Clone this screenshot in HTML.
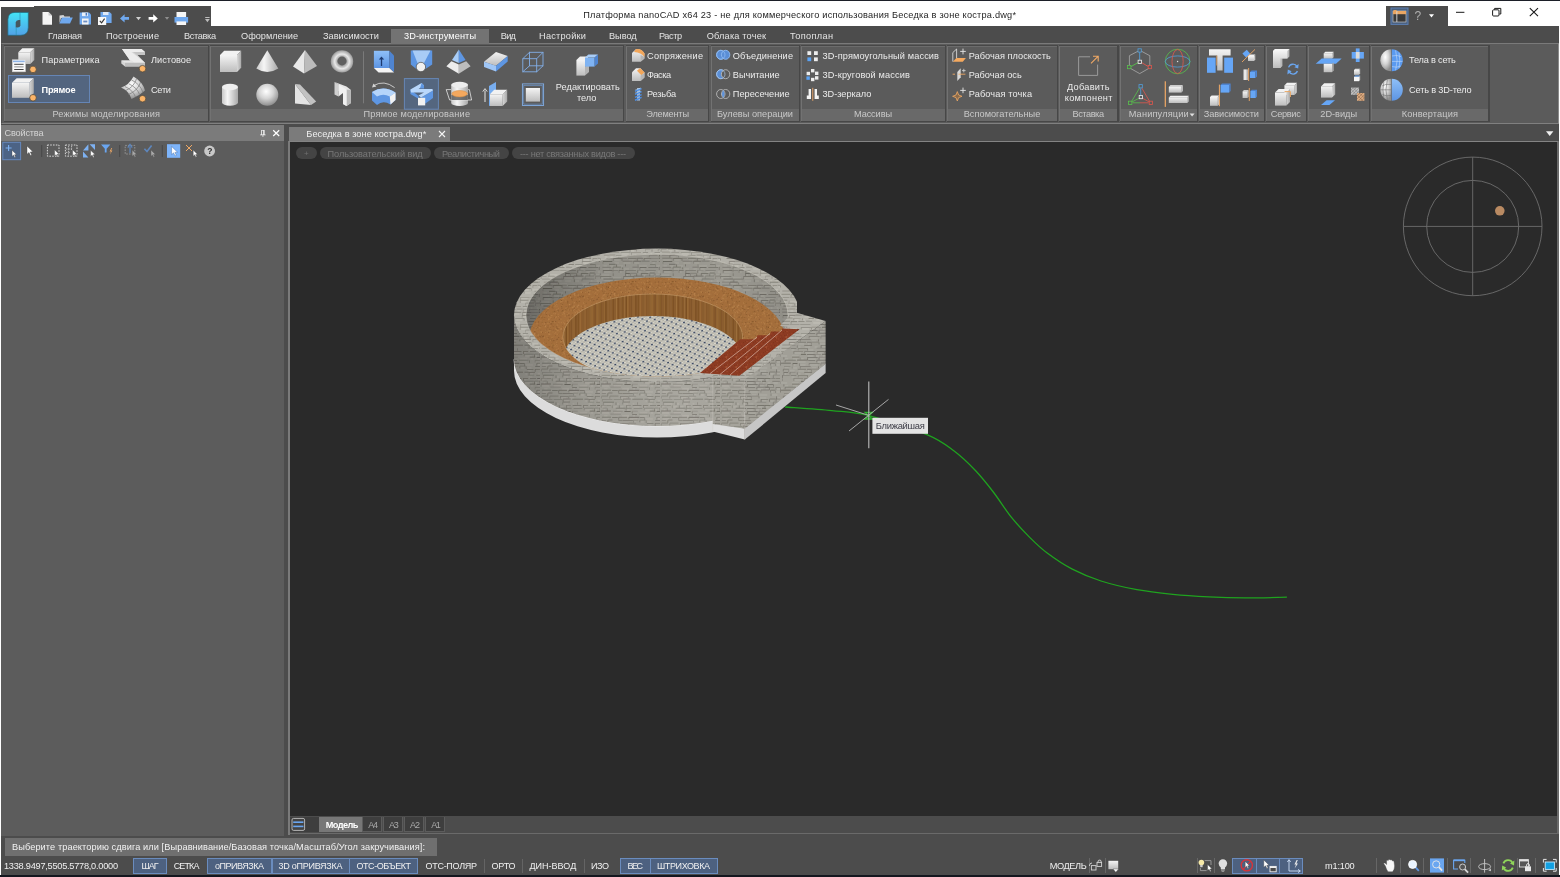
<!DOCTYPE html>
<html lang="ru"><head><meta charset="utf-8"><title>nanoCAD</title>
<style>
html,body{margin:0;padding:0;}
body{width:1560px;height:877px;overflow:hidden;background:#fff;position:relative;font-family:"Liberation Sans", sans-serif;}
#app{position:absolute;left:0;top:0;width:1560px;height:877px;overflow:hidden;will-change:transform;}
#app>div{position:absolute;box-sizing:border-box;}
#app>span{position:absolute;white-space:pre;line-height:14px;height:14px;}
#app>svg{position:absolute;left:0;top:0;}
</style></head><body><div id="app">
<div style="left:0px;top:0px;width:1560px;height:877px;background:#ffffff;"></div>
<div style="left:0px;top:0px;width:1560px;height:1px;background:#1c1f28;"></div>
<div style="left:1px;top:7px;width:34px;height:20px;background:#4c4c4c;"></div>
<div style="left:34px;top:6px;width:177px;height:21px;background:#4c4c4c;"></div>
<div style="left:1386px;top:6px;width:62px;height:21px;background:#4c4c4c;"></div>
<div style="left:1px;top:26px;width:1558px;height:18px;background:#4c4c4c;"></div>
<div style="left:391.2px;top:28.5px;width:97.6px;height:15px;background:#737373;"></div>
<div style="left:1px;top:43px;width:1558px;height:81px;background:#5b5b5b;border-top:1px solid #7a7a7a;border-right:1px solid #8a8a8a;border-bottom:1px solid #808080;border-left:1px solid #4c4c4c"></div>
<div style="left:391.2px;top:43px;width:97.6px;height:1.2px;background:#737373;"></div>
<div style="left:3.6px;top:44.6px;width:205.6px;height:77.1px;background:#474747;"></div>
<div style="left:3.6px;top:45.5px;width:204.4px;height:75.4px;background:#5b5b5b;border-top:1px solid #6c6c6c;border-left:1px solid #727272;"></div>
<div style="left:4.6px;top:109px;width:203.4px;height:11.9px;background:#696969;"></div>
<div style="left:209.6px;top:44.6px;width:414.6px;height:77.1px;background:#474747;"></div>
<div style="left:209.6px;top:45.5px;width:413.4px;height:75.4px;background:#5b5b5b;border-top:1px solid #6c6c6c;border-left:1px solid #727272;"></div>
<div style="left:210.6px;top:109px;width:412.4px;height:11.9px;background:#696969;"></div>
<div style="left:625.6px;top:44.6px;width:83.6px;height:77.1px;background:#474747;"></div>
<div style="left:625.6px;top:45.5px;width:82.4px;height:75.4px;background:#5b5b5b;border-top:1px solid #6c6c6c;border-left:1px solid #727272;"></div>
<div style="left:626.6px;top:109px;width:81.4px;height:11.9px;background:#696969;"></div>
<div style="left:710.6px;top:44.6px;width:89.6px;height:77.1px;background:#474747;"></div>
<div style="left:710.6px;top:45.5px;width:88.4px;height:75.4px;background:#5b5b5b;border-top:1px solid #6c6c6c;border-left:1px solid #727272;"></div>
<div style="left:711.6px;top:109px;width:87.4px;height:11.9px;background:#696969;"></div>
<div style="left:800.6px;top:44.6px;width:145.6px;height:77.1px;background:#474747;"></div>
<div style="left:800.6px;top:45.5px;width:144.4px;height:75.4px;background:#5b5b5b;border-top:1px solid #6c6c6c;border-left:1px solid #727272;"></div>
<div style="left:801.6px;top:109px;width:143.4px;height:11.9px;background:#696969;"></div>
<div style="left:946.6px;top:44.6px;width:111.6px;height:77.1px;background:#474747;"></div>
<div style="left:946.6px;top:45.5px;width:110.4px;height:75.4px;background:#5b5b5b;border-top:1px solid #6c6c6c;border-left:1px solid #727272;"></div>
<div style="left:947.6px;top:109px;width:109.4px;height:11.9px;background:#696969;"></div>
<div style="left:1058.6px;top:44.6px;width:60.1px;height:77.1px;background:#474747;"></div>
<div style="left:1058.6px;top:45.5px;width:58.9px;height:75.4px;background:#5b5b5b;border-top:1px solid #6c6c6c;border-left:1px solid #727272;"></div>
<div style="left:1059.6px;top:109px;width:57.9px;height:11.9px;background:#696969;"></div>
<div style="left:1119.6px;top:44.6px;width:78.6px;height:77.1px;background:#474747;"></div>
<div style="left:1119.6px;top:45.5px;width:77.4px;height:75.4px;background:#5b5b5b;border-top:1px solid #6c6c6c;border-left:1px solid #727272;"></div>
<div style="left:1120.6px;top:109px;width:76.4px;height:11.9px;background:#696969;"></div>
<div style="left:1198.6px;top:44.6px;width:66.6px;height:77.1px;background:#474747;"></div>
<div style="left:1198.6px;top:45.5px;width:65.4px;height:75.4px;background:#5b5b5b;border-top:1px solid #6c6c6c;border-left:1px solid #727272;"></div>
<div style="left:1199.6px;top:109px;width:64.4px;height:11.9px;background:#696969;"></div>
<div style="left:1265.6px;top:44.6px;width:41.6px;height:77.1px;background:#474747;"></div>
<div style="left:1265.6px;top:45.5px;width:40.4px;height:75.4px;background:#5b5b5b;border-top:1px solid #6c6c6c;border-left:1px solid #727272;"></div>
<div style="left:1266.6px;top:109px;width:39.4px;height:11.9px;background:#696969;"></div>
<div style="left:1307.6px;top:44.6px;width:62.6px;height:77.1px;background:#474747;"></div>
<div style="left:1307.6px;top:45.5px;width:61.4px;height:75.4px;background:#5b5b5b;border-top:1px solid #6c6c6c;border-left:1px solid #727272;"></div>
<div style="left:1308.6px;top:109px;width:60.4px;height:11.9px;background:#696969;"></div>
<div style="left:1370.6px;top:44.6px;width:119.1px;height:77.1px;background:#474747;"></div>
<div style="left:1370.6px;top:45.5px;width:117.9px;height:75.4px;background:#5b5b5b;border-top:1px solid #6c6c6c;border-left:1px solid #727272;"></div>
<div style="left:1371.6px;top:109px;width:116.9px;height:11.9px;background:#696969;"></div>
<div style="left:1px;top:124px;width:1558px;height:753px;background:#4c4c4c;"></div>
<div style="left:1px;top:125px;width:283px;height:16px;background:#7b7b7b;"></div>
<div style="left:1px;top:141px;width:283px;height:694.5px;background:#5c5c5c;"></div>
<div style="left:289px;top:127px;width:161px;height:14px;background:#7b7b7b;"></div>
<div style="left:289px;top:141px;width:1269.5px;height:693px;background:#6a6a6a;"></div>
<div style="left:288px;top:141px;width:2px;height:693.5px;background:#7a7a7a;"></div>
<div style="left:289px;top:141px;width:1269px;height:1px;background:#848484;"></div>
<div style="left:290px;top:142px;width:1267px;height:674px;background:#2a2a2a;"></div>
<div style="left:290px;top:816px;width:1267px;height:17px;background:#4c4c4c;"></div>
<div style="left:290px;top:817px;width:29px;height:15px;background:#3e3e3e;"></div>
<div style="left:319px;top:817px;width:43px;height:15px;background:#777777;"></div>
<div style="left:362px;top:817px;width:20px;height:15px;background:#3e3e3e;border:1px solid #5c5c5c;border-top:none"></div>
<div style="left:383px;top:817px;width:20px;height:15px;background:#3e3e3e;border:1px solid #5c5c5c;border-top:none"></div>
<div style="left:404px;top:817px;width:20px;height:15px;background:#3e3e3e;border:1px solid #5c5c5c;border-top:none"></div>
<div style="left:425px;top:817px;width:20px;height:15px;background:#3e3e3e;border:1px solid #5c5c5c;border-top:none"></div>
<div style="left:4.5px;top:838px;width:432.5px;height:18px;background:#6f6f6f;"></div>
<div style="left:0px;top:874.5px;width:1560px;height:2.5px;background:#14171f;"></div>
<div style="left:132.7px;top:857.5px;width:34.30000000000001px;height:16.5px;background:#4d6180;border:1px solid #6a8cbe;"></div>
<div style="left:206.6px;top:857.5px;width:65.4px;height:16.5px;background:#4d6180;border:1px solid #6a8cbe;"></div>
<div style="left:271.5px;top:857.5px;width:78.0px;height:16.5px;background:#4d6180;border:1px solid #6a8cbe;"></div>
<div style="left:349px;top:857.5px;width:69px;height:16.5px;background:#4d6180;border:1px solid #6a8cbe;"></div>
<div style="left:620px;top:857.5px;width:30.5px;height:16.5px;background:#4d6180;border:1px solid #6a8cbe;"></div>
<div style="left:650px;top:857.5px;width:67.5px;height:16.5px;background:#4d6180;border:1px solid #6a8cbe;"></div>
<div style="left:484.3px;top:859px;width:1px;height:14px;background:#646464;"></div>
<div style="left:522.3px;top:859px;width:1px;height:14px;background:#646464;"></div>
<div style="left:584px;top:859px;width:1px;height:14px;background:#646464;"></div>
<div style="left:1088.5px;top:858px;width:1px;height:15px;background:#666666;"></div>
<div style="left:1105.3px;top:858px;width:1px;height:15px;background:#666666;"></div>
<div style="left:1196.7px;top:858px;width:1px;height:15px;background:#666666;"></div>
<div style="left:1214px;top:858px;width:1px;height:15px;background:#666666;"></div>
<div style="left:1376px;top:858px;width:1px;height:15px;background:#666666;"></div>
<div style="left:1399.5px;top:858px;width:1px;height:15px;background:#666666;"></div>
<div style="left:1423px;top:858px;width:1px;height:15px;background:#666666;"></div>
<div style="left:1447px;top:858px;width:1px;height:15px;background:#666666;"></div>
<div style="left:1470px;top:858px;width:1px;height:15px;background:#666666;"></div>
<div style="left:1494px;top:858px;width:1px;height:15px;background:#666666;"></div>
<div style="left:1517px;top:858px;width:1px;height:15px;background:#666666;"></div>
<div style="left:1535px;top:858px;width:1px;height:15px;background:#666666;"></div>
<div style="left:1232px;top:857.5px;width:71px;height:16.5px;background:#4d6180;border:1px solid #6a8cbe;"></div>
<div style="left:1255.5px;top:858px;width:1px;height:15.5px;background:#6a8cbe;"></div>
<div style="left:1279px;top:858px;width:1px;height:15.5px;background:#6a8cbe;"></div>
<div style="left:7.5px;top:75px;width:82.5px;height:28.3px;background:#53657f;border:1px solid #6585b5;"></div>
<div style="left:296px;top:147px;width:20.5px;height:12px;background:#444444;border-radius:6px;"></div>
<div style="left:319.5px;top:147px;width:111.19999999999999px;height:12px;background:#444444;border-radius:6px;"></div>
<div style="left:434px;top:147px;width:74.69999999999999px;height:12px;background:#444444;border-radius:6px;"></div>
<div style="left:511.7px;top:147px;width:123.09999999999997px;height:12px;background:#444444;border-radius:6px;"></div>
<svg width="1560" height="877" viewBox="0 0 1560 877">
<defs>
<pattern id="stW" width="60" height="27" patternUnits="userSpaceOnUse"><rect width="60" height="27" fill="#a5a39b"/><path d="M1.3 0.0 h5.1" stroke="#615e56" stroke-width="0.8" opacity="0.60"/><path d="M1.3 0.3 v2.5" stroke="#615e56" stroke-width="0.7" opacity="0.41"/><rect x="2.3" y="1.2" width="2.1" height="1.5" fill="#b5b3ab" opacity="0.55"/><path d="M6.5 0.5 h4.6" stroke="#615e56" stroke-width="0.6" opacity="0.54"/><path d="M12.3 0.3 v2.9" stroke="#615e56" stroke-width="0.7" opacity="0.52"/><rect x="13.3" y="1.2" width="3.8" height="1.5" fill="#b5b3ab" opacity="0.55"/><path d="M19.3 0.3 v2.6" stroke="#615e56" stroke-width="0.7" opacity="0.66"/><rect x="20.3" y="1.2" width="3.2" height="1.5" fill="#b5b3ab" opacity="0.55"/><path d="M26.5 0.1 h4.4" stroke="#615e56" stroke-width="0.9" opacity="0.62"/><path d="M26.5 0.3 v2.6" stroke="#615e56" stroke-width="0.7" opacity="0.58"/><rect x="27.5" y="1.2" width="1.5" height="1.5" fill="#b5b3ab" opacity="0.55"/><path d="M32.6 0.3 h8.9" stroke="#615e56" stroke-width="0.8" opacity="0.80"/><rect x="33.6" y="1.2" width="5.9" height="1.5" fill="#b5b3ab" opacity="0.55"/><path d="M43.4 0.5 h4.8" stroke="#615e56" stroke-width="0.7" opacity="0.65"/><path d="M43.4 0.3 v2.7" stroke="#615e56" stroke-width="0.7" opacity="0.71"/><rect x="44.4" y="1.2" width="1.8" height="1.5" fill="#b5b3ab" opacity="0.55"/><path d="M50.0 0.4 h6.2" stroke="#615e56" stroke-width="0.8" opacity="0.63"/><path d="M57.2 0.4 h2.8" stroke="#615e56" stroke-width="0.9" opacity="0.85"/><rect x="58.2" y="1.2" width="5.6" height="1.5" fill="#b5b3ab" opacity="0.55"/><path d="M2.7 3.1 h4.2" stroke="#615e56" stroke-width="0.6" opacity="0.47"/><rect x="3.7" y="4.2" width="1.5" height="1.5" fill="#b5b3ab" opacity="0.55"/><path d="M7.3 3.3 v2.4" stroke="#615e56" stroke-width="0.7" opacity="0.62"/><path d="M15.7 3.2 h10.0" stroke="#615e56" stroke-width="0.7" opacity="0.80"/><rect x="16.7" y="4.2" width="7.0" height="1.5" fill="#b5b3ab" opacity="0.55"/><path d="M26.1 3.3 h5.6" stroke="#615e56" stroke-width="0.8" opacity="0.56"/><path d="M26.1 3.3 v2.4" stroke="#615e56" stroke-width="0.7" opacity="0.55"/><rect x="27.1" y="4.2" width="2.6" height="1.5" fill="#b5b3ab" opacity="0.55"/><path d="M33.6 3.4 h8.8" stroke="#615e56" stroke-width="0.9" opacity="0.47"/><path d="M44.2 3.2 h9.6" stroke="#615e56" stroke-width="0.6" opacity="0.70"/><path d="M44.2 3.3 v2.1" stroke="#615e56" stroke-width="0.7" opacity="0.48"/><rect x="45.2" y="4.2" width="6.6" height="1.5" fill="#b5b3ab" opacity="0.55"/><path d="M54.5 3.1 h4.4" stroke="#615e56" stroke-width="0.6" opacity="0.60"/><path d="M54.5 3.3 v2.9" stroke="#615e56" stroke-width="0.7" opacity="0.65"/><rect x="55.5" y="4.2" width="1.5" height="1.5" fill="#b5b3ab" opacity="0.55"/><path d="M59.4 3.1 h0.6" stroke="#615e56" stroke-width="0.9" opacity="0.85"/><path d="M59.4 3.3 v2.5" stroke="#615e56" stroke-width="0.7" opacity="0.43"/><rect x="60.4" y="4.2" width="3.4" height="1.5" fill="#b5b3ab" opacity="0.55"/><path d="M1.1 6.0 h9.8" stroke="#615e56" stroke-width="1.0" opacity="0.66"/><path d="M1.1 6.3 v2.5" stroke="#615e56" stroke-width="0.7" opacity="0.41"/><rect x="2.1" y="7.2" width="6.8" height="1.5" fill="#b5b3ab" opacity="0.55"/><path d="M12.8 6.2 h10.0" stroke="#615e56" stroke-width="0.7" opacity="0.52"/><rect x="13.8" y="7.2" width="7.0" height="1.5" fill="#b5b3ab" opacity="0.55"/><path d="M24.4 6.5 h6.3" stroke="#615e56" stroke-width="1.0" opacity="0.79"/><path d="M32.2 6.2 h5.6" stroke="#615e56" stroke-width="0.6" opacity="0.46"/><path d="M32.2 6.3 v2.3" stroke="#615e56" stroke-width="0.7" opacity="0.68"/><rect x="39.7" y="7.2" width="7.6" height="1.5" fill="#b5b3ab" opacity="0.55"/><path d="M49.7 6.1 h5.6" stroke="#615e56" stroke-width="0.8" opacity="0.81"/><rect x="50.7" y="7.2" width="2.6" height="1.5" fill="#b5b3ab" opacity="0.55"/><path d="M56.6 6.4 h3.4" stroke="#615e56" stroke-width="1.0" opacity="0.76"/><rect x="57.6" y="7.2" width="6.6" height="1.5" fill="#b5b3ab" opacity="0.55"/><rect x="4.2" y="10.2" width="3.3" height="1.5" fill="#b5b3ab" opacity="0.55"/><path d="M10.3 9.1 h10.6" stroke="#615e56" stroke-width="0.7" opacity="0.51"/><rect x="22.2" y="10.2" width="6.8" height="1.5" fill="#b5b3ab" opacity="0.55"/><path d="M32.1 9.6 h4.9" stroke="#615e56" stroke-width="0.9" opacity="0.66"/><rect x="33.1" y="10.2" width="1.9" height="1.5" fill="#b5b3ab" opacity="0.55"/><path d="M38.8 9.2 h9.8" stroke="#615e56" stroke-width="0.7" opacity="0.55"/><rect x="39.8" y="10.2" width="6.8" height="1.5" fill="#b5b3ab" opacity="0.55"/><path d="M49.4 9.3 v2.5" stroke="#615e56" stroke-width="0.7" opacity="0.63"/><path d="M55.1 9.3 h4.9" stroke="#615e56" stroke-width="0.8" opacity="0.46"/><path d="M55.1 9.3 v2.2" stroke="#615e56" stroke-width="0.7" opacity="0.40"/><path d="M1.9 12.2 h9.1" stroke="#615e56" stroke-width="0.8" opacity="0.67"/><rect x="2.9" y="13.2" width="6.1" height="1.5" fill="#b5b3ab" opacity="0.55"/><path d="M12.1 12.5 h5.7" stroke="#615e56" stroke-width="0.8" opacity="0.67"/><path d="M18.7 12.3 h8.3" stroke="#615e56" stroke-width="0.9" opacity="0.63"/><path d="M18.7 12.3 v2.5" stroke="#615e56" stroke-width="0.7" opacity="0.78"/><path d="M28.8 12.3 h10.6" stroke="#615e56" stroke-width="1.0" opacity="0.79"/><path d="M28.8 12.3 v2.1" stroke="#615e56" stroke-width="0.7" opacity="0.58"/><rect x="29.8" y="13.2" width="7.6" height="1.5" fill="#b5b3ab" opacity="0.55"/><path d="M39.8 12.5 h4.5" stroke="#615e56" stroke-width="1.0" opacity="0.51"/><path d="M44.6 12.3 v3.0" stroke="#615e56" stroke-width="0.7" opacity="0.56"/><rect x="45.6" y="13.2" width="7.2" height="1.5" fill="#b5b3ab" opacity="0.55"/><path d="M56.8 12.3 h3.2" stroke="#615e56" stroke-width="0.8" opacity="0.59"/><path d="M56.8 12.3 v2.3" stroke="#615e56" stroke-width="0.7" opacity="0.69"/><rect x="57.8" y="13.2" width="6.8" height="1.5" fill="#b5b3ab" opacity="0.55"/><path d="M1.8 15.4 h4.1" stroke="#615e56" stroke-width="0.8" opacity="0.48"/><path d="M7.8 15.0 h4.7" stroke="#615e56" stroke-width="0.9" opacity="0.56"/><path d="M7.8 15.3 v2.4" stroke="#615e56" stroke-width="0.7" opacity="0.76"/><path d="M18.3 15.3 h4.4" stroke="#615e56" stroke-width="0.6" opacity="0.83"/><path d="M22.9 15.5 h10.0" stroke="#615e56" stroke-width="0.8" opacity="0.59"/><path d="M33.4 15.1 h4.9" stroke="#615e56" stroke-width="0.6" opacity="0.51"/><path d="M33.4 15.3 v2.2" stroke="#615e56" stroke-width="0.7" opacity="0.52"/><rect x="34.4" y="16.2" width="1.9" height="1.5" fill="#b5b3ab" opacity="0.55"/><path d="M39.8 15.1 h6.0" stroke="#615e56" stroke-width="0.7" opacity="0.46"/><path d="M39.8 15.3 v2.0" stroke="#615e56" stroke-width="0.7" opacity="0.69"/><rect x="40.8" y="16.2" width="3.0" height="1.5" fill="#b5b3ab" opacity="0.55"/><path d="M46.2 15.3 v2.8" stroke="#615e56" stroke-width="0.7" opacity="0.57"/><rect x="47.2" y="16.2" width="4.3" height="1.5" fill="#b5b3ab" opacity="0.55"/><path d="M55.2 15.4 h4.8" stroke="#615e56" stroke-width="1.0" opacity="0.59"/><path d="M1.6 18.1 h6.4" stroke="#615e56" stroke-width="0.6" opacity="0.75"/><path d="M1.6 18.3 v2.2" stroke="#615e56" stroke-width="0.7" opacity="0.43"/><path d="M9.8 18.1 h8.7" stroke="#615e56" stroke-width="0.7" opacity="0.63"/><path d="M9.8 18.3 v2.4" stroke="#615e56" stroke-width="0.7" opacity="0.51"/><path d="M20.4 18.6 h7.8" stroke="#615e56" stroke-width="0.7" opacity="0.59"/><path d="M20.4 18.3 v2.4" stroke="#615e56" stroke-width="0.7" opacity="0.59"/><rect x="21.4" y="19.2" width="4.8" height="1.5" fill="#b5b3ab" opacity="0.55"/><path d="M28.7 18.2 h7.5" stroke="#615e56" stroke-width="0.6" opacity="0.61"/><path d="M28.7 18.3 v2.0" stroke="#615e56" stroke-width="0.7" opacity="0.52"/><rect x="29.7" y="19.2" width="4.5" height="1.5" fill="#b5b3ab" opacity="0.55"/><path d="M46.8 18.6 h6.7" stroke="#615e56" stroke-width="0.7" opacity="0.74"/><rect x="47.8" y="19.2" width="3.7" height="1.5" fill="#b5b3ab" opacity="0.55"/><path d="M55.2 18.4 h4.8" stroke="#615e56" stroke-width="0.9" opacity="0.51"/><path d="M55.2 18.3 v2.5" stroke="#615e56" stroke-width="0.7" opacity="0.73"/><path d="M2.3 21.4 h10.2" stroke="#615e56" stroke-width="0.7" opacity="0.46"/><path d="M2.3 21.3 v2.4" stroke="#615e56" stroke-width="0.7" opacity="0.44"/><path d="M13.7 21.4 h8.4" stroke="#615e56" stroke-width="0.8" opacity="0.45"/><path d="M23.1 21.0 h7.7" stroke="#615e56" stroke-width="0.9" opacity="0.55"/><path d="M23.1 21.3 v2.3" stroke="#615e56" stroke-width="0.7" opacity="0.69"/><rect x="24.1" y="22.2" width="4.7" height="1.5" fill="#b5b3ab" opacity="0.55"/><path d="M32.3 21.2 h10.8" stroke="#615e56" stroke-width="0.8" opacity="0.72"/><path d="M44.4 21.2 h4.5" stroke="#615e56" stroke-width="0.9" opacity="0.57"/><rect x="45.4" y="22.2" width="1.5" height="1.5" fill="#b5b3ab" opacity="0.55"/><path d="M49.1 21.4 h5.9" stroke="#615e56" stroke-width="0.9" opacity="0.57"/><path d="M49.1 21.3 v2.5" stroke="#615e56" stroke-width="0.7" opacity="0.59"/><rect x="50.1" y="22.2" width="2.9" height="1.5" fill="#b5b3ab" opacity="0.55"/><rect x="57.8" y="22.2" width="2.4" height="1.5" fill="#b5b3ab" opacity="0.55"/><path d="M3.3 24.2 h10.8" stroke="#615e56" stroke-width="0.7" opacity="0.83"/><path d="M3.3 24.3 v2.6" stroke="#615e56" stroke-width="0.7" opacity="0.46"/><rect x="4.3" y="25.2" width="7.8" height="1.5" fill="#b5b3ab" opacity="0.55"/><path d="M16.0 24.3 v2.9" stroke="#615e56" stroke-width="0.7" opacity="0.68"/><rect x="17.0" y="25.2" width="1.9" height="1.5" fill="#b5b3ab" opacity="0.55"/><path d="M22.7 24.0 h7.4" stroke="#615e56" stroke-width="0.8" opacity="0.63"/><path d="M22.7 24.3 v2.1" stroke="#615e56" stroke-width="0.7" opacity="0.54"/><rect x="23.7" y="25.2" width="4.4" height="1.5" fill="#b5b3ab" opacity="0.55"/><rect x="32.8" y="25.2" width="1.5" height="1.5" fill="#b5b3ab" opacity="0.55"/><path d="M37.6 24.3 v2.4" stroke="#615e56" stroke-width="0.7" opacity="0.56"/><path d="M47.8 24.2 h6.5" stroke="#615e56" stroke-width="0.6" opacity="0.49"/><rect x="48.8" y="25.2" width="3.5" height="1.5" fill="#b5b3ab" opacity="0.55"/><path d="M56.2 24.3 h3.8" stroke="#615e56" stroke-width="0.7" opacity="0.60"/></pattern>
<pattern id="stR" width="60" height="27" patternUnits="userSpaceOnUse"><rect width="60" height="27" fill="#a19f97"/><path d="M2.5 0.3 v2.7" stroke="#5f5c54" stroke-width="0.7" opacity="0.42"/><path d="M13.8 0.2 h9.3" stroke="#5f5c54" stroke-width="0.6" opacity="0.82"/><path d="M13.8 0.3 v2.5" stroke="#5f5c54" stroke-width="0.7" opacity="0.54"/><rect x="14.8" y="1.2" width="6.3" height="1.5" fill="#b1afa7" opacity="0.55"/><path d="M24.6 0.4 h10.8" stroke="#5f5c54" stroke-width="0.7" opacity="0.67"/><path d="M24.6 0.3 v2.2" stroke="#5f5c54" stroke-width="0.7" opacity="0.46"/><rect x="25.6" y="1.2" width="7.8" height="1.5" fill="#b1afa7" opacity="0.55"/><path d="M37.2 0.5 h7.5" stroke="#5f5c54" stroke-width="1.0" opacity="0.63"/><path d="M37.2 0.3 v2.2" stroke="#5f5c54" stroke-width="0.7" opacity="0.44"/><rect x="38.2" y="1.2" width="4.5" height="1.5" fill="#b1afa7" opacity="0.55"/><path d="M44.9 0.3 h5.7" stroke="#5f5c54" stroke-width="1.0" opacity="0.75"/><path d="M44.9 0.3 v2.4" stroke="#5f5c54" stroke-width="0.7" opacity="0.61"/><rect x="45.9" y="1.2" width="2.7" height="1.5" fill="#b1afa7" opacity="0.55"/><path d="M51.2 0.6 h4.4" stroke="#5f5c54" stroke-width="0.7" opacity="0.65"/><path d="M56.1 0.2 h3.9" stroke="#5f5c54" stroke-width="0.8" opacity="0.83"/><path d="M0.1 3.3 v2.6" stroke="#5f5c54" stroke-width="0.7" opacity="0.40"/><rect x="1.1" y="4.2" width="6.0" height="1.5" fill="#b1afa7" opacity="0.55"/><rect x="11.9" y="4.2" width="6.8" height="1.5" fill="#b1afa7" opacity="0.55"/><path d="M20.9 3.4 h5.1" stroke="#5f5c54" stroke-width="1.0" opacity="0.74"/><path d="M26.9 3.5 h7.9" stroke="#5f5c54" stroke-width="0.7" opacity="0.82"/><rect x="27.9" y="4.2" width="4.9" height="1.5" fill="#b1afa7" opacity="0.55"/><path d="M35.1 3.4 h5.8" stroke="#5f5c54" stroke-width="0.6" opacity="0.48"/><path d="M35.1 3.3 v2.6" stroke="#5f5c54" stroke-width="0.7" opacity="0.56"/><rect x="36.1" y="4.2" width="2.8" height="1.5" fill="#b1afa7" opacity="0.55"/><path d="M42.0 3.3 h4.1" stroke="#5f5c54" stroke-width="1.0" opacity="0.71"/><rect x="43.0" y="4.2" width="1.5" height="1.5" fill="#b1afa7" opacity="0.55"/><rect x="47.6" y="4.2" width="2.7" height="1.5" fill="#b1afa7" opacity="0.55"/><path d="M52.3 3.3 h7.5" stroke="#5f5c54" stroke-width="0.7" opacity="0.72"/><rect x="53.3" y="4.2" width="4.5" height="1.5" fill="#b1afa7" opacity="0.55"/><path d="M59.9 3.4 h0.1" stroke="#5f5c54" stroke-width="0.7" opacity="0.77"/><rect x="60.9" y="4.2" width="3.4" height="1.5" fill="#b1afa7" opacity="0.55"/><path d="M3.9 6.3 v2.2" stroke="#5f5c54" stroke-width="0.7" opacity="0.70"/><rect x="4.9" y="7.2" width="3.2" height="1.5" fill="#b1afa7" opacity="0.55"/><path d="M12.0 6.1 h7.5" stroke="#5f5c54" stroke-width="0.8" opacity="0.72"/><rect x="13.0" y="7.2" width="4.5" height="1.5" fill="#b1afa7" opacity="0.55"/><path d="M20.2 6.3 v2.1" stroke="#5f5c54" stroke-width="0.7" opacity="0.42"/><rect x="21.2" y="7.2" width="2.5" height="1.5" fill="#b1afa7" opacity="0.55"/><path d="M27.5 6.6 h10.2" stroke="#5f5c54" stroke-width="1.0" opacity="0.58"/><path d="M27.5 6.3 v2.9" stroke="#5f5c54" stroke-width="0.7" opacity="0.70"/><rect x="28.5" y="7.2" width="7.2" height="1.5" fill="#b1afa7" opacity="0.55"/><path d="M39.0 6.2 h6.7" stroke="#5f5c54" stroke-width="0.7" opacity="0.45"/><path d="M39.0 6.3 v2.4" stroke="#5f5c54" stroke-width="0.7" opacity="0.78"/><rect x="40.0" y="7.2" width="3.7" height="1.5" fill="#b1afa7" opacity="0.55"/><path d="M47.6 6.5 h5.5" stroke="#5f5c54" stroke-width="0.9" opacity="0.62"/><path d="M47.6 6.3 v2.5" stroke="#5f5c54" stroke-width="0.7" opacity="0.55"/><path d="M53.4 6.3 v2.4" stroke="#5f5c54" stroke-width="0.7" opacity="0.72"/><path d="M0.1 9.3 v2.7" stroke="#5f5c54" stroke-width="0.7" opacity="0.76"/><rect x="1.1" y="10.2" width="1.5" height="1.5" fill="#b1afa7" opacity="0.55"/><path d="M5.1 9.2 h10.7" stroke="#5f5c54" stroke-width="0.9" opacity="0.58"/><path d="M5.1 9.3 v2.0" stroke="#5f5c54" stroke-width="0.7" opacity="0.70"/><path d="M17.1 9.1 h10.6" stroke="#5f5c54" stroke-width="0.8" opacity="0.83"/><rect x="18.1" y="10.2" width="7.6" height="1.5" fill="#b1afa7" opacity="0.55"/><path d="M28.2 9.6 h7.0" stroke="#5f5c54" stroke-width="0.7" opacity="0.77"/><path d="M36.8 9.2 h8.3" stroke="#5f5c54" stroke-width="0.7" opacity="0.76"/><path d="M36.8 9.3 v2.2" stroke="#5f5c54" stroke-width="0.7" opacity="0.70"/><rect x="37.8" y="10.2" width="5.3" height="1.5" fill="#b1afa7" opacity="0.55"/><path d="M45.1 9.2 h4.2" stroke="#5f5c54" stroke-width="1.0" opacity="0.80"/><rect x="46.1" y="10.2" width="1.5" height="1.5" fill="#b1afa7" opacity="0.55"/><path d="M49.5 9.4 h4.7" stroke="#5f5c54" stroke-width="0.8" opacity="0.54"/><path d="M49.5 9.3 v2.6" stroke="#5f5c54" stroke-width="0.7" opacity="0.67"/><path d="M55.9 9.5 h4.1" stroke="#5f5c54" stroke-width="0.7" opacity="0.68"/><path d="M55.9 9.3 v2.7" stroke="#5f5c54" stroke-width="0.7" opacity="0.48"/><rect x="56.9" y="10.2" width="5.7" height="1.5" fill="#b1afa7" opacity="0.55"/><path d="M0.6 12.2 h10.2" stroke="#5f5c54" stroke-width="0.8" opacity="0.85"/><path d="M0.6 12.3 v2.2" stroke="#5f5c54" stroke-width="0.7" opacity="0.72"/><path d="M12.8 12.5 h4.7" stroke="#5f5c54" stroke-width="0.9" opacity="0.82"/><path d="M12.8 12.3 v2.3" stroke="#5f5c54" stroke-width="0.7" opacity="0.45"/><rect x="13.8" y="13.2" width="1.7" height="1.5" fill="#b1afa7" opacity="0.55"/><path d="M19.4 12.3 v2.9" stroke="#5f5c54" stroke-width="0.7" opacity="0.58"/><rect x="20.4" y="13.2" width="5.1" height="1.5" fill="#b1afa7" opacity="0.55"/><path d="M29.1 12.4 h10.6" stroke="#5f5c54" stroke-width="0.8" opacity="0.54"/><path d="M29.1 12.3 v2.1" stroke="#5f5c54" stroke-width="0.7" opacity="0.48"/><rect x="30.1" y="13.2" width="7.6" height="1.5" fill="#b1afa7" opacity="0.55"/><path d="M40.9 12.0 h8.6" stroke="#5f5c54" stroke-width="0.7" opacity="0.72"/><path d="M40.9 12.3 v2.3" stroke="#5f5c54" stroke-width="0.7" opacity="0.48"/><path d="M50.6 12.2 h4.4" stroke="#5f5c54" stroke-width="0.8" opacity="0.71"/><path d="M50.6 12.3 v2.2" stroke="#5f5c54" stroke-width="0.7" opacity="0.68"/><rect x="51.6" y="13.2" width="1.5" height="1.5" fill="#b1afa7" opacity="0.55"/><path d="M55.6 12.3 v2.6" stroke="#5f5c54" stroke-width="0.7" opacity="0.54"/><rect x="56.6" y="13.2" width="3.2" height="1.5" fill="#b1afa7" opacity="0.55"/><path d="M4.0 15.4 h6.5" stroke="#5f5c54" stroke-width="0.7" opacity="0.45"/><rect x="5.0" y="16.2" width="3.5" height="1.5" fill="#b1afa7" opacity="0.55"/><path d="M12.2 15.3 v2.2" stroke="#5f5c54" stroke-width="0.7" opacity="0.41"/><rect x="13.2" y="16.2" width="3.8" height="1.5" fill="#b1afa7" opacity="0.55"/><path d="M20.3 15.4 h10.4" stroke="#5f5c54" stroke-width="0.7" opacity="0.65"/><path d="M20.3 15.3 v2.3" stroke="#5f5c54" stroke-width="0.7" opacity="0.61"/><rect x="31.9" y="16.2" width="4.4" height="1.5" fill="#b1afa7" opacity="0.55"/><path d="M38.6 15.3 v2.1" stroke="#5f5c54" stroke-width="0.7" opacity="0.77"/><rect x="39.6" y="16.2" width="7.6" height="1.5" fill="#b1afa7" opacity="0.55"/><path d="M51.0 15.3 v2.8" stroke="#5f5c54" stroke-width="0.7" opacity="0.49"/><rect x="52.0" y="16.2" width="5.3" height="1.5" fill="#b1afa7" opacity="0.55"/><path d="M3.3 18.2 h5.3" stroke="#5f5c54" stroke-width="0.8" opacity="0.60"/><path d="M3.3 18.3 v2.2" stroke="#5f5c54" stroke-width="0.7" opacity="0.69"/><path d="M8.7 18.3 v2.8" stroke="#5f5c54" stroke-width="0.7" opacity="0.45"/><rect x="9.7" y="19.2" width="4.9" height="1.5" fill="#b1afa7" opacity="0.55"/><path d="M17.7 18.3 h8.4" stroke="#5f5c54" stroke-width="0.8" opacity="0.62"/><rect x="18.7" y="19.2" width="5.4" height="1.5" fill="#b1afa7" opacity="0.55"/><path d="M27.0 18.3 h4.2" stroke="#5f5c54" stroke-width="0.7" opacity="0.76"/><rect x="28.0" y="19.2" width="1.5" height="1.5" fill="#b1afa7" opacity="0.55"/><path d="M31.5 18.1 h7.3" stroke="#5f5c54" stroke-width="0.8" opacity="0.49"/><path d="M31.5 18.3 v2.5" stroke="#5f5c54" stroke-width="0.7" opacity="0.42"/><path d="M39.0 18.3 v2.1" stroke="#5f5c54" stroke-width="0.7" opacity="0.60"/><rect x="40.0" y="19.2" width="6.1" height="1.5" fill="#b1afa7" opacity="0.55"/><path d="M56.6 18.3 v3.0" stroke="#5f5c54" stroke-width="0.7" opacity="0.77"/><rect x="57.6" y="19.2" width="2.4" height="1.5" fill="#b1afa7" opacity="0.55"/><path d="M3.7 21.5 h4.5" stroke="#5f5c54" stroke-width="0.7" opacity="0.81"/><path d="M3.7 21.3 v2.8" stroke="#5f5c54" stroke-width="0.7" opacity="0.46"/><rect x="4.7" y="22.2" width="1.5" height="1.5" fill="#b1afa7" opacity="0.55"/><path d="M10.0 21.3 h5.5" stroke="#5f5c54" stroke-width="0.7" opacity="0.46"/><path d="M10.0 21.3 v2.2" stroke="#5f5c54" stroke-width="0.7" opacity="0.77"/><path d="M17.3 21.3 v2.5" stroke="#5f5c54" stroke-width="0.7" opacity="0.65"/><rect x="18.3" y="22.2" width="2.2" height="1.5" fill="#b1afa7" opacity="0.55"/><path d="M24.2 21.5 h7.9" stroke="#5f5c54" stroke-width="0.6" opacity="0.85"/><rect x="25.2" y="22.2" width="4.9" height="1.5" fill="#b1afa7" opacity="0.55"/><rect x="34.7" y="22.2" width="2.9" height="1.5" fill="#b1afa7" opacity="0.55"/><path d="M41.1 21.4 h7.1" stroke="#5f5c54" stroke-width="0.6" opacity="0.78"/><path d="M41.1 21.3 v2.6" stroke="#5f5c54" stroke-width="0.7" opacity="0.79"/><rect x="42.1" y="22.2" width="4.1" height="1.5" fill="#b1afa7" opacity="0.55"/><path d="M49.5 21.0 h6.2" stroke="#5f5c54" stroke-width="0.7" opacity="0.70"/><path d="M49.5 21.3 v2.5" stroke="#5f5c54" stroke-width="0.7" opacity="0.76"/><rect x="50.5" y="22.2" width="3.2" height="1.5" fill="#b1afa7" opacity="0.55"/><path d="M56.1 21.0 h3.9" stroke="#5f5c54" stroke-width="0.7" opacity="0.49"/><path d="M56.1 21.3 v2.2" stroke="#5f5c54" stroke-width="0.7" opacity="0.63"/><rect x="57.1" y="22.2" width="5.6" height="1.5" fill="#b1afa7" opacity="0.55"/><path d="M2.5 24.6 h7.3" stroke="#5f5c54" stroke-width="0.7" opacity="0.51"/><path d="M2.5 24.3 v2.6" stroke="#5f5c54" stroke-width="0.7" opacity="0.75"/><path d="M10.6 24.4 h5.8" stroke="#5f5c54" stroke-width="0.8" opacity="0.59"/><rect x="11.6" y="25.2" width="2.8" height="1.5" fill="#b1afa7" opacity="0.55"/><path d="M18.3 24.5 h9.1" stroke="#5f5c54" stroke-width="0.6" opacity="0.66"/><path d="M18.3 24.3 v2.2" stroke="#5f5c54" stroke-width="0.7" opacity="0.42"/><path d="M27.5 24.3 v2.2" stroke="#5f5c54" stroke-width="0.7" opacity="0.64"/><rect x="28.5" y="25.2" width="4.9" height="1.5" fill="#b1afa7" opacity="0.55"/><path d="M36.6 24.2 h9.7" stroke="#5f5c54" stroke-width="0.7" opacity="0.47"/><rect x="48.8" y="25.2" width="1.5" height="1.5" fill="#b1afa7" opacity="0.55"/><path d="M53.3 24.1 h6.7" stroke="#5f5c54" stroke-width="0.7" opacity="0.47"/><path d="M53.3 24.3 v2.7" stroke="#5f5c54" stroke-width="0.7" opacity="0.68"/></pattern>
<pattern id="stT" width="60" height="27" patternUnits="userSpaceOnUse"><rect width="60" height="27" fill="#b3b1a9"/><path d="M1.1 0.5 h7.9" stroke="#75726a" stroke-width="0.8" opacity="0.56"/><path d="M9.4 0.2 h10.2" stroke="#75726a" stroke-width="0.7" opacity="0.75"/><path d="M20.2 0.1 h10.2" stroke="#75726a" stroke-width="1.0" opacity="0.70"/><path d="M40.5 0.2 h9.1" stroke="#75726a" stroke-width="0.7" opacity="0.70"/><path d="M40.5 0.3 v2.9" stroke="#75726a" stroke-width="0.7" opacity="0.46"/><rect x="41.5" y="1.2" width="6.1" height="1.5" fill="#c6c4bc" opacity="0.55"/><path d="M49.8 0.1 h10.2" stroke="#75726a" stroke-width="0.6" opacity="0.47"/><path d="M2.9 3.2 h4.5" stroke="#75726a" stroke-width="0.9" opacity="0.78"/><rect x="3.9" y="4.2" width="1.5" height="1.5" fill="#c6c4bc" opacity="0.55"/><path d="M9.1 3.3 v2.2" stroke="#75726a" stroke-width="0.7" opacity="0.44"/><rect x="10.1" y="4.2" width="7.4" height="1.5" fill="#c6c4bc" opacity="0.55"/><path d="M21.2 3.5 h9.7" stroke="#75726a" stroke-width="0.9" opacity="0.56"/><path d="M21.2 3.3 v2.1" stroke="#75726a" stroke-width="0.7" opacity="0.70"/><rect x="22.2" y="4.2" width="6.7" height="1.5" fill="#c6c4bc" opacity="0.55"/><path d="M31.6 3.2 h7.0" stroke="#75726a" stroke-width="0.7" opacity="0.74"/><path d="M31.6 3.3 v2.3" stroke="#75726a" stroke-width="0.7" opacity="0.79"/><rect x="32.6" y="4.2" width="4.0" height="1.5" fill="#c6c4bc" opacity="0.55"/><path d="M40.2 3.2 h8.3" stroke="#75726a" stroke-width="0.8" opacity="0.76"/><path d="M40.2 3.3 v2.7" stroke="#75726a" stroke-width="0.7" opacity="0.62"/><rect x="41.2" y="4.2" width="5.3" height="1.5" fill="#c6c4bc" opacity="0.55"/><path d="M50.3 3.3 v2.0" stroke="#75726a" stroke-width="0.7" opacity="0.48"/><path d="M56.9 3.3 h3.1" stroke="#75726a" stroke-width="0.9" opacity="0.52"/><path d="M56.9 3.3 v2.3" stroke="#75726a" stroke-width="0.7" opacity="0.73"/><rect x="57.9" y="4.2" width="1.5" height="1.5" fill="#c6c4bc" opacity="0.55"/><path d="M1.1 6.3 h5.5" stroke="#75726a" stroke-width="0.6" opacity="0.70"/><path d="M1.1 6.3 v2.8" stroke="#75726a" stroke-width="0.7" opacity="0.68"/><path d="M7.9 6.2 h6.5" stroke="#75726a" stroke-width="1.0" opacity="0.48"/><rect x="8.9" y="7.2" width="3.5" height="1.5" fill="#c6c4bc" opacity="0.55"/><path d="M14.8 6.3 v2.4" stroke="#75726a" stroke-width="0.7" opacity="0.75"/><rect x="15.8" y="7.2" width="2.8" height="1.5" fill="#c6c4bc" opacity="0.55"/><path d="M30.0 6.5 h6.3" stroke="#75726a" stroke-width="0.9" opacity="0.75"/><path d="M30.0 6.3 v2.4" stroke="#75726a" stroke-width="0.7" opacity="0.71"/><rect x="31.0" y="7.2" width="3.3" height="1.5" fill="#c6c4bc" opacity="0.55"/><path d="M36.5 6.3 v2.2" stroke="#75726a" stroke-width="0.7" opacity="0.52"/><path d="M45.4 6.1 h5.1" stroke="#75726a" stroke-width="0.7" opacity="0.66"/><path d="M45.4 6.3 v2.3" stroke="#75726a" stroke-width="0.7" opacity="0.48"/><path d="M52.0 6.3 v2.4" stroke="#75726a" stroke-width="0.7" opacity="0.79"/><path d="M58.2 6.4 h1.8" stroke="#75726a" stroke-width="0.6" opacity="0.53"/><path d="M58.2 6.3 v2.0" stroke="#75726a" stroke-width="0.7" opacity="0.56"/><path d="M2.0 9.1 h8.4" stroke="#75726a" stroke-width="0.8" opacity="0.61"/><path d="M11.3 9.3 h8.0" stroke="#75726a" stroke-width="0.7" opacity="0.74"/><path d="M20.7 9.4 h10.0" stroke="#75726a" stroke-width="0.8" opacity="0.58"/><rect x="21.7" y="10.2" width="7.0" height="1.5" fill="#c6c4bc" opacity="0.55"/><path d="M31.5 9.4 h9.5" stroke="#75726a" stroke-width="0.7" opacity="0.62"/><path d="M31.5 9.3 v2.6" stroke="#75726a" stroke-width="0.7" opacity="0.56"/><path d="M42.8 9.5 h5.3" stroke="#75726a" stroke-width="0.8" opacity="0.65"/><rect x="43.8" y="10.2" width="2.3" height="1.5" fill="#c6c4bc" opacity="0.55"/><rect x="50.2" y="10.2" width="2.1" height="1.5" fill="#c6c4bc" opacity="0.55"/><path d="M54.5 9.4 h5.5" stroke="#75726a" stroke-width="0.8" opacity="0.71"/><rect x="55.5" y="10.2" width="5.0" height="1.5" fill="#c6c4bc" opacity="0.55"/><path d="M3.8 12.2 h5.5" stroke="#75726a" stroke-width="0.9" opacity="0.50"/><rect x="4.8" y="13.2" width="2.5" height="1.5" fill="#c6c4bc" opacity="0.55"/><path d="M9.4 12.0 h5.9" stroke="#75726a" stroke-width="0.8" opacity="0.62"/><rect x="10.4" y="13.2" width="2.9" height="1.5" fill="#c6c4bc" opacity="0.55"/><path d="M15.8 12.6 h5.6" stroke="#75726a" stroke-width="0.8" opacity="0.54"/><rect x="16.8" y="13.2" width="2.6" height="1.5" fill="#c6c4bc" opacity="0.55"/><path d="M27.7 12.6 h7.9" stroke="#75726a" stroke-width="0.7" opacity="0.71"/><path d="M36.5 12.1 h6.1" stroke="#75726a" stroke-width="0.9" opacity="0.59"/><rect x="37.5" y="13.2" width="3.1" height="1.5" fill="#c6c4bc" opacity="0.55"/><path d="M43.3 12.1 h5.8" stroke="#75726a" stroke-width="0.6" opacity="0.74"/><path d="M43.3 12.3 v2.2" stroke="#75726a" stroke-width="0.7" opacity="0.52"/><rect x="44.3" y="13.2" width="2.8" height="1.5" fill="#c6c4bc" opacity="0.55"/><path d="M50.0 12.2 h8.5" stroke="#75726a" stroke-width="1.0" opacity="0.79"/><path d="M50.0 12.3 v2.8" stroke="#75726a" stroke-width="0.7" opacity="0.76"/><path d="M58.7 12.0 h1.3" stroke="#75726a" stroke-width="0.6" opacity="0.83"/><rect x="59.7" y="13.2" width="6.8" height="1.5" fill="#c6c4bc" opacity="0.55"/><path d="M0.6 15.3 v2.2" stroke="#75726a" stroke-width="0.7" opacity="0.76"/><path d="M6.5 15.5 h10.2" stroke="#75726a" stroke-width="0.9" opacity="0.81"/><path d="M17.2 15.4 h8.8" stroke="#75726a" stroke-width="0.8" opacity="0.80"/><rect x="18.2" y="16.2" width="5.8" height="1.5" fill="#c6c4bc" opacity="0.55"/><path d="M26.5 15.0 h5.0" stroke="#75726a" stroke-width="0.8" opacity="0.51"/><path d="M26.5 15.3 v2.5" stroke="#75726a" stroke-width="0.7" opacity="0.62"/><path d="M31.5 15.3 h9.9" stroke="#75726a" stroke-width="0.9" opacity="0.79"/><path d="M31.5 15.3 v2.4" stroke="#75726a" stroke-width="0.7" opacity="0.78"/><rect x="32.5" y="16.2" width="6.9" height="1.5" fill="#c6c4bc" opacity="0.55"/><path d="M42.6 15.4 h8.5" stroke="#75726a" stroke-width="0.9" opacity="0.82"/><path d="M42.6 15.3 v3.0" stroke="#75726a" stroke-width="0.7" opacity="0.60"/><rect x="43.6" y="16.2" width="5.5" height="1.5" fill="#c6c4bc" opacity="0.55"/><path d="M52.9 15.4 h4.2" stroke="#75726a" stroke-width="0.7" opacity="0.79"/><path d="M52.9 15.3 v2.5" stroke="#75726a" stroke-width="0.7" opacity="0.61"/><path d="M57.5 15.3 h2.5" stroke="#75726a" stroke-width="0.9" opacity="0.57"/><rect x="58.5" y="16.2" width="4.0" height="1.5" fill="#c6c4bc" opacity="0.55"/><path d="M9.3 18.4 h6.2" stroke="#75726a" stroke-width="0.9" opacity="0.76"/><path d="M9.3 18.3 v2.7" stroke="#75726a" stroke-width="0.7" opacity="0.75"/><rect x="10.3" y="19.2" width="3.2" height="1.5" fill="#c6c4bc" opacity="0.55"/><path d="M15.6 18.1 h6.1" stroke="#75726a" stroke-width="1.0" opacity="0.69"/><path d="M23.5 18.4 h8.3" stroke="#75726a" stroke-width="0.9" opacity="0.69"/><rect x="24.5" y="19.2" width="5.3" height="1.5" fill="#c6c4bc" opacity="0.55"/><path d="M33.2 18.3 v2.2" stroke="#75726a" stroke-width="0.7" opacity="0.41"/><path d="M42.2 18.5 h8.6" stroke="#75726a" stroke-width="0.9" opacity="0.67"/><path d="M42.2 18.3 v2.3" stroke="#75726a" stroke-width="0.7" opacity="0.57"/><rect x="43.2" y="19.2" width="5.6" height="1.5" fill="#c6c4bc" opacity="0.55"/><path d="M51.6 18.3 v2.6" stroke="#75726a" stroke-width="0.7" opacity="0.42"/><rect x="52.6" y="19.2" width="5.5" height="1.5" fill="#c6c4bc" opacity="0.55"/><path d="M2.3 21.0 h10.4" stroke="#75726a" stroke-width="0.8" opacity="0.69"/><path d="M13.7 21.4 h6.9" stroke="#75726a" stroke-width="0.7" opacity="0.51"/><path d="M13.7 21.3 v2.0" stroke="#75726a" stroke-width="0.7" opacity="0.67"/><rect x="14.7" y="22.2" width="3.9" height="1.5" fill="#c6c4bc" opacity="0.55"/><path d="M22.5 21.3 v2.0" stroke="#75726a" stroke-width="0.7" opacity="0.69"/><rect x="23.5" y="22.2" width="1.6" height="1.5" fill="#c6c4bc" opacity="0.55"/><path d="M28.6 21.5 h5.3" stroke="#75726a" stroke-width="0.9" opacity="0.79"/><rect x="29.6" y="22.2" width="2.3" height="1.5" fill="#c6c4bc" opacity="0.55"/><path d="M35.2 21.6 h9.0" stroke="#75726a" stroke-width="0.7" opacity="0.84"/><rect x="36.2" y="22.2" width="6.0" height="1.5" fill="#c6c4bc" opacity="0.55"/><path d="M44.1 21.3 v2.3" stroke="#75726a" stroke-width="0.7" opacity="0.69"/><rect x="45.1" y="22.2" width="5.6" height="1.5" fill="#c6c4bc" opacity="0.55"/><path d="M54.4 21.2 h5.6" stroke="#75726a" stroke-width="0.8" opacity="0.63"/><rect x="55.4" y="22.2" width="4.4" height="1.5" fill="#c6c4bc" opacity="0.55"/><path d="M1.5 24.3 h8.5" stroke="#75726a" stroke-width="0.8" opacity="0.76"/><path d="M11.1 24.6 h6.0" stroke="#75726a" stroke-width="0.9" opacity="0.78"/><path d="M11.1 24.3 v2.6" stroke="#75726a" stroke-width="0.7" opacity="0.79"/><path d="M18.3 24.5 h6.2" stroke="#75726a" stroke-width="0.8" opacity="0.72"/><path d="M26.1 24.2 h6.0" stroke="#75726a" stroke-width="0.8" opacity="0.68"/><rect x="33.2" y="25.2" width="6.8" height="1.5" fill="#c6c4bc" opacity="0.55"/><path d="M53.2 24.5 h4.6" stroke="#75726a" stroke-width="0.7" opacity="0.75"/><rect x="54.2" y="25.2" width="1.6" height="1.5" fill="#c6c4bc" opacity="0.55"/><path d="M59.0 24.1 h1.0" stroke="#75726a" stroke-width="0.7" opacity="0.75"/><rect x="60.0" y="25.2" width="5.7" height="1.5" fill="#c6c4bc" opacity="0.55"/></pattern>
<pattern id="stI" width="60" height="27" patternUnits="userSpaceOnUse"><rect width="60" height="27" fill="#9f9d95"/><path d="M3.2 0.3 h9.4" stroke="#605d55" stroke-width="1.0" opacity="0.80"/><path d="M3.2 0.3 v2.5" stroke="#605d55" stroke-width="0.7" opacity="0.64"/><rect x="4.2" y="1.2" width="6.4" height="1.5" fill="#aeaca4" opacity="0.55"/><path d="M13.0 0.2 h5.3" stroke="#605d55" stroke-width="0.8" opacity="0.61"/><path d="M13.0 0.3 v2.1" stroke="#605d55" stroke-width="0.7" opacity="0.42"/><path d="M19.0 0.5 h4.7" stroke="#605d55" stroke-width="0.7" opacity="0.69"/><path d="M19.0 0.3 v2.5" stroke="#605d55" stroke-width="0.7" opacity="0.41"/><rect x="20.0" y="1.2" width="1.7" height="1.5" fill="#aeaca4" opacity="0.55"/><path d="M25.8 0.3 h10.1" stroke="#605d55" stroke-width="0.7" opacity="0.76"/><path d="M25.8 0.3 v2.9" stroke="#605d55" stroke-width="0.7" opacity="0.71"/><path d="M37.7 0.1 h5.8" stroke="#605d55" stroke-width="0.7" opacity="0.48"/><path d="M37.7 0.3 v2.6" stroke="#605d55" stroke-width="0.7" opacity="0.75"/><rect x="38.7" y="1.2" width="2.8" height="1.5" fill="#aeaca4" opacity="0.55"/><path d="M45.4 0.4 h10.4" stroke="#605d55" stroke-width="0.8" opacity="0.50"/><rect x="46.4" y="1.2" width="7.4" height="1.5" fill="#aeaca4" opacity="0.55"/><rect x="57.9" y="1.2" width="5.5" height="1.5" fill="#aeaca4" opacity="0.55"/><path d="M0.6 3.3 v2.0" stroke="#605d55" stroke-width="0.7" opacity="0.50"/><rect x="1.6" y="4.2" width="7.8" height="1.5" fill="#aeaca4" opacity="0.55"/><path d="M13.2 3.3 v2.8" stroke="#605d55" stroke-width="0.7" opacity="0.68"/><path d="M25.5 3.5 h4.4" stroke="#605d55" stroke-width="1.0" opacity="0.72"/><path d="M25.5 3.3 v2.6" stroke="#605d55" stroke-width="0.7" opacity="0.70"/><rect x="26.5" y="4.2" width="1.5" height="1.5" fill="#aeaca4" opacity="0.55"/><path d="M30.5 3.3 h5.8" stroke="#605d55" stroke-width="0.7" opacity="0.55"/><path d="M30.5 3.3 v2.7" stroke="#605d55" stroke-width="0.7" opacity="0.41"/><path d="M36.7 3.3 v2.9" stroke="#605d55" stroke-width="0.7" opacity="0.75"/><path d="M41.3 3.6 h7.1" stroke="#605d55" stroke-width="0.9" opacity="0.70"/><path d="M41.3 3.3 v2.3" stroke="#605d55" stroke-width="0.7" opacity="0.73"/><rect x="42.3" y="4.2" width="4.1" height="1.5" fill="#aeaca4" opacity="0.55"/><path d="M49.7 3.0 h5.0" stroke="#605d55" stroke-width="0.9" opacity="0.67"/><path d="M49.7 3.3 v2.9" stroke="#605d55" stroke-width="0.7" opacity="0.51"/><rect x="50.7" y="4.2" width="2.0" height="1.5" fill="#aeaca4" opacity="0.55"/><path d="M55.0 3.3 v2.2" stroke="#605d55" stroke-width="0.7" opacity="0.60"/><rect x="56.0" y="4.2" width="2.9" height="1.5" fill="#aeaca4" opacity="0.55"/><path d="M0.5 6.5 h10.9" stroke="#605d55" stroke-width="0.9" opacity="0.53"/><path d="M0.5 6.3 v2.3" stroke="#605d55" stroke-width="0.7" opacity="0.50"/><rect x="1.5" y="7.2" width="7.9" height="1.5" fill="#aeaca4" opacity="0.55"/><rect x="13.0" y="7.2" width="7.9" height="1.5" fill="#aeaca4" opacity="0.55"/><path d="M23.6 6.4 h10.3" stroke="#605d55" stroke-width="0.7" opacity="0.84"/><path d="M23.6 6.3 v2.8" stroke="#605d55" stroke-width="0.7" opacity="0.54"/><rect x="24.6" y="7.2" width="7.3" height="1.5" fill="#aeaca4" opacity="0.55"/><path d="M33.8 6.1 h9.8" stroke="#605d55" stroke-width="0.8" opacity="0.81"/><path d="M33.8 6.3 v2.6" stroke="#605d55" stroke-width="0.7" opacity="0.46"/><rect x="34.8" y="7.2" width="6.8" height="1.5" fill="#aeaca4" opacity="0.55"/><path d="M45.2 6.0 h9.0" stroke="#605d55" stroke-width="0.6" opacity="0.69"/><path d="M45.2 6.3 v2.3" stroke="#605d55" stroke-width="0.7" opacity="0.48"/><path d="M55.6 6.1 h4.4" stroke="#605d55" stroke-width="0.6" opacity="0.74"/><path d="M55.6 6.3 v2.7" stroke="#605d55" stroke-width="0.7" opacity="0.42"/><path d="M3.4 9.0 h10.1" stroke="#605d55" stroke-width="1.0" opacity="0.64"/><rect x="4.4" y="10.2" width="7.1" height="1.5" fill="#aeaca4" opacity="0.55"/><path d="M13.8 9.1 h9.8" stroke="#605d55" stroke-width="0.7" opacity="0.69"/><path d="M13.8 9.3 v2.5" stroke="#605d55" stroke-width="0.7" opacity="0.58"/><rect x="14.8" y="10.2" width="6.8" height="1.5" fill="#aeaca4" opacity="0.55"/><rect x="24.9" y="10.2" width="6.0" height="1.5" fill="#aeaca4" opacity="0.55"/><path d="M34.3 9.3 v2.9" stroke="#605d55" stroke-width="0.7" opacity="0.78"/><rect x="35.3" y="10.2" width="3.7" height="1.5" fill="#aeaca4" opacity="0.55"/><path d="M42.0 9.0 h7.7" stroke="#605d55" stroke-width="1.0" opacity="0.54"/><path d="M42.0 9.3 v2.1" stroke="#605d55" stroke-width="0.7" opacity="0.50"/><path d="M49.7 9.1 h4.7" stroke="#605d55" stroke-width="0.6" opacity="0.69"/><rect x="50.7" y="10.2" width="1.7" height="1.5" fill="#aeaca4" opacity="0.55"/><rect x="56.8" y="10.2" width="1.7" height="1.5" fill="#aeaca4" opacity="0.55"/><path d="M2.0 12.1 h7.5" stroke="#605d55" stroke-width="0.8" opacity="0.50"/><path d="M9.8 12.1 h8.0" stroke="#605d55" stroke-width="0.9" opacity="0.83"/><path d="M9.8 12.3 v2.4" stroke="#605d55" stroke-width="0.7" opacity="0.74"/><rect x="10.8" y="13.2" width="5.0" height="1.5" fill="#aeaca4" opacity="0.55"/><path d="M18.6 12.3 v2.2" stroke="#605d55" stroke-width="0.7" opacity="0.53"/><rect x="19.6" y="13.2" width="7.6" height="1.5" fill="#aeaca4" opacity="0.55"/><rect x="41.9" y="13.2" width="4.6" height="1.5" fill="#aeaca4" opacity="0.55"/><path d="M49.3 12.3 h8.4" stroke="#605d55" stroke-width="0.6" opacity="0.62"/><path d="M49.3 12.3 v2.0" stroke="#605d55" stroke-width="0.7" opacity="0.46"/><path d="M59.3 12.5 h0.7" stroke="#605d55" stroke-width="1.0" opacity="0.80"/><path d="M59.3 12.3 v2.6" stroke="#605d55" stroke-width="0.7" opacity="0.51"/><path d="M2.2 15.2 h10.5" stroke="#605d55" stroke-width="0.8" opacity="0.62"/><rect x="3.2" y="16.2" width="7.5" height="1.5" fill="#aeaca4" opacity="0.55"/><path d="M13.3 15.4 h8.5" stroke="#605d55" stroke-width="1.0" opacity="0.66"/><path d="M13.3 15.3 v2.5" stroke="#605d55" stroke-width="0.7" opacity="0.61"/><rect x="14.3" y="16.2" width="5.5" height="1.5" fill="#aeaca4" opacity="0.55"/><path d="M22.0 15.2 h4.9" stroke="#605d55" stroke-width="0.7" opacity="0.55"/><path d="M22.0 15.3 v2.5" stroke="#605d55" stroke-width="0.7" opacity="0.74"/><path d="M28.1 15.4 h8.6" stroke="#605d55" stroke-width="0.8" opacity="0.67"/><rect x="29.1" y="16.2" width="5.6" height="1.5" fill="#aeaca4" opacity="0.55"/><path d="M37.3 15.3 h5.7" stroke="#605d55" stroke-width="0.8" opacity="0.68"/><path d="M37.3 15.3 v2.4" stroke="#605d55" stroke-width="0.7" opacity="0.74"/><rect x="38.3" y="16.2" width="2.7" height="1.5" fill="#aeaca4" opacity="0.55"/><path d="M44.1 15.6 h7.4" stroke="#605d55" stroke-width="0.7" opacity="0.76"/><path d="M44.1 15.3 v2.1" stroke="#605d55" stroke-width="0.7" opacity="0.75"/><rect x="45.1" y="16.2" width="4.4" height="1.5" fill="#aeaca4" opacity="0.55"/><path d="M51.6 15.4 h6.7" stroke="#605d55" stroke-width="0.6" opacity="0.54"/><path d="M58.7 15.4 h1.3" stroke="#605d55" stroke-width="0.8" opacity="0.79"/><rect x="59.7" y="16.2" width="3.4" height="1.5" fill="#aeaca4" opacity="0.55"/><path d="M3.0 18.5 h9.3" stroke="#605d55" stroke-width="0.9" opacity="0.82"/><path d="M3.0 18.3 v2.9" stroke="#605d55" stroke-width="0.7" opacity="0.40"/><rect x="14.5" y="19.2" width="4.5" height="1.5" fill="#aeaca4" opacity="0.55"/><path d="M22.5 18.2 h10.1" stroke="#605d55" stroke-width="0.8" opacity="0.63"/><rect x="23.5" y="19.2" width="7.1" height="1.5" fill="#aeaca4" opacity="0.55"/><path d="M33.4 18.2 h7.9" stroke="#605d55" stroke-width="0.9" opacity="0.79"/><path d="M33.4 18.3 v2.4" stroke="#605d55" stroke-width="0.7" opacity="0.47"/><rect x="34.4" y="19.2" width="4.9" height="1.5" fill="#aeaca4" opacity="0.55"/><path d="M41.6 18.1 h8.0" stroke="#605d55" stroke-width="1.0" opacity="0.58"/><path d="M51.5 18.5 h5.4" stroke="#605d55" stroke-width="0.6" opacity="0.47"/><rect x="52.5" y="19.2" width="2.4" height="1.5" fill="#aeaca4" opacity="0.55"/><path d="M58.8 18.6 h1.2" stroke="#605d55" stroke-width="0.8" opacity="0.66"/><rect x="59.8" y="19.2" width="6.4" height="1.5" fill="#aeaca4" opacity="0.55"/><rect x="3.4" y="22.2" width="3.5" height="1.5" fill="#aeaca4" opacity="0.55"/><path d="M9.0 21.3 h6.6" stroke="#605d55" stroke-width="0.8" opacity="0.80"/><rect x="10.0" y="22.2" width="3.6" height="1.5" fill="#aeaca4" opacity="0.55"/><path d="M16.5 21.3 v2.5" stroke="#605d55" stroke-width="0.7" opacity="0.73"/><rect x="17.5" y="22.2" width="5.4" height="1.5" fill="#aeaca4" opacity="0.55"/><path d="M25.5 21.3 v2.1" stroke="#605d55" stroke-width="0.7" opacity="0.76"/><path d="M38.0 21.3 v2.2" stroke="#605d55" stroke-width="0.7" opacity="0.52"/><rect x="39.0" y="22.2" width="7.9" height="1.5" fill="#aeaca4" opacity="0.55"/><path d="M50.0 21.4 h5.3" stroke="#605d55" stroke-width="0.8" opacity="0.59"/><path d="M55.4 21.3 v2.7" stroke="#605d55" stroke-width="0.7" opacity="0.40"/><rect x="56.4" y="22.2" width="3.9" height="1.5" fill="#aeaca4" opacity="0.55"/><path d="M2.3 24.3 h8.7" stroke="#605d55" stroke-width="0.8" opacity="0.56"/><rect x="3.3" y="25.2" width="5.7" height="1.5" fill="#aeaca4" opacity="0.55"/><path d="M13.0 24.1 h8.0" stroke="#605d55" stroke-width="0.7" opacity="0.75"/><path d="M13.0 24.3 v2.1" stroke="#605d55" stroke-width="0.7" opacity="0.47"/><rect x="14.0" y="25.2" width="5.0" height="1.5" fill="#aeaca4" opacity="0.55"/><path d="M22.7 24.3 v2.0" stroke="#605d55" stroke-width="0.7" opacity="0.71"/><rect x="23.7" y="25.2" width="5.3" height="1.5" fill="#aeaca4" opacity="0.55"/><path d="M32.4 24.2 h6.5" stroke="#605d55" stroke-width="0.6" opacity="0.81"/><rect x="33.4" y="25.2" width="3.5" height="1.5" fill="#aeaca4" opacity="0.55"/><path d="M39.8 24.5 h6.7" stroke="#605d55" stroke-width="0.8" opacity="0.83"/><path d="M39.8 24.3 v2.6" stroke="#605d55" stroke-width="0.7" opacity="0.50"/><rect x="40.8" y="25.2" width="3.7" height="1.5" fill="#aeaca4" opacity="0.55"/><path d="M48.3 24.5 h10.0" stroke="#605d55" stroke-width="0.9" opacity="0.57"/><path d="M59.3 24.2 h0.7" stroke="#605d55" stroke-width="0.9" opacity="0.54"/><path d="M59.3 24.3 v2.9" stroke="#605d55" stroke-width="0.7" opacity="0.59"/></pattern>
<pattern id="sand" width="40" height="40" patternUnits="userSpaceOnUse"><rect width="40" height="40" fill="#a46e3b"/><rect x="6.8" y="14.0" width="0.8" height="1.3" fill="#b57e46" opacity="0.56"/><rect x="14.2" y="13.1" width="1.2" height="0.9" fill="#c08a52" opacity="0.78"/><rect x="16.5" y="35.6" width="1.0" height="0.9" fill="#8c5c2e" opacity="0.51"/><rect x="9.2" y="1.4" width="1.1" height="0.9" fill="#7c4f26" opacity="0.50"/><rect x="5.1" y="7.7" width="1.0" height="1.2" fill="#9a6836" opacity="0.58"/><rect x="32.6" y="31.4" width="0.8" height="0.9" fill="#8c5c2e" opacity="0.55"/><rect x="37.4" y="8.1" width="1.3" height="1.0" fill="#7c4f26" opacity="0.74"/><rect x="26.3" y="36.7" width="1.3" height="1.1" fill="#8c5c2e" opacity="0.64"/><rect x="14.4" y="9.6" width="1.1" height="0.8" fill="#c08a52" opacity="0.67"/><rect x="3.6" y="33.2" width="1.1" height="1.2" fill="#c08a52" opacity="0.66"/><rect x="22.1" y="12.1" width="0.9" height="0.8" fill="#7c4f26" opacity="0.71"/><rect x="9.0" y="7.3" width="1.2" height="0.7" fill="#b57e46" opacity="0.72"/><rect x="29.6" y="7.5" width="1.1" height="0.8" fill="#b57e46" opacity="0.45"/><rect x="28.0" y="11.0" width="0.9" height="1.2" fill="#7c4f26" opacity="0.77"/><rect x="6.9" y="14.3" width="1.2" height="1.1" fill="#8c5c2e" opacity="0.41"/><rect x="27.4" y="18.0" width="1.3" height="0.9" fill="#c08a52" opacity="0.47"/><rect x="4.5" y="35.6" width="1.1" height="1.1" fill="#c08a52" opacity="0.56"/><rect x="23.7" y="16.8" width="1.2" height="0.8" fill="#c08a52" opacity="0.62"/><rect x="24.5" y="36.7" width="1.0" height="0.8" fill="#8c5c2e" opacity="0.69"/><rect x="9.9" y="17.0" width="1.1" height="0.9" fill="#c08a52" opacity="0.44"/><rect x="29.8" y="25.6" width="1.2" height="1.2" fill="#9a6836" opacity="0.64"/><rect x="1.8" y="9.5" width="0.8" height="1.2" fill="#7c4f26" opacity="0.71"/><rect x="13.5" y="35.6" width="1.0" height="1.1" fill="#9a6836" opacity="0.73"/><rect x="11.0" y="3.5" width="1.3" height="1.0" fill="#b57e46" opacity="0.68"/><rect x="28.8" y="32.4" width="1.1" height="1.0" fill="#c08a52" opacity="0.67"/><rect x="8.0" y="26.3" width="1.2" height="1.2" fill="#8c5c2e" opacity="0.70"/><rect x="1.7" y="27.4" width="1.2" height="0.9" fill="#9a6836" opacity="0.47"/><rect x="30.5" y="9.2" width="0.9" height="1.3" fill="#7c4f26" opacity="0.54"/><rect x="16.1" y="7.9" width="0.9" height="0.8" fill="#8c5c2e" opacity="0.67"/><rect x="9.3" y="9.4" width="1.0" height="1.0" fill="#b57e46" opacity="0.68"/><rect x="5.2" y="27.6" width="1.1" height="0.8" fill="#c08a52" opacity="0.62"/><rect x="29.7" y="6.6" width="1.1" height="1.1" fill="#8c5c2e" opacity="0.74"/><rect x="15.8" y="8.0" width="1.1" height="0.7" fill="#8c5c2e" opacity="0.48"/><rect x="2.4" y="11.0" width="0.8" height="1.1" fill="#8c5c2e" opacity="0.79"/><rect x="6.3" y="17.4" width="1.0" height="0.9" fill="#9a6836" opacity="0.43"/><rect x="0.4" y="38.7" width="1.2" height="0.8" fill="#b57e46" opacity="0.79"/><rect x="22.0" y="4.2" width="1.0" height="1.0" fill="#7c4f26" opacity="0.71"/><rect x="12.6" y="14.0" width="0.8" height="0.9" fill="#9a6836" opacity="0.77"/><rect x="25.5" y="9.8" width="0.8" height="0.8" fill="#c08a52" opacity="0.41"/><rect x="15.4" y="5.7" width="0.9" height="1.3" fill="#9a6836" opacity="0.74"/><rect x="36.1" y="6.6" width="1.2" height="1.2" fill="#9a6836" opacity="0.53"/><rect x="7.2" y="32.2" width="0.9" height="0.9" fill="#9a6836" opacity="0.77"/><rect x="32.7" y="9.9" width="0.7" height="0.8" fill="#8c5c2e" opacity="0.76"/><rect x="36.9" y="19.3" width="1.0" height="0.8" fill="#b57e46" opacity="0.64"/><rect x="24.4" y="5.5" width="0.8" height="0.8" fill="#8c5c2e" opacity="0.44"/><rect x="1.6" y="17.1" width="0.8" height="1.1" fill="#c08a52" opacity="0.41"/><rect x="23.8" y="32.5" width="1.0" height="0.8" fill="#c08a52" opacity="0.66"/><rect x="20.1" y="16.4" width="0.9" height="1.0" fill="#7c4f26" opacity="0.76"/><rect x="6.4" y="11.5" width="1.0" height="1.0" fill="#b57e46" opacity="0.63"/><rect x="18.3" y="21.2" width="1.0" height="1.0" fill="#9a6836" opacity="0.76"/><rect x="33.8" y="38.0" width="1.3" height="1.1" fill="#c08a52" opacity="0.69"/><rect x="12.9" y="25.7" width="1.0" height="1.0" fill="#b57e46" opacity="0.59"/><rect x="25.2" y="11.7" width="0.9" height="1.2" fill="#c08a52" opacity="0.74"/><rect x="8.7" y="28.8" width="1.1" height="0.8" fill="#9a6836" opacity="0.55"/><rect x="22.6" y="16.2" width="1.0" height="1.0" fill="#8c5c2e" opacity="0.50"/><rect x="8.9" y="37.8" width="0.8" height="1.1" fill="#7c4f26" opacity="0.74"/><rect x="9.9" y="3.7" width="1.0" height="0.9" fill="#8c5c2e" opacity="0.49"/><rect x="17.9" y="21.1" width="1.1" height="1.1" fill="#9a6836" opacity="0.63"/><rect x="33.2" y="26.5" width="1.2" height="0.8" fill="#9a6836" opacity="0.62"/><rect x="27.9" y="29.5" width="0.8" height="1.3" fill="#9a6836" opacity="0.44"/><rect x="32.4" y="15.3" width="0.8" height="1.3" fill="#9a6836" opacity="0.59"/><rect x="3.6" y="14.6" width="1.1" height="0.9" fill="#c08a52" opacity="0.55"/><rect x="0.6" y="23.2" width="0.8" height="0.9" fill="#7c4f26" opacity="0.57"/><rect x="34.7" y="24.2" width="1.2" height="1.0" fill="#b57e46" opacity="0.47"/><rect x="29.1" y="13.3" width="1.2" height="1.1" fill="#b57e46" opacity="0.45"/><rect x="14.5" y="28.8" width="1.3" height="1.1" fill="#c08a52" opacity="0.73"/><rect x="13.8" y="13.9" width="0.9" height="1.1" fill="#c08a52" opacity="0.77"/><rect x="26.3" y="9.9" width="0.8" height="1.0" fill="#9a6836" opacity="0.58"/><rect x="30.9" y="19.0" width="0.7" height="0.9" fill="#7c4f26" opacity="0.62"/><rect x="11.3" y="26.8" width="0.9" height="0.8" fill="#b57e46" opacity="0.62"/><rect x="26.9" y="31.5" width="1.3" height="0.7" fill="#b57e46" opacity="0.80"/><rect x="19.0" y="18.9" width="0.7" height="1.2" fill="#c08a52" opacity="0.47"/><rect x="31.9" y="26.5" width="0.9" height="1.0" fill="#7c4f26" opacity="0.68"/><rect x="17.5" y="8.9" width="1.3" height="1.0" fill="#b57e46" opacity="0.53"/><rect x="8.4" y="34.9" width="1.1" height="0.7" fill="#7c4f26" opacity="0.73"/><rect x="28.4" y="12.9" width="1.0" height="1.3" fill="#b57e46" opacity="0.40"/><rect x="22.6" y="13.0" width="0.7" height="1.0" fill="#9a6836" opacity="0.42"/><rect x="5.7" y="26.2" width="0.9" height="0.9" fill="#9a6836" opacity="0.80"/><rect x="13.9" y="22.4" width="1.1" height="0.8" fill="#c08a52" opacity="0.77"/><rect x="35.2" y="3.7" width="0.8" height="1.0" fill="#9a6836" opacity="0.65"/><rect x="14.2" y="11.0" width="1.2" height="1.2" fill="#7c4f26" opacity="0.67"/><rect x="11.9" y="29.8" width="1.1" height="1.0" fill="#7c4f26" opacity="0.54"/><rect x="21.5" y="15.8" width="0.7" height="0.9" fill="#b57e46" opacity="0.75"/><rect x="30.5" y="19.6" width="1.2" height="1.2" fill="#b57e46" opacity="0.46"/><rect x="8.0" y="34.7" width="1.1" height="0.9" fill="#8c5c2e" opacity="0.63"/><rect x="11.8" y="6.6" width="0.7" height="0.9" fill="#b57e46" opacity="0.50"/><rect x="22.3" y="25.7" width="1.3" height="0.7" fill="#7c4f26" opacity="0.63"/><rect x="3.1" y="7.0" width="1.0" height="1.3" fill="#b57e46" opacity="0.79"/><rect x="26.9" y="28.1" width="1.3" height="1.2" fill="#b57e46" opacity="0.76"/><rect x="10.8" y="10.0" width="0.7" height="0.8" fill="#b57e46" opacity="0.49"/><rect x="0.8" y="1.9" width="1.0" height="1.2" fill="#b57e46" opacity="0.75"/><rect x="25.3" y="7.7" width="1.1" height="1.3" fill="#9a6836" opacity="0.42"/><rect x="2.9" y="31.8" width="1.0" height="1.1" fill="#c08a52" opacity="0.48"/><rect x="20.9" y="34.1" width="1.1" height="1.3" fill="#7c4f26" opacity="0.53"/><rect x="33.8" y="1.1" width="1.0" height="1.1" fill="#b57e46" opacity="0.47"/><rect x="33.7" y="31.1" width="0.8" height="1.1" fill="#8c5c2e" opacity="0.80"/><rect x="15.6" y="36.7" width="1.2" height="0.7" fill="#b57e46" opacity="0.63"/><rect x="38.5" y="2.2" width="1.1" height="1.1" fill="#b57e46" opacity="0.46"/><rect x="0.7" y="8.2" width="1.0" height="1.2" fill="#b57e46" opacity="0.73"/><rect x="16.5" y="21.0" width="1.1" height="1.0" fill="#9a6836" opacity="0.63"/><rect x="9.0" y="24.1" width="1.2" height="1.0" fill="#c08a52" opacity="0.71"/><rect x="12.1" y="30.1" width="1.3" height="1.0" fill="#b57e46" opacity="0.54"/><rect x="20.7" y="10.7" width="0.9" height="1.0" fill="#c08a52" opacity="0.66"/><rect x="30.2" y="14.1" width="1.3" height="0.8" fill="#c08a52" opacity="0.77"/><rect x="24.4" y="4.8" width="1.0" height="0.8" fill="#7c4f26" opacity="0.50"/><rect x="23.6" y="28.8" width="1.2" height="1.2" fill="#7c4f26" opacity="0.61"/><rect x="13.7" y="27.7" width="1.0" height="1.2" fill="#7c4f26" opacity="0.65"/><rect x="13.4" y="31.2" width="1.0" height="0.9" fill="#c08a52" opacity="0.44"/><rect x="28.6" y="2.6" width="1.1" height="0.9" fill="#b57e46" opacity="0.42"/><rect x="22.0" y="16.0" width="1.3" height="1.3" fill="#7c4f26" opacity="0.41"/><rect x="0.8" y="27.7" width="0.8" height="0.9" fill="#b57e46" opacity="0.70"/><rect x="25.1" y="11.6" width="1.3" height="0.8" fill="#9a6836" opacity="0.72"/><rect x="18.6" y="36.4" width="1.2" height="1.3" fill="#7c4f26" opacity="0.73"/><rect x="11.0" y="12.9" width="1.0" height="1.2" fill="#7c4f26" opacity="0.53"/><rect x="23.8" y="37.3" width="0.8" height="0.7" fill="#7c4f26" opacity="0.74"/><rect x="28.7" y="1.8" width="1.2" height="1.0" fill="#8c5c2e" opacity="0.75"/><rect x="38.8" y="11.6" width="0.7" height="0.8" fill="#c08a52" opacity="0.45"/><rect x="11.8" y="19.6" width="0.9" height="1.2" fill="#8c5c2e" opacity="0.67"/><rect x="3.5" y="13.2" width="1.3" height="1.1" fill="#b57e46" opacity="0.79"/><rect x="1.3" y="9.1" width="1.2" height="1.1" fill="#c08a52" opacity="0.45"/><rect x="23.2" y="22.4" width="1.1" height="1.1" fill="#c08a52" opacity="0.80"/><rect x="12.3" y="34.3" width="0.8" height="1.0" fill="#7c4f26" opacity="0.61"/><rect x="0.1" y="8.7" width="1.0" height="1.1" fill="#9a6836" opacity="0.60"/><rect x="4.4" y="13.8" width="1.0" height="1.3" fill="#b57e46" opacity="0.79"/><rect x="33.3" y="37.9" width="0.8" height="0.7" fill="#7c4f26" opacity="0.41"/><rect x="10.5" y="37.7" width="0.8" height="0.7" fill="#9a6836" opacity="0.78"/><rect x="10.4" y="12.7" width="0.7" height="1.0" fill="#b57e46" opacity="0.62"/><rect x="26.9" y="38.3" width="1.2" height="1.1" fill="#8c5c2e" opacity="0.57"/><rect x="21.1" y="14.9" width="0.8" height="1.2" fill="#8c5c2e" opacity="0.72"/><rect x="35.0" y="24.8" width="0.8" height="1.0" fill="#b57e46" opacity="0.68"/><rect x="28.5" y="38.6" width="1.2" height="1.1" fill="#c08a52" opacity="0.74"/><rect x="30.6" y="35.4" width="0.7" height="1.1" fill="#b57e46" opacity="0.67"/><rect x="17.3" y="26.1" width="1.0" height="1.0" fill="#8c5c2e" opacity="0.70"/><rect x="33.3" y="19.9" width="1.1" height="1.3" fill="#7c4f26" opacity="0.73"/><rect x="30.9" y="33.9" width="0.9" height="0.7" fill="#9a6836" opacity="0.51"/><rect x="25.7" y="32.2" width="0.7" height="1.2" fill="#7c4f26" opacity="0.77"/><rect x="29.9" y="10.2" width="1.2" height="1.2" fill="#b57e46" opacity="0.61"/><rect x="18.6" y="8.6" width="0.8" height="1.3" fill="#9a6836" opacity="0.55"/><rect x="8.0" y="6.6" width="0.9" height="1.1" fill="#7c4f26" opacity="0.73"/><rect x="18.0" y="25.0" width="1.2" height="1.2" fill="#c08a52" opacity="0.53"/><rect x="14.1" y="33.7" width="1.0" height="0.9" fill="#b57e46" opacity="0.55"/><rect x="14.2" y="25.9" width="1.0" height="0.9" fill="#c08a52" opacity="0.51"/><rect x="11.3" y="17.4" width="0.8" height="1.1" fill="#7c4f26" opacity="0.70"/><rect x="5.8" y="26.5" width="0.9" height="1.0" fill="#7c4f26" opacity="0.65"/><rect x="20.4" y="31.3" width="0.9" height="1.0" fill="#c08a52" opacity="0.63"/><rect x="2.3" y="7.0" width="1.1" height="0.9" fill="#b57e46" opacity="0.50"/><rect x="10.4" y="17.1" width="1.0" height="1.0" fill="#c08a52" opacity="0.48"/><rect x="16.5" y="30.9" width="1.1" height="0.9" fill="#c08a52" opacity="0.69"/><rect x="14.7" y="1.6" width="1.2" height="1.3" fill="#8c5c2e" opacity="0.66"/><rect x="31.6" y="13.7" width="0.9" height="1.0" fill="#9a6836" opacity="0.48"/><rect x="37.9" y="27.8" width="0.9" height="1.1" fill="#b57e46" opacity="0.74"/><rect x="3.1" y="17.4" width="0.9" height="0.9" fill="#c08a52" opacity="0.44"/><rect x="22.0" y="36.5" width="1.1" height="1.0" fill="#8c5c2e" opacity="0.47"/><rect x="2.5" y="15.5" width="0.8" height="1.2" fill="#c08a52" opacity="0.67"/><rect x="28.9" y="15.7" width="0.7" height="1.1" fill="#9a6836" opacity="0.53"/><rect x="15.1" y="17.9" width="0.8" height="1.2" fill="#9a6836" opacity="0.73"/><rect x="4.0" y="3.4" width="1.2" height="1.0" fill="#c08a52" opacity="0.73"/><rect x="7.8" y="13.1" width="1.2" height="1.0" fill="#8c5c2e" opacity="0.74"/><rect x="5.5" y="15.9" width="0.7" height="1.1" fill="#b57e46" opacity="0.53"/><rect x="20.2" y="0.2" width="1.3" height="0.9" fill="#b57e46" opacity="0.43"/><rect x="15.0" y="25.9" width="0.9" height="0.9" fill="#8c5c2e" opacity="0.67"/><rect x="12.0" y="9.7" width="0.9" height="1.0" fill="#9a6836" opacity="0.50"/><rect x="7.9" y="2.0" width="1.0" height="0.9" fill="#8c5c2e" opacity="0.66"/><rect x="27.7" y="5.5" width="1.3" height="0.9" fill="#8c5c2e" opacity="0.77"/><rect x="21.7" y="2.0" width="0.9" height="1.0" fill="#8c5c2e" opacity="0.78"/><rect x="32.1" y="1.4" width="0.8" height="1.0" fill="#7c4f26" opacity="0.68"/><rect x="31.3" y="23.1" width="1.0" height="1.3" fill="#8c5c2e" opacity="0.48"/><rect x="7.9" y="7.0" width="1.2" height="0.8" fill="#7c4f26" opacity="0.75"/><rect x="2.8" y="23.3" width="0.8" height="1.3" fill="#9a6836" opacity="0.69"/><rect x="6.4" y="8.6" width="1.1" height="1.1" fill="#7c4f26" opacity="0.61"/><rect x="6.2" y="30.3" width="1.1" height="1.0" fill="#8c5c2e" opacity="0.44"/><rect x="30.6" y="37.1" width="0.9" height="1.1" fill="#b57e46" opacity="0.68"/><rect x="17.3" y="16.6" width="1.2" height="1.3" fill="#7c4f26" opacity="0.42"/><rect x="32.6" y="11.5" width="0.8" height="1.0" fill="#b57e46" opacity="0.68"/><rect x="28.1" y="12.1" width="0.9" height="1.0" fill="#7c4f26" opacity="0.46"/><rect x="31.2" y="38.2" width="0.9" height="0.7" fill="#8c5c2e" opacity="0.46"/><rect x="11.4" y="25.5" width="1.1" height="0.8" fill="#7c4f26" opacity="0.69"/><rect x="16.8" y="26.5" width="0.8" height="1.2" fill="#c08a52" opacity="0.66"/><rect x="8.2" y="25.6" width="1.0" height="0.7" fill="#8c5c2e" opacity="0.54"/><rect x="29.3" y="19.4" width="1.3" height="0.8" fill="#8c5c2e" opacity="0.51"/><rect x="11.8" y="22.8" width="1.2" height="0.8" fill="#8c5c2e" opacity="0.51"/><rect x="34.8" y="33.0" width="0.8" height="1.3" fill="#c08a52" opacity="0.63"/><rect x="3.9" y="0.1" width="0.8" height="0.8" fill="#b57e46" opacity="0.42"/><rect x="13.0" y="17.5" width="0.8" height="1.1" fill="#7c4f26" opacity="0.44"/><rect x="32.4" y="31.6" width="1.1" height="1.0" fill="#9a6836" opacity="0.45"/><rect x="6.3" y="15.3" width="0.7" height="0.7" fill="#9a6836" opacity="0.44"/><rect x="25.2" y="5.1" width="1.0" height="0.9" fill="#b57e46" opacity="0.69"/><rect x="28.6" y="14.0" width="1.1" height="0.8" fill="#c08a52" opacity="0.74"/><rect x="34.1" y="18.7" width="0.8" height="0.8" fill="#7c4f26" opacity="0.45"/><rect x="19.3" y="20.9" width="0.8" height="1.0" fill="#7c4f26" opacity="0.63"/><rect x="1.6" y="10.0" width="1.3" height="0.9" fill="#9a6836" opacity="0.48"/><rect x="5.0" y="9.4" width="1.2" height="1.0" fill="#c08a52" opacity="0.41"/><rect x="36.8" y="19.0" width="1.2" height="1.0" fill="#7c4f26" opacity="0.43"/><rect x="6.7" y="32.8" width="1.3" height="1.0" fill="#9a6836" opacity="0.61"/><rect x="11.4" y="34.7" width="0.8" height="1.0" fill="#7c4f26" opacity="0.50"/><rect x="30.2" y="20.0" width="1.2" height="1.2" fill="#c08a52" opacity="0.64"/><rect x="38.3" y="1.6" width="1.1" height="1.1" fill="#b57e46" opacity="0.54"/><rect x="31.6" y="18.0" width="1.3" height="0.7" fill="#8c5c2e" opacity="0.71"/><rect x="1.3" y="30.8" width="0.8" height="1.0" fill="#7c4f26" opacity="0.46"/><rect x="13.4" y="5.5" width="0.8" height="0.8" fill="#b57e46" opacity="0.68"/><rect x="2.6" y="0.1" width="1.2" height="0.7" fill="#9a6836" opacity="0.71"/><rect x="35.4" y="29.3" width="1.1" height="0.8" fill="#c08a52" opacity="0.74"/><rect x="30.7" y="3.6" width="1.1" height="0.9" fill="#7c4f26" opacity="0.72"/><rect x="19.2" y="30.1" width="1.0" height="0.9" fill="#b57e46" opacity="0.76"/><rect x="29.1" y="32.5" width="1.2" height="1.1" fill="#8c5c2e" opacity="0.55"/><rect x="25.0" y="36.6" width="1.0" height="1.1" fill="#9a6836" opacity="0.61"/><rect x="36.9" y="4.5" width="1.3" height="1.2" fill="#b57e46" opacity="0.70"/><rect x="33.1" y="9.4" width="1.1" height="1.0" fill="#8c5c2e" opacity="0.63"/><rect x="36.4" y="34.7" width="0.7" height="1.1" fill="#8c5c2e" opacity="0.72"/><rect x="26.6" y="36.7" width="1.2" height="0.9" fill="#c08a52" opacity="0.49"/><rect x="26.2" y="30.9" width="1.1" height="1.2" fill="#8c5c2e" opacity="0.72"/><rect x="0.2" y="19.1" width="0.7" height="0.8" fill="#8c5c2e" opacity="0.57"/><rect x="23.6" y="17.8" width="0.9" height="0.8" fill="#b57e46" opacity="0.56"/><rect x="18.2" y="1.3" width="0.9" height="1.3" fill="#7c4f26" opacity="0.68"/><rect x="17.2" y="25.8" width="1.2" height="0.8" fill="#c08a52" opacity="0.55"/><rect x="35.0" y="15.2" width="0.9" height="0.8" fill="#7c4f26" opacity="0.49"/><rect x="34.7" y="23.8" width="1.2" height="0.9" fill="#8c5c2e" opacity="0.53"/><rect x="34.2" y="30.8" width="1.1" height="1.2" fill="#7c4f26" opacity="0.56"/><rect x="0.4" y="33.3" width="0.8" height="0.8" fill="#9a6836" opacity="0.72"/><rect x="9.8" y="13.7" width="0.8" height="1.0" fill="#9a6836" opacity="0.67"/><rect x="5.3" y="29.4" width="0.9" height="0.9" fill="#9a6836" opacity="0.65"/><rect x="17.3" y="37.4" width="0.9" height="1.1" fill="#8c5c2e" opacity="0.78"/><rect x="31.5" y="2.3" width="1.1" height="1.0" fill="#c08a52" opacity="0.42"/><rect x="32.6" y="26.7" width="1.0" height="1.0" fill="#9a6836" opacity="0.76"/><rect x="28.4" y="29.2" width="0.7" height="0.9" fill="#7c4f26" opacity="0.40"/><rect x="36.5" y="10.6" width="0.8" height="1.3" fill="#9a6836" opacity="0.42"/><rect x="15.3" y="29.1" width="1.1" height="0.9" fill="#7c4f26" opacity="0.52"/><rect x="21.2" y="16.4" width="1.3" height="1.1" fill="#8c5c2e" opacity="0.60"/><rect x="38.0" y="14.0" width="1.2" height="0.9" fill="#9a6836" opacity="0.60"/><rect x="1.9" y="20.8" width="1.2" height="0.8" fill="#c08a52" opacity="0.46"/><rect x="28.8" y="6.7" width="0.9" height="0.7" fill="#b57e46" opacity="0.79"/><rect x="30.3" y="14.0" width="1.1" height="0.9" fill="#8c5c2e" opacity="0.48"/><rect x="12.5" y="17.1" width="0.8" height="0.9" fill="#8c5c2e" opacity="0.53"/><rect x="30.9" y="18.4" width="0.8" height="1.3" fill="#9a6836" opacity="0.58"/><rect x="32.6" y="24.8" width="1.2" height="0.9" fill="#7c4f26" opacity="0.51"/><rect x="20.9" y="25.8" width="1.2" height="0.9" fill="#c08a52" opacity="0.51"/><rect x="14.1" y="35.8" width="1.0" height="0.9" fill="#c08a52" opacity="0.50"/><rect x="30.1" y="1.6" width="1.2" height="1.0" fill="#b57e46" opacity="0.64"/><rect x="14.0" y="38.2" width="1.2" height="1.2" fill="#c08a52" opacity="0.70"/><rect x="26.4" y="16.1" width="1.2" height="0.8" fill="#b57e46" opacity="0.47"/><rect x="6.9" y="28.2" width="1.1" height="0.8" fill="#8c5c2e" opacity="0.56"/><rect x="36.7" y="29.0" width="0.9" height="0.9" fill="#b57e46" opacity="0.54"/><rect x="7.2" y="34.0" width="1.0" height="1.0" fill="#b57e46" opacity="0.45"/><rect x="13.2" y="2.6" width="0.9" height="1.0" fill="#9a6836" opacity="0.67"/><rect x="22.5" y="15.7" width="1.0" height="0.9" fill="#7c4f26" opacity="0.46"/><rect x="26.2" y="29.4" width="1.0" height="1.2" fill="#c08a52" opacity="0.70"/><rect x="32.0" y="25.3" width="1.2" height="0.8" fill="#8c5c2e" opacity="0.64"/><rect x="10.7" y="2.6" width="1.1" height="1.2" fill="#b57e46" opacity="0.64"/><rect x="35.3" y="12.1" width="0.9" height="1.0" fill="#c08a52" opacity="0.54"/><rect x="27.3" y="2.8" width="1.2" height="0.9" fill="#c08a52" opacity="0.58"/><rect x="29.8" y="17.4" width="1.0" height="1.3" fill="#9a6836" opacity="0.62"/><rect x="31.5" y="1.5" width="1.2" height="0.8" fill="#7c4f26" opacity="0.52"/><rect x="36.5" y="37.6" width="1.0" height="0.8" fill="#9a6836" opacity="0.72"/><rect x="8.2" y="32.7" width="1.2" height="1.0" fill="#c08a52" opacity="0.49"/><rect x="6.7" y="31.6" width="0.9" height="0.9" fill="#b57e46" opacity="0.69"/><rect x="22.8" y="15.6" width="1.0" height="1.1" fill="#7c4f26" opacity="0.67"/><rect x="34.4" y="2.1" width="0.9" height="1.0" fill="#b57e46" opacity="0.43"/><rect x="18.6" y="5.2" width="1.0" height="1.1" fill="#9a6836" opacity="0.58"/><rect x="13.3" y="7.4" width="0.9" height="0.9" fill="#7c4f26" opacity="0.43"/><rect x="35.0" y="0.6" width="1.2" height="1.2" fill="#7c4f26" opacity="0.71"/><rect x="7.8" y="29.5" width="1.2" height="0.9" fill="#c08a52" opacity="0.77"/><rect x="28.2" y="28.1" width="0.7" height="0.8" fill="#c08a52" opacity="0.73"/><rect x="25.0" y="29.1" width="1.0" height="1.0" fill="#7c4f26" opacity="0.63"/><rect x="12.3" y="13.8" width="0.8" height="1.1" fill="#b57e46" opacity="0.57"/><rect x="1.1" y="27.8" width="1.2" height="0.9" fill="#7c4f26" opacity="0.55"/><rect x="34.5" y="19.0" width="0.7" height="0.9" fill="#b57e46" opacity="0.59"/><rect x="32.1" y="5.0" width="0.8" height="1.0" fill="#9a6836" opacity="0.56"/><rect x="13.8" y="25.6" width="1.3" height="0.8" fill="#b57e46" opacity="0.78"/><rect x="38.2" y="17.0" width="1.1" height="0.9" fill="#8c5c2e" opacity="0.45"/><rect x="0.5" y="8.3" width="1.1" height="0.9" fill="#c08a52" opacity="0.73"/><rect x="38.0" y="3.4" width="1.2" height="0.8" fill="#9a6836" opacity="0.61"/><rect x="2.8" y="12.6" width="1.1" height="1.2" fill="#8c5c2e" opacity="0.71"/><rect x="35.3" y="0.3" width="0.8" height="0.9" fill="#c08a52" opacity="0.44"/><rect x="34.2" y="36.8" width="1.0" height="1.0" fill="#8c5c2e" opacity="0.70"/><rect x="22.2" y="28.0" width="1.2" height="0.8" fill="#7c4f26" opacity="0.69"/><rect x="18.3" y="34.3" width="1.1" height="0.8" fill="#8c5c2e" opacity="0.64"/><rect x="2.4" y="9.3" width="1.3" height="0.8" fill="#8c5c2e" opacity="0.63"/><rect x="29.1" y="8.7" width="1.1" height="1.1" fill="#7c4f26" opacity="0.44"/><rect x="38.1" y="31.3" width="0.7" height="0.7" fill="#7c4f26" opacity="0.78"/><rect x="37.4" y="30.2" width="0.7" height="1.0" fill="#9a6836" opacity="0.77"/><rect x="10.3" y="6.0" width="0.7" height="1.2" fill="#c08a52" opacity="0.70"/><rect x="34.4" y="3.8" width="0.8" height="1.0" fill="#9a6836" opacity="0.60"/><rect x="4.1" y="30.7" width="1.2" height="1.2" fill="#c08a52" opacity="0.43"/><rect x="1.2" y="25.3" width="0.8" height="1.0" fill="#9a6836" opacity="0.64"/><rect x="31.2" y="3.0" width="0.7" height="1.0" fill="#b57e46" opacity="0.58"/><rect x="26.2" y="21.8" width="0.8" height="0.8" fill="#9a6836" opacity="0.72"/><rect x="17.9" y="4.8" width="1.1" height="0.8" fill="#8c5c2e" opacity="0.79"/><rect x="23.9" y="3.4" width="1.0" height="1.1" fill="#c08a52" opacity="0.69"/><rect x="33.1" y="33.1" width="0.8" height="0.9" fill="#b57e46" opacity="0.52"/><rect x="11.5" y="19.3" width="1.0" height="0.9" fill="#7c4f26" opacity="0.40"/><rect x="2.9" y="4.4" width="1.1" height="1.1" fill="#9a6836" opacity="0.55"/><rect x="38.4" y="36.0" width="1.0" height="0.8" fill="#c08a52" opacity="0.77"/><rect x="32.7" y="28.0" width="0.7" height="1.1" fill="#8c5c2e" opacity="0.72"/><rect x="2.1" y="24.1" width="0.9" height="0.9" fill="#7c4f26" opacity="0.50"/><rect x="11.7" y="13.6" width="0.9" height="0.8" fill="#8c5c2e" opacity="0.47"/><rect x="36.9" y="25.6" width="1.0" height="1.1" fill="#b57e46" opacity="0.51"/><rect x="9.7" y="16.1" width="0.7" height="0.8" fill="#b57e46" opacity="0.77"/><rect x="12.8" y="30.0" width="1.2" height="1.2" fill="#c08a52" opacity="0.61"/><rect x="4.1" y="32.2" width="0.9" height="1.1" fill="#b57e46" opacity="0.43"/><rect x="4.8" y="17.9" width="0.8" height="0.7" fill="#9a6836" opacity="0.50"/><rect x="35.8" y="36.3" width="1.0" height="1.2" fill="#c08a52" opacity="0.66"/><rect x="8.5" y="29.4" width="1.2" height="1.1" fill="#8c5c2e" opacity="0.69"/><rect x="38.6" y="6.9" width="1.0" height="1.1" fill="#b57e46" opacity="0.70"/><rect x="9.7" y="10.0" width="0.7" height="1.1" fill="#7c4f26" opacity="0.66"/><rect x="24.1" y="25.6" width="1.1" height="0.8" fill="#c08a52" opacity="0.64"/><rect x="27.1" y="11.9" width="0.7" height="0.7" fill="#c08a52" opacity="0.43"/><rect x="2.9" y="21.7" width="1.1" height="1.1" fill="#9a6836" opacity="0.68"/><rect x="10.7" y="30.0" width="0.8" height="0.8" fill="#b57e46" opacity="0.56"/><rect x="27.2" y="6.8" width="1.3" height="1.2" fill="#8c5c2e" opacity="0.54"/><rect x="32.5" y="1.2" width="1.2" height="0.8" fill="#7c4f26" opacity="0.72"/><rect x="26.2" y="10.8" width="0.7" height="0.8" fill="#c08a52" opacity="0.46"/><rect x="25.7" y="22.9" width="1.1" height="0.8" fill="#7c4f26" opacity="0.59"/><rect x="32.6" y="2.2" width="0.9" height="0.8" fill="#9a6836" opacity="0.49"/><rect x="2.5" y="0.6" width="1.2" height="0.8" fill="#b57e46" opacity="0.55"/><rect x="28.2" y="5.4" width="1.2" height="0.9" fill="#b57e46" opacity="0.47"/><rect x="25.9" y="34.0" width="1.2" height="0.8" fill="#8c5c2e" opacity="0.77"/><rect x="1.2" y="25.3" width="1.2" height="1.2" fill="#b57e46" opacity="0.50"/><rect x="34.8" y="10.3" width="0.7" height="0.8" fill="#8c5c2e" opacity="0.73"/><rect x="9.2" y="1.1" width="1.0" height="0.8" fill="#8c5c2e" opacity="0.62"/><rect x="19.2" y="15.8" width="1.0" height="1.3" fill="#7c4f26" opacity="0.57"/><rect x="2.4" y="7.4" width="0.9" height="1.0" fill="#7c4f26" opacity="0.77"/><rect x="21.6" y="2.8" width="0.8" height="1.1" fill="#9a6836" opacity="0.64"/><rect x="39.0" y="36.2" width="0.9" height="0.7" fill="#8c5c2e" opacity="0.61"/><rect x="9.3" y="6.7" width="1.2" height="0.8" fill="#c08a52" opacity="0.59"/><rect x="18.3" y="36.9" width="1.2" height="0.8" fill="#8c5c2e" opacity="0.65"/><rect x="3.8" y="10.9" width="1.2" height="0.7" fill="#8c5c2e" opacity="0.59"/><rect x="7.0" y="0.4" width="1.1" height="1.0" fill="#c08a52" opacity="0.66"/><rect x="26.8" y="1.3" width="1.1" height="1.2" fill="#9a6836" opacity="0.46"/><rect x="14.2" y="15.1" width="1.2" height="0.9" fill="#c08a52" opacity="0.74"/><rect x="14.3" y="35.2" width="0.8" height="0.8" fill="#9a6836" opacity="0.58"/><rect x="28.2" y="17.5" width="1.2" height="0.9" fill="#7c4f26" opacity="0.74"/><rect x="11.9" y="12.2" width="0.8" height="0.7" fill="#c08a52" opacity="0.67"/><rect x="0.5" y="37.0" width="0.8" height="1.0" fill="#9a6836" opacity="0.74"/><rect x="29.0" y="26.2" width="0.8" height="1.2" fill="#7c4f26" opacity="0.73"/><rect x="7.9" y="39.0" width="1.0" height="0.8" fill="#b57e46" opacity="0.41"/><rect x="6.9" y="16.1" width="1.1" height="1.0" fill="#7c4f26" opacity="0.50"/><rect x="32.6" y="6.0" width="1.2" height="1.1" fill="#8c5c2e" opacity="0.62"/><rect x="27.8" y="5.4" width="0.8" height="0.8" fill="#8c5c2e" opacity="0.46"/><rect x="5.3" y="20.4" width="1.0" height="1.2" fill="#c08a52" opacity="0.47"/><rect x="16.5" y="3.1" width="1.2" height="1.2" fill="#b57e46" opacity="0.76"/><rect x="25.8" y="33.5" width="1.3" height="0.9" fill="#8c5c2e" opacity="0.44"/><rect x="17.0" y="32.0" width="1.3" height="1.2" fill="#c08a52" opacity="0.52"/><rect x="37.7" y="33.9" width="1.0" height="1.0" fill="#b57e46" opacity="0.72"/><rect x="25.5" y="20.0" width="0.8" height="0.8" fill="#9a6836" opacity="0.63"/><rect x="31.2" y="35.1" width="1.3" height="0.8" fill="#c08a52" opacity="0.64"/><rect x="9.9" y="14.9" width="1.2" height="1.3" fill="#7c4f26" opacity="0.56"/><rect x="37.3" y="10.0" width="1.2" height="1.1" fill="#c08a52" opacity="0.65"/><rect x="18.4" y="26.2" width="1.2" height="0.7" fill="#8c5c2e" opacity="0.54"/><rect x="29.7" y="37.3" width="1.2" height="1.0" fill="#b57e46" opacity="0.71"/><rect x="9.1" y="16.8" width="1.3" height="0.8" fill="#8c5c2e" opacity="0.56"/><rect x="5.2" y="29.1" width="0.9" height="1.1" fill="#8c5c2e" opacity="0.67"/><rect x="29.9" y="5.0" width="0.8" height="0.8" fill="#b57e46" opacity="0.45"/><rect x="19.9" y="34.5" width="1.1" height="1.1" fill="#8c5c2e" opacity="0.63"/><rect x="36.8" y="22.5" width="0.9" height="1.1" fill="#8c5c2e" opacity="0.53"/><rect x="31.6" y="27.0" width="1.1" height="1.2" fill="#8c5c2e" opacity="0.55"/><rect x="37.5" y="29.9" width="1.2" height="1.1" fill="#7c4f26" opacity="0.68"/><rect x="37.7" y="7.7" width="1.2" height="0.9" fill="#b57e46" opacity="0.47"/><rect x="2.5" y="17.7" width="1.1" height="1.2" fill="#c08a52" opacity="0.48"/><rect x="0.6" y="20.9" width="1.1" height="0.9" fill="#c08a52" opacity="0.72"/><rect x="32.6" y="3.3" width="0.8" height="0.8" fill="#7c4f26" opacity="0.51"/><rect x="27.7" y="38.5" width="0.7" height="0.8" fill="#c08a52" opacity="0.79"/><rect x="5.8" y="13.1" width="1.0" height="0.9" fill="#8c5c2e" opacity="0.70"/><rect x="34.1" y="13.0" width="1.3" height="0.9" fill="#b57e46" opacity="0.44"/><rect x="24.3" y="27.2" width="0.9" height="1.2" fill="#b57e46" opacity="0.54"/><rect x="19.2" y="7.3" width="1.3" height="1.0" fill="#c08a52" opacity="0.70"/><rect x="32.7" y="16.5" width="0.9" height="0.7" fill="#b57e46" opacity="0.72"/><rect x="31.3" y="3.7" width="1.1" height="0.8" fill="#8c5c2e" opacity="0.72"/><rect x="30.9" y="9.0" width="0.8" height="1.1" fill="#9a6836" opacity="0.57"/><rect x="0.5" y="36.4" width="0.8" height="1.2" fill="#8c5c2e" opacity="0.50"/><rect x="10.1" y="16.5" width="1.0" height="1.1" fill="#c08a52" opacity="0.49"/><rect x="0.9" y="20.0" width="0.8" height="1.1" fill="#8c5c2e" opacity="0.65"/><rect x="35.2" y="8.0" width="0.9" height="1.1" fill="#b57e46" opacity="0.45"/><rect x="2.4" y="18.1" width="0.9" height="1.1" fill="#b57e46" opacity="0.56"/><rect x="20.4" y="11.9" width="1.2" height="0.9" fill="#b57e46" opacity="0.42"/><rect x="20.0" y="5.9" width="1.3" height="1.2" fill="#8c5c2e" opacity="0.41"/><rect x="12.5" y="30.6" width="1.1" height="1.2" fill="#8c5c2e" opacity="0.61"/><rect x="30.2" y="4.1" width="0.7" height="0.9" fill="#8c5c2e" opacity="0.43"/><rect x="31.3" y="20.0" width="1.0" height="1.2" fill="#8c5c2e" opacity="0.71"/><rect x="14.5" y="17.4" width="1.3" height="1.3" fill="#9a6836" opacity="0.42"/><rect x="30.0" y="3.4" width="1.3" height="0.8" fill="#9a6836" opacity="0.45"/><rect x="18.2" y="24.2" width="0.9" height="0.7" fill="#b57e46" opacity="0.57"/><rect x="3.3" y="15.4" width="0.8" height="1.3" fill="#c08a52" opacity="0.41"/><rect x="35.5" y="26.1" width="1.0" height="1.1" fill="#b57e46" opacity="0.47"/><rect x="20.7" y="32.5" width="0.8" height="0.8" fill="#8c5c2e" opacity="0.68"/><rect x="14.1" y="34.8" width="1.0" height="1.0" fill="#c08a52" opacity="0.50"/><rect x="28.9" y="34.8" width="1.2" height="1.0" fill="#7c4f26" opacity="0.64"/><rect x="11.3" y="18.1" width="1.1" height="1.1" fill="#7c4f26" opacity="0.70"/><rect x="35.7" y="19.2" width="1.2" height="1.0" fill="#7c4f26" opacity="0.41"/><rect x="20.0" y="31.8" width="1.1" height="1.3" fill="#9a6836" opacity="0.53"/><rect x="6.7" y="29.0" width="0.9" height="0.8" fill="#8c5c2e" opacity="0.42"/><rect x="0.0" y="9.0" width="0.9" height="1.2" fill="#b57e46" opacity="0.64"/><rect x="35.1" y="37.1" width="0.9" height="1.2" fill="#b57e46" opacity="0.78"/><rect x="11.8" y="24.1" width="0.9" height="0.9" fill="#7c4f26" opacity="0.41"/><rect x="26.4" y="29.5" width="1.2" height="1.0" fill="#7c4f26" opacity="0.73"/><rect x="25.1" y="2.0" width="1.2" height="0.8" fill="#7c4f26" opacity="0.73"/><rect x="9.9" y="25.6" width="0.9" height="1.2" fill="#7c4f26" opacity="0.50"/><rect x="27.8" y="26.2" width="0.7" height="1.2" fill="#7c4f26" opacity="0.74"/><rect x="34.3" y="5.4" width="1.3" height="1.1" fill="#9a6836" opacity="0.66"/><rect x="1.9" y="33.9" width="1.0" height="1.0" fill="#b57e46" opacity="0.59"/><rect x="18.0" y="29.2" width="1.2" height="1.1" fill="#b57e46" opacity="0.50"/><rect x="3.9" y="12.8" width="0.7" height="1.2" fill="#7c4f26" opacity="0.55"/><rect x="24.0" y="19.4" width="0.7" height="1.2" fill="#8c5c2e" opacity="0.52"/><rect x="18.6" y="14.7" width="1.1" height="1.2" fill="#9a6836" opacity="0.59"/><rect x="35.1" y="28.6" width="0.9" height="1.2" fill="#9a6836" opacity="0.77"/><rect x="23.4" y="38.9" width="1.2" height="0.7" fill="#8c5c2e" opacity="0.57"/><rect x="34.3" y="26.0" width="0.8" height="0.9" fill="#b57e46" opacity="0.77"/><rect x="25.7" y="33.7" width="1.1" height="1.0" fill="#8c5c2e" opacity="0.64"/><rect x="16.9" y="28.0" width="1.0" height="0.8" fill="#9a6836" opacity="0.52"/><rect x="20.1" y="29.1" width="0.8" height="1.2" fill="#9a6836" opacity="0.72"/><rect x="8.5" y="34.4" width="1.3" height="1.0" fill="#8c5c2e" opacity="0.65"/><rect x="3.0" y="16.3" width="0.9" height="1.3" fill="#9a6836" opacity="0.69"/><rect x="7.3" y="21.3" width="1.0" height="1.1" fill="#7c4f26" opacity="0.64"/><rect x="14.7" y="32.4" width="1.2" height="0.8" fill="#c08a52" opacity="0.76"/><rect x="21.5" y="29.6" width="1.2" height="0.9" fill="#c08a52" opacity="0.48"/><rect x="0.9" y="19.6" width="1.2" height="1.2" fill="#7c4f26" opacity="0.60"/><rect x="36.4" y="21.8" width="0.8" height="1.1" fill="#c08a52" opacity="0.57"/><rect x="23.5" y="10.1" width="0.9" height="1.0" fill="#9a6836" opacity="0.65"/><rect x="2.1" y="30.2" width="1.2" height="1.2" fill="#7c4f26" opacity="0.70"/><rect x="9.2" y="10.0" width="1.0" height="0.8" fill="#9a6836" opacity="0.47"/><rect x="34.0" y="38.1" width="1.1" height="0.8" fill="#8c5c2e" opacity="0.68"/><rect x="27.7" y="10.6" width="1.2" height="1.3" fill="#c08a52" opacity="0.60"/><rect x="0.1" y="33.9" width="1.2" height="1.2" fill="#9a6836" opacity="0.67"/><rect x="5.5" y="17.9" width="1.1" height="1.3" fill="#b57e46" opacity="0.56"/><rect x="28.1" y="38.9" width="0.8" height="1.2" fill="#b57e46" opacity="0.65"/><rect x="11.8" y="6.3" width="0.8" height="0.8" fill="#7c4f26" opacity="0.64"/><rect x="4.9" y="11.5" width="1.0" height="1.2" fill="#9a6836" opacity="0.59"/><rect x="36.8" y="18.4" width="0.8" height="1.1" fill="#7c4f26" opacity="0.60"/><rect x="9.1" y="13.7" width="0.9" height="0.7" fill="#c08a52" opacity="0.54"/><rect x="16.6" y="13.7" width="1.1" height="0.9" fill="#7c4f26" opacity="0.59"/><rect x="32.5" y="21.4" width="0.7" height="1.2" fill="#8c5c2e" opacity="0.54"/><rect x="24.6" y="35.9" width="0.9" height="1.0" fill="#b57e46" opacity="0.46"/><rect x="25.4" y="29.1" width="0.7" height="1.1" fill="#b57e46" opacity="0.67"/><rect x="15.6" y="12.7" width="1.0" height="0.8" fill="#7c4f26" opacity="0.62"/><rect x="15.7" y="7.1" width="0.8" height="1.2" fill="#c08a52" opacity="0.65"/><rect x="31.5" y="17.2" width="0.9" height="1.0" fill="#c08a52" opacity="0.54"/><rect x="20.7" y="36.2" width="1.1" height="1.0" fill="#b57e46" opacity="0.50"/><rect x="23.8" y="22.0" width="1.2" height="0.7" fill="#8c5c2e" opacity="0.43"/><rect x="31.6" y="24.5" width="0.7" height="1.2" fill="#b57e46" opacity="0.73"/><rect x="6.2" y="26.9" width="0.7" height="0.8" fill="#c08a52" opacity="0.69"/><rect x="5.5" y="12.1" width="0.8" height="1.0" fill="#c08a52" opacity="0.69"/><rect x="28.1" y="35.5" width="1.3" height="1.0" fill="#c08a52" opacity="0.71"/><rect x="5.8" y="32.7" width="0.7" height="1.0" fill="#8c5c2e" opacity="0.57"/><rect x="24.6" y="27.6" width="0.8" height="0.8" fill="#b57e46" opacity="0.42"/><rect x="2.2" y="4.8" width="0.7" height="1.1" fill="#7c4f26" opacity="0.44"/><rect x="6.3" y="7.1" width="1.1" height="1.1" fill="#7c4f26" opacity="0.54"/><rect x="38.2" y="16.9" width="0.9" height="0.9" fill="#7c4f26" opacity="0.59"/><rect x="1.0" y="26.3" width="1.2" height="0.8" fill="#7c4f26" opacity="0.72"/><rect x="24.4" y="25.6" width="1.0" height="1.1" fill="#c08a52" opacity="0.71"/><rect x="21.3" y="34.5" width="0.7" height="1.0" fill="#c08a52" opacity="0.64"/><rect x="13.1" y="15.4" width="1.3" height="1.2" fill="#9a6836" opacity="0.61"/><rect x="19.4" y="26.8" width="0.8" height="1.1" fill="#9a6836" opacity="0.72"/><rect x="30.7" y="20.1" width="0.7" height="1.2" fill="#8c5c2e" opacity="0.68"/><rect x="7.4" y="14.8" width="1.1" height="0.9" fill="#8c5c2e" opacity="0.78"/><rect x="36.2" y="24.0" width="0.9" height="0.9" fill="#b57e46" opacity="0.80"/><rect x="8.2" y="25.9" width="1.1" height="0.7" fill="#9a6836" opacity="0.68"/><rect x="12.4" y="29.5" width="0.9" height="1.1" fill="#7c4f26" opacity="0.63"/><rect x="21.3" y="37.1" width="1.2" height="1.3" fill="#8c5c2e" opacity="0.77"/><rect x="29.5" y="5.8" width="1.2" height="1.0" fill="#b57e46" opacity="0.63"/><rect x="16.7" y="36.4" width="0.8" height="1.2" fill="#c08a52" opacity="0.55"/><rect x="34.2" y="23.6" width="1.0" height="1.2" fill="#b57e46" opacity="0.43"/><rect x="17.5" y="14.4" width="0.7" height="1.2" fill="#b57e46" opacity="0.49"/><rect x="25.5" y="10.8" width="0.9" height="1.3" fill="#9a6836" opacity="0.80"/><rect x="16.6" y="22.3" width="1.2" height="1.2" fill="#8c5c2e" opacity="0.66"/><rect x="12.4" y="26.7" width="1.1" height="1.3" fill="#c08a52" opacity="0.70"/><rect x="5.7" y="26.5" width="0.7" height="1.3" fill="#9a6836" opacity="0.69"/><rect x="36.6" y="13.7" width="1.2" height="1.2" fill="#b57e46" opacity="0.73"/><rect x="1.3" y="18.6" width="0.8" height="1.2" fill="#c08a52" opacity="0.49"/><rect x="23.4" y="34.2" width="0.7" height="0.9" fill="#9a6836" opacity="0.47"/><rect x="5.3" y="31.8" width="0.8" height="0.8" fill="#9a6836" opacity="0.50"/><rect x="6.4" y="35.3" width="0.8" height="1.2" fill="#7c4f26" opacity="0.50"/><rect x="35.6" y="8.6" width="1.2" height="1.1" fill="#c08a52" opacity="0.65"/><rect x="20.8" y="33.3" width="1.0" height="0.8" fill="#8c5c2e" opacity="0.72"/><rect x="26.6" y="29.0" width="0.8" height="1.0" fill="#9a6836" opacity="0.78"/><rect x="36.0" y="6.3" width="1.1" height="1.0" fill="#8c5c2e" opacity="0.76"/><rect x="35.7" y="35.1" width="1.0" height="1.3" fill="#9a6836" opacity="0.55"/><rect x="21.6" y="29.7" width="1.1" height="0.8" fill="#c08a52" opacity="0.55"/><rect x="37.4" y="38.3" width="0.8" height="1.0" fill="#b57e46" opacity="0.55"/><rect x="21.4" y="12.2" width="0.7" height="0.8" fill="#c08a52" opacity="0.78"/><rect x="17.8" y="14.4" width="1.2" height="1.3" fill="#b57e46" opacity="0.59"/><rect x="36.3" y="7.7" width="1.3" height="1.1" fill="#7c4f26" opacity="0.54"/><rect x="23.6" y="11.7" width="1.3" height="0.8" fill="#9a6836" opacity="0.43"/><rect x="0.4" y="21.6" width="0.8" height="1.0" fill="#c08a52" opacity="0.70"/><rect x="9.3" y="4.3" width="0.9" height="0.8" fill="#7c4f26" opacity="0.67"/><rect x="27.8" y="0.1" width="0.7" height="1.0" fill="#b57e46" opacity="0.53"/><rect x="22.2" y="0.3" width="0.9" height="1.2" fill="#9a6836" opacity="0.61"/><rect x="7.0" y="22.4" width="1.3" height="1.2" fill="#7c4f26" opacity="0.44"/><rect x="36.4" y="10.4" width="1.2" height="1.0" fill="#b57e46" opacity="0.67"/><rect x="15.0" y="38.7" width="0.7" height="1.1" fill="#8c5c2e" opacity="0.44"/><rect x="29.1" y="10.5" width="0.8" height="0.9" fill="#c08a52" opacity="0.78"/><rect x="38.8" y="38.7" width="1.1" height="1.1" fill="#7c4f26" opacity="0.55"/><rect x="14.3" y="5.2" width="1.3" height="0.9" fill="#9a6836" opacity="0.46"/><rect x="6.2" y="5.8" width="1.1" height="1.2" fill="#7c4f26" opacity="0.52"/><rect x="22.1" y="3.7" width="1.0" height="1.0" fill="#c08a52" opacity="0.69"/><rect x="9.2" y="5.5" width="1.3" height="0.7" fill="#b57e46" opacity="0.50"/><rect x="3.6" y="18.6" width="0.9" height="0.9" fill="#c08a52" opacity="0.49"/><rect x="26.1" y="32.6" width="1.0" height="1.0" fill="#c08a52" opacity="0.64"/><rect x="7.1" y="2.7" width="0.7" height="0.9" fill="#c08a52" opacity="0.54"/><rect x="3.1" y="29.4" width="0.7" height="1.2" fill="#8c5c2e" opacity="0.50"/><rect x="6.0" y="11.9" width="0.9" height="1.2" fill="#9a6836" opacity="0.57"/><rect x="6.5" y="1.8" width="0.8" height="1.2" fill="#7c4f26" opacity="0.73"/><rect x="30.8" y="11.1" width="0.7" height="0.7" fill="#9a6836" opacity="0.70"/><rect x="28.0" y="19.9" width="0.8" height="1.1" fill="#8c5c2e" opacity="0.50"/><rect x="17.7" y="9.4" width="1.0" height="1.1" fill="#8c5c2e" opacity="0.44"/><rect x="15.9" y="20.9" width="0.9" height="0.9" fill="#7c4f26" opacity="0.51"/><rect x="26.2" y="8.7" width="0.9" height="1.1" fill="#8c5c2e" opacity="0.43"/><rect x="3.3" y="2.2" width="0.8" height="0.9" fill="#c08a52" opacity="0.55"/><rect x="26.5" y="9.9" width="0.8" height="1.3" fill="#9a6836" opacity="0.72"/><rect x="11.4" y="36.4" width="1.2" height="1.0" fill="#7c4f26" opacity="0.43"/><rect x="17.1" y="25.7" width="0.7" height="0.8" fill="#c08a52" opacity="0.72"/><rect x="30.8" y="2.9" width="1.2" height="0.8" fill="#7c4f26" opacity="0.63"/><rect x="28.2" y="13.6" width="1.1" height="0.9" fill="#b57e46" opacity="0.46"/><rect x="17.1" y="7.0" width="0.8" height="1.0" fill="#8c5c2e" opacity="0.75"/><rect x="24.8" y="6.1" width="1.2" height="1.1" fill="#c08a52" opacity="0.72"/><rect x="3.6" y="8.6" width="0.8" height="1.2" fill="#c08a52" opacity="0.75"/><rect x="38.9" y="12.4" width="1.2" height="1.2" fill="#9a6836" opacity="0.58"/><rect x="37.2" y="30.6" width="1.2" height="1.0" fill="#b57e46" opacity="0.61"/><rect x="18.8" y="13.2" width="0.9" height="1.0" fill="#9a6836" opacity="0.80"/><rect x="24.2" y="25.7" width="0.8" height="0.7" fill="#8c5c2e" opacity="0.67"/><rect x="7.2" y="20.7" width="0.9" height="1.2" fill="#8c5c2e" opacity="0.71"/><rect x="20.2" y="9.7" width="1.3" height="1.0" fill="#8c5c2e" opacity="0.62"/></pattern>
<pattern id="wood" width="60" height="30" patternUnits="userSpaceOnUse"><rect width="60" height="30" fill="#8a5d2e"/><rect x="17.3" y="0" width="1.6" height="30" fill="#77491f" opacity="0.55"/><rect x="28.5" y="0" width="1.5" height="30" fill="#a0703a" opacity="0.52"/><rect x="50.9" y="0" width="1.4" height="30" fill="#996b36" opacity="0.41"/><rect x="44.5" y="0" width="1.5" height="30" fill="#a0703a" opacity="0.55"/><rect x="58.0" y="0" width="1.1" height="30" fill="#70451c" opacity="0.49"/><rect x="40.9" y="0" width="0.9" height="30" fill="#77491f" opacity="0.40"/><rect x="24.2" y="0" width="1.1" height="30" fill="#a87a42" opacity="0.46"/><rect x="39.5" y="0" width="1.8" height="30" fill="#a0703a" opacity="0.40"/><rect x="27.9" y="0" width="1.4" height="30" fill="#a0703a" opacity="0.45"/><rect x="21.8" y="0" width="0.9" height="30" fill="#996b36" opacity="0.31"/><rect x="7.7" y="0" width="0.9" height="30" fill="#996b36" opacity="0.56"/><rect x="25.9" y="0" width="1.0" height="30" fill="#70451c" opacity="0.35"/><rect x="37.8" y="0" width="1.4" height="30" fill="#70451c" opacity="0.38"/><rect x="54.4" y="0" width="1.6" height="30" fill="#70451c" opacity="0.31"/><rect x="10.2" y="0" width="0.6" height="30" fill="#996b36" opacity="0.36"/><rect x="45.6" y="0" width="1.0" height="30" fill="#77491f" opacity="0.33"/><rect x="16.0" y="0" width="1.2" height="30" fill="#a87a42" opacity="0.60"/><rect x="58.2" y="0" width="1.0" height="30" fill="#a0703a" opacity="0.41"/><rect x="0.7" y="0" width="1.0" height="30" fill="#70451c" opacity="0.40"/><rect x="40.1" y="0" width="1.3" height="30" fill="#a0703a" opacity="0.36"/><rect x="34.2" y="0" width="1.2" height="30" fill="#a0703a" opacity="0.39"/><rect x="11.8" y="0" width="1.6" height="30" fill="#a0703a" opacity="0.37"/><rect x="34.6" y="0" width="1.2" height="30" fill="#70451c" opacity="0.34"/><rect x="33.7" y="0" width="1.2" height="30" fill="#a87a42" opacity="0.33"/><rect x="27.2" y="0" width="0.8" height="30" fill="#996b36" opacity="0.39"/><rect x="24.6" y="0" width="1.0" height="30" fill="#a0703a" opacity="0.33"/><rect x="58.2" y="0" width="0.8" height="30" fill="#996b36" opacity="0.37"/><rect x="34.6" y="0" width="1.0" height="30" fill="#77491f" opacity="0.46"/><rect x="32.5" y="0" width="0.9" height="30" fill="#996b36" opacity="0.53"/><rect x="28.3" y="0" width="1.8" height="30" fill="#77491f" opacity="0.50"/><rect x="27.3" y="0" width="1.3" height="30" fill="#a0703a" opacity="0.53"/><rect x="49.7" y="0" width="1.2" height="30" fill="#996b36" opacity="0.35"/><rect x="56.4" y="0" width="1.8" height="30" fill="#996b36" opacity="0.58"/><rect x="51.8" y="0" width="0.9" height="30" fill="#a0703a" opacity="0.51"/><rect x="4.0" y="0" width="1.7" height="30" fill="#a0703a" opacity="0.41"/><rect x="25.5" y="0" width="1.2" height="30" fill="#70451c" opacity="0.58"/><rect x="20.5" y="0" width="1.0" height="30" fill="#a0703a" opacity="0.33"/><rect x="31.1" y="0" width="0.6" height="30" fill="#70451c" opacity="0.56"/><rect x="12.4" y="0" width="1.6" height="30" fill="#70451c" opacity="0.55"/><rect x="35.5" y="0" width="1.2" height="30" fill="#70451c" opacity="0.39"/><rect x="5.0" y="0" width="1.7" height="30" fill="#70451c" opacity="0.55"/><rect x="21.6" y="0" width="1.8" height="30" fill="#70451c" opacity="0.34"/><rect x="39.8" y="0" width="0.6" height="30" fill="#a0703a" opacity="0.43"/><rect x="56.5" y="0" width="1.0" height="30" fill="#996b36" opacity="0.30"/></pattern>
<pattern id="floor" width="8" height="6" patternUnits="userSpaceOnUse" patternTransform="rotate(-12)"><rect width="8" height="6" fill="#dbd9cf"/><path d="M0 0 L8 6 M-4 0 L4 6 M4 0 L12 6 M8 0 L0 6 M4 0 L-4 6 M12 0 L4 6" stroke="#a5a296" stroke-width="0.7"/><rect x="1.1" y="0.9" width="1.9" height="1.4" fill="#33415c"/><rect x="5.1" y="3.9" width="1.9" height="1.4" fill="#33415c"/></pattern>
<pattern id="redb" width="10" height="10" patternUnits="userSpaceOnUse"><rect width="10" height="10" fill="#8c3a22"/><rect x="9.0" y="1.8" width="0.9" height="0.9" fill="#7a3019" opacity="0.7"/><rect x="3.2" y="2.3" width="0.9" height="0.9" fill="#6e2a16" opacity="0.7"/><rect x="7.1" y="4.1" width="0.9" height="0.9" fill="#b4603a" opacity="0.7"/><rect x="7.3" y="0.5" width="0.9" height="0.9" fill="#7a3019" opacity="0.7"/><rect x="2.0" y="8.6" width="0.9" height="0.9" fill="#7a3019" opacity="0.7"/><rect x="6.1" y="4.5" width="0.9" height="0.9" fill="#7a3019" opacity="0.7"/><rect x="7.2" y="4.9" width="0.9" height="0.9" fill="#a8502f" opacity="0.7"/><rect x="5.8" y="6.2" width="0.9" height="0.9" fill="#b4603a" opacity="0.7"/><rect x="7.3" y="4.5" width="0.9" height="0.9" fill="#6e2a16" opacity="0.7"/><rect x="5.9" y="7.8" width="0.9" height="0.9" fill="#b4603a" opacity="0.7"/><rect x="5.0" y="1.2" width="0.9" height="0.9" fill="#7a3019" opacity="0.7"/><rect x="6.6" y="1.0" width="0.9" height="0.9" fill="#b4603a" opacity="0.7"/><rect x="2.8" y="6.1" width="0.9" height="0.9" fill="#6e2a16" opacity="0.7"/><rect x="6.0" y="6.7" width="0.9" height="0.9" fill="#b4603a" opacity="0.7"/><rect x="5.1" y="6.8" width="0.9" height="0.9" fill="#b4603a" opacity="0.7"/><rect x="4.4" y="4.9" width="0.9" height="0.9" fill="#6e2a16" opacity="0.7"/><rect x="7.4" y="5.9" width="0.9" height="0.9" fill="#a8502f" opacity="0.7"/><rect x="0.7" y="5.6" width="0.9" height="0.9" fill="#6e2a16" opacity="0.7"/><rect x="2.4" y="7.6" width="0.9" height="0.9" fill="#6e2a16" opacity="0.7"/><rect x="8.2" y="8.5" width="0.9" height="0.9" fill="#a8502f" opacity="0.7"/><rect x="0.1" y="8.0" width="0.9" height="0.9" fill="#7a3019" opacity="0.7"/><rect x="0.8" y="7.4" width="0.9" height="0.9" fill="#7a3019" opacity="0.7"/><rect x="4.8" y="7.8" width="0.9" height="0.9" fill="#6e2a16" opacity="0.7"/><rect x="2.8" y="5.7" width="0.9" height="0.9" fill="#a8502f" opacity="0.7"/><rect x="1.2" y="3.4" width="0.9" height="0.9" fill="#a8502f" opacity="0.7"/><rect x="0.2" y="6.5" width="0.9" height="0.9" fill="#a8502f" opacity="0.7"/></pattern>
<clipPath id="cIn"><ellipse cx="657" cy="315.3" rx="131" ry="61.1"/></clipPath>
<clipPath id="cHole"><ellipse cx="652.8" cy="337" rx="89.8" ry="43"/></clipPath>
<clipPath id="cLeft"><path d="M500 230 L797 230 L797 340 L760 440 L500 450 Z"/></clipPath>
</defs>
<filter id="soft" x="-2%" y="-2%" width="104%" height="104%"><feGaussianBlur stdDeviation="0.45"/></filter>
<g filter="url(#soft)">
<g clip-path="url(#cLeft)">
<path d="M514 358.3 L514 370.8 A143 66.7 0 0 0 800 370.8 L800 358.3 A143 66.7 0 0 1 514 358.3 Z" fill="#dcdcdc" />
<path d="M514 359.3 A143 66.7 0 0 0 800 359.3" fill="none" stroke="#f2f2f2" stroke-width="0.8"/>
<path d="M514 315.3 L514 359.3 A143 66.7 0 0 0 800 359.3 L800 315.3 A143 66.7 0 0 1 514 315.3 Z" fill="url(#stW)" />
<defs><linearGradient id="wsh" x1="0" y1="0" x2="1" y2="0"><stop offset="0" stop-color="#000" stop-opacity="0.22"/><stop offset="0.25" stop-color="#000" stop-opacity="0.06"/><stop offset="0.6" stop-color="#fff" stop-opacity="0.05"/><stop offset="1" stop-color="#000" stop-opacity="0.05"/></linearGradient></defs>
<path d="M514 315.3 L514 359.3 A143 66.7 0 0 0 800 359.3 L800 315.3 A143 66.7 0 0 1 514 315.3 Z" fill="url(#wsh)" />
<ellipse cx="657" cy="315.3" rx="143" ry="66.7" fill="url(#stT)"/>
</g>
<ellipse cx="657" cy="315.3" rx="131" ry="61.1" fill="url(#stI)"/>
<defs><linearGradient id="ish" x1="0" y1="0" x2="1" y2="0"><stop offset="0" stop-color="#000" stop-opacity="0.32"/><stop offset="0.3" stop-color="#000" stop-opacity="0.08"/><stop offset="0.75" stop-color="#000" stop-opacity="0.02"/><stop offset="1" stop-color="#000" stop-opacity="0.1"/></linearGradient></defs>
<ellipse cx="657" cy="315.3" rx="131" ry="61.1" fill="url(#ish)"/>
<g clip-path="url(#cIn)">
<ellipse cx="657" cy="338.6" rx="128" ry="61.1" fill="url(#sand)"/>
<ellipse cx="652.8" cy="337" rx="89.8" ry="43" fill="url(#wood)"/>
<ellipse cx="652.8" cy="337" rx="89.8" ry="43" fill="none" stroke="#c9a070" stroke-width="0.8" opacity="0.7"/>
<g clip-path="url(#cHole)"><ellipse cx="652.8" cy="359" rx="89.8" ry="43" fill="url(#floor)"/></g>
</g>
<ellipse cx="657" cy="315.3" rx="131" ry="61.1" fill="none" stroke="#d8d5cd" stroke-width="0.7" opacity="0.6"/>
<path d="M712.8 431.4 L712.8 423 L744.8 428 L744.8 439.6 Z" fill="#dedede"/>
<path d="M744.8 439.6 L744.8 428 L825.6 363.5 L825.6 373 Z" fill="#c6c6c6"/>
<path d="M712.8 376.5 L744.8 379.4 L744.8 428.7 L712.8 424 Z" fill="url(#stW)"/>
<path d="M744.8 379.4 L825.6 321 L825.6 364 L744.8 428.7 Z" fill="url(#stR)"/>
<path d="M794 310.5 L796.8 312.8 L825.6 321 L744.8 379.4 L712.8 376.5 L700 372.6 L739.3 375.8 L799.5 329.2 L780 326 Z" fill="url(#stT)"/>
<path d="M700 373 L739.3 375.8 L799.5 329.2 L782.5 328.6 L781 331.6 L771 331.6 L769.6 335.2 L757.4 335.2 L756 339.3 L740.2 339.3 Z" fill="url(#redb)"/>
<path d="M710 373.6 L757 337.2" stroke="#d9b8a8" stroke-width="0.8" opacity="0.85"/>
<path d="M720 374.4 L770 333.4" stroke="#d9b8a8" stroke-width="0.8" opacity="0.85"/>
<path d="M730 375 L782 330" stroke="#d9b8a8" stroke-width="0.8" opacity="0.85"/>
<path d="M744.8 379.4 L744.8 439.6 M712.8 377 L712.8 431.4" stroke="#d0cdc5" stroke-width="0.6" opacity="0.6"/>
</g>
<path d="M785.1 407.0 C792.9 407.6 817.8 409.2 831.8 410.6 C845.8 412.0 852.9 411.6 868.8 415.6 C884.6 419.6 912.7 428.7 926.9 434.6 C941.1 440.5 945.7 444.8 953.8 450.8 C961.9 456.8 968.8 463.6 975.4 470.5 C982.0 477.4 987.3 484.2 993.3 492.0 C999.3 499.8 1005.3 509.7 1011.3 517.2 C1017.3 524.7 1023.2 530.9 1029.2 536.9 C1035.2 542.9 1040.0 547.7 1047.2 553.1 C1054.4 558.5 1063.3 564.6 1072.3 569.2 C1081.3 573.9 1090.2 577.6 1101.0 581.0 C1111.8 584.4 1124.9 587.5 1136.9 589.7 C1148.9 591.9 1160.8 593.1 1172.8 594.3 C1184.8 595.5 1196.7 596.2 1208.7 596.8 C1220.7 597.4 1231.6 597.8 1244.6 597.9 C1257.6 598.0 1279.9 597.3 1286.9 597.2" fill="none" stroke="#1fa31f" stroke-width="1.3"/>
<path d="M865.2 412.4 L872.4 412.4 L865.2 419 L872.4 419 Z" fill="none" stroke="#2fb02f" stroke-width="1.3"/>
<path d="M868.8 381.5 L868.8 448.2" stroke="#bcbcbc" stroke-width="1.1"/><path d="M849 431 L888.5 399.4 M836 405 L868.8 415.4" stroke="#b4b4b4" stroke-width="0.9"/>
<rect x="872.4" y="417.8" width="55.6" height="16" fill="#e4e4e4"/>
<g fill="none" stroke="#6e6e6e" stroke-width="0.9"><circle cx="1472.7" cy="226.4" r="69.3"/><circle cx="1472.7" cy="226.4" r="46"/><path d="M1403.4 226.4 H1542 M1472.7 157.1 V295.7"/></g><circle cx="1499.8" cy="210.8" r="4.8" fill="#b98a62"/>
<defs>
<linearGradient id="gG" x1="0" y1="0" x2="0" y2="1"><stop offset="0" stop-color="#f4f4f4"/><stop offset="1" stop-color="#bdbdbd"/></linearGradient>
<linearGradient id="gGs" x1="0" y1="0" x2="1" y2="0"><stop offset="0" stop-color="#d8d8d8"/><stop offset="1" stop-color="#a9a9a9"/></linearGradient>
<linearGradient id="gH" x1="0" y1="0" x2="1" y2="0"><stop offset="0" stop-color="#c8c8c8"/><stop offset="0.35" stop-color="#f6f6f6"/><stop offset="1" stop-color="#a8a8a8"/></linearGradient>
<linearGradient id="gB" x1="0" y1="0" x2="0" y2="1"><stop offset="0" stop-color="#8fc0f8"/><stop offset="1" stop-color="#5c94e2"/></linearGradient>
<linearGradient id="gLogo" x1="0" y1="0" x2="0" y2="1"><stop offset="0" stop-color="#43e4f6"/><stop offset="1" stop-color="#52a2e8"/></linearGradient>
<radialGradient id="gS" cx="0.45" cy="0.35" r="0.65"><stop offset="0" stop-color="#ffffff"/><stop offset="0.5" stop-color="#d4d4d4"/><stop offset="1" stop-color="#8e8e8e"/></radialGradient>
<radialGradient id="gT" cx="0.5" cy="0.5" r="0.5"><stop offset="0.3" stop-color="#8a8a8a"/><stop offset="0.65" stop-color="#e8e8e8"/><stop offset="1" stop-color="#9a9a9a"/></radialGradient>
</defs>
<path d="M7.9 35.3 L7.9 19.5 Q7.9 12.4 15 12.4 L28.3 12.4 L28.3 27.5 Q28.3 35.3 20.5 35.3 Z" fill="url(#gLogo)" stroke="#1f6a80" stroke-width="0.7"/>
<path d="M15.7 22.6 Q16 20.2 18.6 20 L20.4 20 L20.4 25.2 Q20.2 27.4 17.6 27.5 L15.7 27.5 Z" fill="#46585e"/>
<path d="M16.2 27.5 L16.2 35 M20 12.8 L20 20" stroke="#2b93b4" stroke-width="0.7" fill="none"/>
<path d="M42.5 12 L48.5 12 L52 15.5 L52 24.8 L42.5 24.8 Z" fill="#f4f4f4"/><path d="M48.5 12 L48.5 15.5 L52 15.5 Z" fill="#c9c9c9"/>
<path d="M59.5 15.5 L59.5 23 L61 18 L70 18 L70 16.5 L64.5 16.5 L63.5 15 Z" fill="#d4d4d4"/><path d="M59.3 23.6 L62 17.6 L72.8 17.6 L70 23.6 Z" fill="#6fa8ee"/>
<path d="M79.6 12.5 L89 12.5 L91 14.5 L91 24.5 L79.6 24.5 Z" fill="#6fa8ee"/><rect x="82" y="12.5" width="6" height="3.6" fill="#e8f0fb"/><rect x="85.6" y="13" width="1.5" height="2.6" fill="#4a79bd"/><rect x="82" y="18.5" width="6.6" height="6" fill="#f4f4f4"/><rect x="83.3" y="20.6" width="4" height="1.8" fill="#6b8fc6"/>
<path d="M100.5 12 L109.5 12 L111.6 14 L111.6 23 L100.5 23 Z" fill="#6fa8ee"/><rect x="103" y="12" width="5.5" height="3" fill="#dfe9f8"/><rect x="98" y="17" width="8.2" height="8" fill="#f8f8f8"/><path d="M99.8 20.8 L101.6 22.8 L104.6 18.6" stroke="#333" stroke-width="1.1" fill="none"/>
<path d="M120 18.4 L124.6 14.2 L124.6 17 L129 17 L129 19.8 L124.6 19.8 L124.6 22.6 Z" fill="#6fa8ee"/>
<path d="M136 17 L141 17 L138.5 20.2 Z" fill="#d0d0d0"/>
<path d="M157.8 18.4 L153.2 14.2 L153.2 17 L148.6 17 L148.6 19.8 L153.2 19.8 L153.2 22.6 Z" fill="#ffffff"/>
<path d="M164.8 17 L169.2 17 L167 19.8 Z" fill="#8d8d8d"/>
<rect x="176.5" y="12" width="9.6" height="5" fill="#f6f6f6"/><rect x="174.5" y="17" width="13.6" height="5.6" fill="#6fa8ee"/><rect x="176.5" y="21.4" width="9.6" height="3.6" fill="#f6f6f6"/>
<rect x="205.2" y="17" width="4.4" height="1" fill="#bdbdbd"/><path d="M205 19 L209.8 19 L207.4 22.2 Z" fill="#bdbdbd"/>
<rect x="1391" y="8" width="17" height="16.4" fill="#4a607e" stroke="#5b7fb3" stroke-width="1"/>
<rect x="1393" y="11" width="13" height="11" fill="#3a3a3a" stroke="#d8d8d8" stroke-width="0.6"/><rect x="1393" y="11" width="13" height="3.2" fill="#e9a663"/><rect x="1396.4" y="11" width="0.9" height="11" fill="#d8d8d8"/><rect x="1393.6" y="10" width="3" height="1.4" fill="#e9a663"/>
<path d="M1429 14.2 L1434 14.2 L1431.5 17.4 Z" fill="#ffffff"/>
<rect x="1456" y="11.8" width="8.4" height="1" fill="#1a1a1a"/>
<rect x="1492.6" y="9.8" width="6.4" height="6.2" rx="1" fill="none" stroke="#1a1a1a" stroke-width="1"/><path d="M1494.6 9.6 L1494.6 8.4 L1500.8 8.4 L1500.8 14 L1499.4 14" fill="none" stroke="#1a1a1a" stroke-width="1"/>
<path d="M1529.8 8.2 L1538 16.2 M1538 8.2 L1529.8 16.2" stroke="#1a1a1a" stroke-width="1.1"/>
<path d="M18.3 52.3 L22.3 48.3 L34.3 48.3 L30.3 52.3 Z" fill="#f2f2f2"/>
<path d="M30.3 52.3 L34.3 48.3 L34.3 60.0 L30.3 64.0 Z" fill="url(#gGs)"/>
<rect x="18.3" y="52.3" width="12" height="11.7" fill="url(#gG)"/>
<rect x="12.3" y="59.8" width="13.1" height="12" fill="#fafafa" stroke="#cfcfcf" stroke-width="0.6"/><rect x="13" y="60.6" width="11.7" height="1.6" fill="#8fb4e6"/><rect x="14.2" y="63.8" width="9.4" height="1" fill="#444"/><rect x="14.2" y="66" width="9.4" height="1.6" fill="#b8b8b8"/><rect x="14.2" y="69" width="9.4" height="1" fill="#444"/>
<circle cx="33" cy="69.4" r="3.3" fill="#fbb468" stroke="#4a4438" stroke-width="0.7"/>
<path d="M12 82.8 L16.6 78.2 L33.8 78.2 L29.2 82.8 Z" fill="#f2f2f2"/>
<path d="M29.2 82.8 L33.8 78.2 L33.8 93.2 L29.2 97.8 Z" fill="url(#gGs)"/>
<rect x="12" y="82.8" width="17.2" height="15" fill="url(#gG)"/>
<circle cx="33" cy="97.8" r="3.3" fill="#fbb468" stroke="#4a4438" stroke-width="0.7"/>
<path d="M122 49 L141.5 49 L145 52 L145 55 L137.5 55 L145 62.8 L145 66.4 L125 66.4 L121.3 63.4 L121.3 60.4 L130 60.4 Z" fill="#d6d6d6"/>
<path d="M122 49 L141.5 49 L145 52 L131.5 52 L145 62.8 L134 62.8 L131 60.4 L130 60.4 Z" fill="#ececec"/>
<path d="M121.3 60.4 L131 60.4 L134 62.8 L125 62.8 Z" fill="#e6e6e6"/>
<path d="M125 62.8 L145 62.8 L145 66.4 L125 66.4 Z" fill="#bdbdbd"/><path d="M133 52 L145 52 L145 55 L137 55 Z" fill="#c4c4c4"/>
<circle cx="142.5" cy="68.7" r="3.3" fill="#fbb468" stroke="#4a4438" stroke-width="0.7"/>
<path d="M121 87.5 Q129 85 133.5 76.4 Q143 82 145 90.5 Q139 96 131.5 99 Q129 91 121 87.5 Z" fill="url(#gS)"/>
<path d="M125 86.6 Q133 90 135.6 97.2 M128.8 83.8 Q137 87.5 139.6 94.6 M131.6 80 Q140 84 142.8 92 M136.6 78.6 Q134 87 125.6 90.6 M140.6 82 Q138 90.6 128.4 94.6" stroke="#7a7a7a" stroke-width="0.7" fill="none"/>
<circle cx="142.5" cy="98.7" r="3.3" fill="#fbb468" stroke="#4a4438" stroke-width="0.7"/>
<path d="M220 55 L224.2 50.8 L241.2 50.8 L237 55 Z" fill="#f2f2f2"/>
<path d="M237 55 L241.2 50.8 L241.2 67.8 L237 72 Z" fill="url(#gGs)"/>
<rect x="220" y="55" width="17" height="17" fill="url(#gG)"/>
<path d="M267.3 50.3 L278.3 68.5 Q267.3 75.5 256.3 68.5 Z" fill="url(#gH)"/>
<path d="M305 50 L293 66.5 L304 73.5 Z" fill="#e9e9e9"/><path d="M305 50 L317 66 L304 73.5 Z" fill="#bcbcbc"/>
<ellipse cx="342" cy="61.4" rx="11.2" ry="11.2" fill="url(#gT)"/><ellipse cx="342" cy="61" rx="4.6" ry="4.4" fill="#5f5f5f"/>
<path d="M222 87 L222 102.6 A8 3.2 0 0 0 238 102.6 L238 87 Z" fill="url(#gH)"/><ellipse cx="230" cy="87" rx="8" ry="3.2" fill="#efefef"/>
<circle cx="267.3" cy="94.8" r="11" fill="url(#gS)"/>
<path d="M295 84 L295 103.6 L311 105 Z" fill="#e4e4e4"/><path d="M295 84 L300 84.6 L316.2 101.6 L311 105 Z" fill="#c2c2c2"/>
<path d="M334.5 82 L338.5 84.5 L338.5 96.5 L334.5 94.5 Z" fill="#d0d0d0"/><path d="M334.5 82 L346.5 86.5 L351 90 L351 103 L346.5 106 L343 104 L343 93 L338.5 91 L338.5 84.5 Z" fill="#e6e6e6"/><path d="M346.5 89.5 L351 90 L351 103 L346.5 106 Z" fill="#b9b9b9"/><path d="M338.5 84.5 L346.5 89.5 L346.5 106 L343 104 L343 93 L338.5 96.5 Z" fill="#f1f1f1"/>
<rect x="363" y="51.3" width="1" height="52" fill="#7a7a7a"/>
<rect x="373.9" y="50.8" width="15.4" height="17.2" fill="url(#gB)"/><path d="M389.3 50.8 L394 55.5 L394 72 L389.3 68 Z" fill="#4f84d0"/><path d="M373.9 68 L389.3 68 L394 72.4 L378.6 72.4 Z" fill="#f4f4f4"/><path d="M381.5 66 L381.5 58" stroke="#1d3a70" stroke-width="1.3"/><path d="M378.8 59.6 L381.5 56.4 L384.2 59.6 Z" fill="#1d3a70"/>
<path d="M410.8 50.4 L432.2 50.4 L432.2 64.4 L425 69.2 L416.6 69.2 L410.8 64.4 Z" fill="#5e96e2"/><path d="M412.5 50.4 L430.5 50.4 L424 63 L417.5 63 Z" fill="#a9ccf6"/><circle cx="420.9" cy="67" r="4.7" fill="#f0f0f0" stroke="#4a4a4a" stroke-width="0.7"/>
<path d="M458.8 49.6 L452 60 L458.8 63 Z" fill="#a8cdf8"/><path d="M458.8 49.6 L465.6 60 L458.8 63 Z" fill="#5e96e2"/>
<path d="M451.4 61.2 L458.8 64.6 L458.8 73.8 L446.4 66.2 Z" fill="#ececec"/><path d="M466.2 61.2 L458.8 64.6 L458.8 73.8 L470.6 66.2 Z" fill="#bdbdbd"/>
<path d="M484 61.7 L496 51.9 L507.7 56 L496 65.8 Z" fill="url(#gG)"/><path d="M484 61.7 L496 65.8 L496 71.6 L484 67 Z" fill="#9fc6f6"/><path d="M496 65.8 L507.7 56 L507.7 61.4 L496 71.6 Z" fill="#5e96e2"/>
<g fill="none" stroke="#82aee6" stroke-width="0.9"><rect x="522.8" y="58.7" width="13.9" height="13.1"/><rect x="529.5" y="52.3" width="13.5" height="13.5"/><path d="M522.8 58.7 L529.5 52.3 M536.7 58.7 L543 52.3 M522.8 71.8 L529.5 65.8 M536.7 71.8 L543 65.8"/></g>
<path d="M372 92 Q383.5 85 395.5 92.5 L395.5 100 L390.5 104.5 Q383 100 377 105 L372 100.5 Z" fill="#5e96e2"/><path d="M372 92 Q383.5 85 395.5 92.5 L389.8 96.4 Q383 93 377 96.6 Z" fill="#b4d4fa"/><path d="M389.8 96.4 L395.5 92.5 L395.5 100 L390.5 104.5 Z" fill="#f2f2f2"/>
<path d="M394.6 87.6 Q384 79.5 373.6 85.6" fill="none" stroke="#d4d4d4" stroke-width="0.9"/><path d="M372 87.6 L373.4 83.4 L376.4 86.6 Z" fill="#d4d4d4"/>
<rect x="404.4" y="78.6" width="34" height="30.6" fill="#54667f" stroke="#6787b6" stroke-width="1"/>
<path d="M410.4 89.4 L410.4 94 L418 98.6 L421 97.5 L433 90.6 L433 98 L425.4 103.6 L418.6 100 L418.6 96 Z" fill="#5e96e2"/><path d="M424 92.4 L418.5 95.6 L421 97.5 L433 90.5 L432.4 89 L418.6 89 L424 85.6 L421.6 83 L410.4 89.4 L411 92.4 Z" fill="#b9d7fb"/><path d="M421.6 83 L424 85.6 L424 88.6 L420 88.6 Z" fill="#5e96e2"/>
<rect x="418" y="97.8" width="7.2" height="7.6" fill="#f1f1f1"/>
<path d="M451.2 84.8 L451.2 103 A8.4 3 0 0 0 468 103 L468 84.8 Z" fill="url(#gH)"/><ellipse cx="459.6" cy="84.8" rx="8.4" ry="3" fill="#ededed"/><path d="M446.2 89.6 L451 89.6 M468.2 89.6 L469.4 89.6 L471.6 100 L449.6 100 L446.2 89.6" fill="none" stroke="#e6e6e6" stroke-width="0.8"/><rect x="451.4" y="95" width="16.4" height="5" fill="#4e4e4e" opacity="0.75"/><ellipse cx="459.6" cy="93.7" rx="7.8" ry="3.2" fill="#f4a85e" stroke="#d08a44" stroke-width="0.5"/>
<path d="M485 102 L485 90.4" stroke="#dcdcdc" stroke-width="1.1"/><path d="M482.8 91.6 L485 88.6 L487.2 91.6" fill="none" stroke="#dcdcdc" stroke-width="1"/>
<path d="M489 86 L496 82 L496 91.4 L489 94.4 Z" fill="#78aef0"/>
<path d="M489.6 94.4 L494.20000000000005 89.80000000000001 L507.20000000000005 89.80000000000001 L502.6 94.4 Z" fill="#f2f2f2"/>
<path d="M502.6 94.4 L507.20000000000005 89.80000000000001 L507.20000000000005 101.4 L502.6 106.0 Z" fill="url(#gGs)"/>
<rect x="489.6" y="94.4" width="13" height="11.6" fill="url(#gG)"/>
<path d="M489 94 L490 94 L490 106 L489 105.4 Z" fill="#78aef0"/>
<rect x="522.4" y="83.9" width="21.2" height="21.6" fill="#5b5b5b" stroke="#82aee6" stroke-width="0.9"/><rect x="523.8" y="85.3" width="18.4" height="18.8" fill="none" stroke="#6f9cd8" stroke-width="0.6"/><rect x="525.8" y="88" width="14.2" height="13.6" fill="url(#gG)"/>
<path d="M576.4 60 L580 56.6 L588 56.6 L588 60 Z" fill="#f0f0f0"/><rect x="576.4" y="60" width="8.6" height="15.6" fill="url(#gG)"/><path d="M585 66.6 L589 63 L589 72 L585 75.6 Z" fill="#b3b3b3"/>
<path d="M585 57.6 L588.4 54.6 L598 54.6 L594.6 57.6 Z" fill="#a9cdf8"/><rect x="585" y="57.6" width="9.6" height="9" fill="#7fb3f2"/><path d="M594.6 57.6 L598 54.6 L598 63.6 L594.6 66.6 Z" fill="#4f84d0"/>
<path d="M632 53 L635.6 49.4 Q641.5 48.4 644.4 53.6 L644.4 58.4 L640.6 61.8 L632 61.8 Z" fill="url(#gG)"/><path d="M635.6 49.2 Q642 48 644.6 53.8 L644.4 57 Q641.4 52.4 634 52 Z" fill="#f2a65a"/><path d="M640.6 55 L644.4 57 L644.4 58.4 L640.6 61.8 Z" fill="#b5b5b5"/>
<path d="M632 72.2 L636 68.2 L640.4 68.2 L644.4 72.4 L644.4 77.6 L640.6 81 L632 81 Z" fill="url(#gG)"/><path d="M637 70.8 L640 68 L644.6 72.4 L641.4 75.2 Z" fill="#f2a65a"/><path d="M640.6 75.4 L644.4 73 L644.4 77.6 L640.6 81 Z" fill="#b5b5b5"/>
<rect x="637" y="88" width="3" height="12.6" fill="#9fb6d4"/><path d="M635 91.4 L641.6 88.6 M635 94.4 L641.6 91.6 M635 97.4 L641.6 94.6 M635 100.2 L641.6 97.4" stroke="#4d8fe6" stroke-width="1.5"/><path d="M635.2 90 L641 88 M635.2 93 L641 91" stroke="#bfe0ff" stroke-width="0.5"/>
<ellipse cx="720.8" cy="54.8" rx="4.2" ry="4.5" fill="#5a8ed6" stroke="#8dbaf2" stroke-width="0.9"/>
<ellipse cx="725.6" cy="54.8" rx="4.2" ry="4.5" fill="#5a8ed6" stroke="#8dbaf2" stroke-width="0.9"/>
<ellipse cx="720.8" cy="54.8" rx="4.2" ry="4.5" fill="none" stroke="#8dbaf2" stroke-width="0.8"/>
<ellipse cx="720.8" cy="74.2" rx="4.2" ry="4.5" fill="#5a8ed6" stroke="#8dbaf2" stroke-width="0.9"/>
<ellipse cx="725.6" cy="74.2" rx="4.2" ry="4.5" fill="#5c5c5c" stroke="#b8b8b8" stroke-width="0.9"/>
<ellipse cx="720.8" cy="74.2" rx="4.2" ry="4.5" fill="none" stroke="#a8c4e8" stroke-width="0.7"/>
<ellipse cx="720.8" cy="94" rx="4.2" ry="4.5" fill="none" stroke="#b8b8b8" stroke-width="0.9"/>
<ellipse cx="725.6" cy="94" rx="4.2" ry="4.5" fill="none" stroke="#b8b8b8" stroke-width="0.9"/>
<path d="M723.2 90.4 Q725.6 94 723.2 97.6 Q720.8 94 723.2 90.4 Z" fill="#5a8ed6" stroke="#7aa9e6" stroke-width="0.5"/>
<rect x="807.4" y="51.2" width="3.8" height="3.8" fill="#ececec"/>
<rect x="814" y="51.2" width="3.8" height="3.8" fill="#ececec"/>
<rect x="807.4" y="57.4" width="3.8" height="3.8" fill="#5aa2f4"/>
<rect x="814" y="57.4" width="3.8" height="3.8" fill="#ececec"/>
<rect x="811" y="69" width="3.4" height="3.4" fill="#ececec"/>
<rect x="806.6" y="71.8" width="3.4" height="3.4" fill="#ececec"/>
<rect x="815" y="71.6" width="3.4" height="3.4" fill="#ececec"/>
<rect x="806.4" y="76.4" width="3.4" height="3.4" fill="#5aa2f4"/>
<rect x="811" y="77.8" width="3.4" height="3.4" fill="#ececec"/>
<rect x="815" y="76.2" width="3.4" height="3.4" fill="#ececec"/>
<path d="M808.6 89 L811 89 L811 99 L806.8 99 L806.8 95.4 L808.6 95.4 Z" fill="#f4f4f4"/><path d="M814.6 89 L817 89 L817 95.4 L818.8 95.4 L818.8 99 L814.6 99 Z" fill="#f4f4f4"/><rect x="812.2" y="87.8" width="1.1" height="13" fill="#d49a66"/>
<path d="M952.8 61.8 L962.8 61.8 L965.9 58 L956.4 58 Z" fill="#f5a95e"/><path d="M952.8 61.6 L952.8 52.6 L956.6 49 L956.6 58" fill="none" stroke="#e6e6e6" stroke-width="0.8"/><path d="M960.2 51.4 L965.8 51.4 M963 48.6 L963 54.4" stroke="#e6e6e6" stroke-width="0.9"/>
<path d="M957.3 72 L960.7 68.3 L960.7 77.2 L957.3 81 Z" fill="#d9d9d9"/><path d="M952.6 74.2 L955 74.2 M958.4 74.2 L965.4 74.2" stroke="#f0a965" stroke-width="0.9"/><path d="M962 70.6 L965.6 70.6 M963.8 68.8 L963.8 72.4" stroke="#d6d6d6" stroke-width="0.8"/>
<path d="M957.3 91.6 L958.6 95 L962 96.3 L958.6 97.6 L957.3 101 L956 97.6 L952.6 96.3 L956 95 Z" fill="#8a6a4a" stroke="#f0a965" stroke-width="0.8"/><path d="M960.2 90.4 L965.8 90.4 M963 87.6 L963 93.2" stroke="#e6e6e6" stroke-width="0.9"/>
<path d="M1090 56.8 L1078.6 56.8 L1078.6 75.4 L1097.6 75.4 L1097.6 64.6" fill="none" stroke="#9a9a9a" stroke-width="1"/><path d="M1091 63.4 L1098 56.4 M1093 56.2 L1098.2 56.2 L1098.2 61.4" fill="none" stroke="#f0a965" stroke-width="1.1"/>
<path d="M1139.7 50.3 L1149.8 55.7 L1149.8 67.8 L1139.7 73.6 L1129.4 67.8 L1129.4 55.7 Z" fill="none" stroke="#b5b5b5" stroke-width="0.7"/>
<path d="M1139.7 60 L1139.7 52" stroke="#52a0dc" stroke-width="0.9"/><path d="M1138 62.6 L1131 66.6" stroke="#58c24c" stroke-width="0.9"/><path d="M1141.6 62.6 L1148.4 66.6" stroke="#e0584e" stroke-width="0.9"/>
<rect x="1138" y="48.8" width="3.3" height="3.3" fill="#5b5b5b" stroke="#52a0dc" stroke-width="0.8"/>
<rect x="1138.1" y="60.2" width="3.3" height="3.3" fill="#5b5b5b" stroke="#f0f0f0" stroke-width="0.8"/>
<rect x="1127.6" y="65.4" width="3.3" height="3.3" fill="#5b5b5b" stroke="#58c24c" stroke-width="0.8"/>
<rect x="1148.2" y="65.4" width="3.3" height="3.3" fill="#5b5b5b" stroke="#e0584e" stroke-width="0.8"/>
<circle cx="1177.6" cy="61.5" r="12.3" fill="none" stroke="#58c24c" stroke-width="0.8"/><ellipse cx="1177.6" cy="61.5" rx="12.3" ry="5.6" fill="none" stroke="#52a0dc" stroke-width="0.8"/><ellipse cx="1177.6" cy="61.5" rx="5.6" ry="12" fill="none" stroke="#e0584e" stroke-width="0.8"/><circle cx="1177.6" cy="61.5" r="0.7" fill="#ddd"/>
<path d="M1140.6 87.6 L1131 102.6 L1150 102.6 Z" fill="none"/>
<path d="M1139.6 88 L1131.6 101.4 M1131.6 102.2 L1139.4 98 M1132.6 102.8 L1140 102.8" stroke="#58c24c" stroke-width="0.8"/><path d="M1141.8 88 L1149.6 101.4 M1149.6 102.2 L1142.2 98 M1148.6 102.8 L1140 102.8" stroke="#e0584e" stroke-width="0.8"/><path d="M1140.7 88.4 L1140.7 95.6" stroke="#52a0dc" stroke-width="0.8"/>
<rect x="1139" y="84.6" width="3.3" height="3.3" fill="#5b5b5b" stroke="#52a0dc" stroke-width="0.8"/>
<rect x="1139.2" y="95.4" width="3.3" height="3.3" fill="#5b5b5b" stroke="#f0f0f0" stroke-width="0.8"/>
<rect x="1128.6" y="101.2" width="3.3" height="3.3" fill="#5b5b5b" stroke="#58c24c" stroke-width="0.8"/>
<rect x="1149.2" y="101.2" width="3.3" height="3.3" fill="#5b5b5b" stroke="#e0584e" stroke-width="0.8"/>
<rect x="1164.7" y="81.3" width="1.2" height="25.6" fill="#f0a965"/>
<path d="M1168.8 86.8 L1170.3999999999999 85.2 L1182.9999999999998 85.2 L1181.3999999999999 86.8 Z" fill="#f2f2f2"/>
<path d="M1181.3999999999999 86.8 L1182.9999999999998 85.2 L1182.9999999999998 91.0 L1181.3999999999999 92.6 Z" fill="url(#gGs)"/>
<rect x="1168.8" y="86.8" width="12.6" height="5.8" fill="url(#gG)"/>
<path d="M1168.8 97.4 L1170.3999999999999 95.80000000000001 L1188.8 95.80000000000001 L1187.2 97.4 Z" fill="#f2f2f2"/>
<path d="M1187.2 97.4 L1188.8 95.80000000000001 L1188.8 101.4 L1187.2 103.0 Z" fill="url(#gGs)"/>
<rect x="1168.8" y="97.4" width="18.4" height="5.6" fill="url(#gG)"/>
<path d="M1189.6 113.6 L1194.6 113.6 L1192.1 116.6 Z" fill="#e0e0e0"/>
<path d="M1209 49.2 L1230.6 49.2 L1230.6 55.5 L1222.6 55.5 L1222.6 70.6 L1217.2 70.6 L1217.2 55.5 L1209 55.5 Z" fill="url(#gG)"/><rect x="1207" y="57.6" width="8.6" height="15.2" fill="#66a6f6"/><rect x="1224.2" y="57.6" width="8.8" height="15.2" fill="#66a6f6"/><rect x="1216.4" y="55.5" width="0.8" height="10" fill="#e9a663"/>
<path d="M1242.4 53.4 L1246.8 49.8 L1250.4 54 L1246 57.6 Z" fill="#66a6f6"/>
<path d="M1248 56 L1249.4 54.6 L1255.4 54.6 L1254 56 Z" fill="#f2f2f2"/>
<path d="M1254 56 L1255.4 54.6 L1255.4 59.6 L1254 61 Z" fill="url(#gGs)"/>
<rect x="1248" y="56" width="6" height="5" fill="url(#gG)"/>
<path d="M1242 62 L1255 49.4" stroke="#f0a965" stroke-width="0.9"/>
<rect x="1243.4" y="69.4" width="4.6" height="10.6" fill="url(#gH)"/><rect x="1248.2" y="68" width="0.9" height="13" fill="#f0a965"/><rect x="1250" y="72" width="5.4" height="6" fill="#66a6f6"/><path d="M1250 72 L1251.6 70.6 L1257 70.6 L1257 76.6 L1255.4 78 L1255.4 72 Z" fill="#4f84d0"/>
<path d="M1210 97 L1211.6 95.4 L1219.3999999999999 95.4 L1217.8 97 Z" fill="#f2f2f2"/>
<path d="M1217.8 97 L1219.3999999999999 95.4 L1219.3999999999999 104.2 L1217.8 105.8 Z" fill="url(#gGs)"/>
<rect x="1210" y="97" width="7.8" height="8.8" fill="url(#gG)"/>
<rect x="1218.9" y="84.6" width="1" height="21.6" fill="#f0a965"/><rect x="1220.6" y="85" width="8.6" height="7.6" fill="#66a6f6"/><path d="M1220.6 85 L1222 83.6 L1230.6 83.6 L1230.6 91 L1229.2 92.6 L1229.2 85 Z" fill="#4f84d0"/>
<path d="M1242.6 91.4 L1243.8 90.2 L1248.8 90.2 L1247.6 91.4 Z" fill="#f2f2f2"/>
<path d="M1247.6 91.4 L1248.8 90.2 L1248.8 96.8 L1247.6 98.0 Z" fill="url(#gGs)"/>
<rect x="1242.6" y="91.4" width="5" height="6.6" fill="url(#gG)"/>
<rect x="1248.8" y="88" width="0.9" height="13" fill="#f0a965"/><rect x="1250.4" y="91" width="5.4" height="7" fill="#66a6f6"/><path d="M1250.4 91 L1251.8 89.8 L1257 89.8 L1257 96.6 L1255.8 98 L1255.8 91 Z" fill="#4f84d0"/>
<path d="M1273 51 L1275 49 L1289.4 49 L1289.4 56.4 L1287.4 58.6 L1282.4 58.6 L1282.4 66 L1280.4 68 L1273 68 Z" fill="#b9b9b9"/><path d="M1273 51 L1287.4 51 L1287.4 58.6 L1280.4 58.6 L1280.4 68 L1273 68 Z" fill="url(#gG)"/><path d="M1273 51 L1275 49 L1289.4 49 L1287.4 51 Z" fill="#f6f6f6"/>
<path d="M1288.6 67.4 A4.6 4.6 0 0 1 1297 66.6" fill="none" stroke="#6aa6f0" stroke-width="1.3"/><path d="M1298.6 64 L1298.2 68.6 L1294.4 67.2 Z" fill="#6aa6f0"/><path d="M1297.4 71 A4.6 4.6 0 0 1 1289 71.6" fill="none" stroke="#6aa6f0" stroke-width="1.3"/><path d="M1287.4 74.4 L1287.8 69.6 L1291.6 71.2 Z" fill="#6aa6f0"/>
<path d="M1284.4 85.4 L1287.0 82.80000000000001 L1297.0 82.80000000000001 L1294.4 85.4 Z" fill="#f2f2f2"/>
<path d="M1294.4 85.4 L1297.0 82.80000000000001 L1297.0 92.4 L1294.4 95.0 Z" fill="url(#gGs)"/>
<rect x="1284.4" y="85.4" width="10" height="9.6" fill="url(#gG)"/>
<path d="M1275 92.6 L1278.6 89.0 L1290.0 89.0 L1286.4 92.6 Z" fill="#f2f2f2"/>
<path d="M1286.4 92.6 L1290.0 89.0 L1290.0 102.0 L1286.4 105.6 Z" fill="url(#gGs)"/>
<rect x="1275" y="92.6" width="11.4" height="13" fill="url(#gG)"/>
<path d="M1284.6 91.6 L1290.4 91.6 L1290.4 97" fill="none" stroke="#e9a663" stroke-width="1"/>
<path d="M1323.7 53.4 L1325.3 51.8 L1333.7 51.8 L1332.1000000000001 53.4 Z" fill="#f2f2f2"/>
<path d="M1332.1000000000001 53.4 L1333.7 51.8 L1333.7 57.199999999999996 L1332.1000000000001 58.8 Z" fill="url(#gGs)"/>
<rect x="1323.7" y="53.4" width="8.4" height="5.4" fill="url(#gG)"/>
<path d="M1315.7 63.8 L1321.7 58.4 L1341.7 58.4 L1336 63.8 Z" fill="#66a6f6"/>
<rect x="1323.7" y="63.8" width="8.4" height="8.4" fill="url(#gG)"/><path d="M1332.1 63.8 L1333.7 62.4 L1333.7 70.6 L1332.1 72.2 Z" fill="#ababab"/>
<rect x="1355.8" y="48.4" width="3.8" height="13.6" fill="#66a6f6"/><rect x="1351.7" y="52" width="12.2" height="6.6" fill="#66a6f6"/><rect x="1355.8" y="52" width="3.8" height="6.6" fill="#dcdcdc"/>
<path d="M1354 70 L1355.2 68.8 L1360.2 68.8 L1359 70 Z" fill="#e2e2e2"/>
<path d="M1359 70 L1360.2 68.8 L1360.2 73.6 L1359 74.8 Z" fill="url(#gGs)"/>
<rect x="1354" y="70" width="5" height="4.8" fill="url(#gG)"/>
<path d="M1354 76.8 L1355.2 75.6 L1360.2 75.6 L1359 76.8 Z" fill="#66a6f6"/>
<path d="M1359 76.8 L1360.2 75.6 L1360.2 80.0 L1359 81.2 Z" fill="url(#gGs)"/>
<rect x="1354" y="76.8" width="5" height="4.4" fill="#f6f6f6"/>
<path d="M1321 86.4 L1324.2 83.2 L1335.2 83.2 L1332 86.4 Z" fill="#f2f2f2"/>
<path d="M1332 86.4 L1335.2 83.2 L1335.2 94.4 L1332 97.60000000000001 Z" fill="url(#gGs)"/>
<rect x="1321" y="86.4" width="11" height="11.2" fill="url(#gG)"/>
<path d="M1321 105 L1326.6 100.2 L1335 100.2 L1329.4 105 Z" fill="#66a6f6"/>
<defs><pattern id="hx" width="2" height="2" patternUnits="userSpaceOnUse"><path d="M0 0L2 2M2 0L0 2" stroke="#777" stroke-width="0.35"/></pattern><pattern id="hy" width="2" height="2" patternUnits="userSpaceOnUse"><path d="M0 0L2 2M2 0L0 2" stroke="#8a5a38" stroke-width="0.4"/></pattern></defs>
<rect x="1351" y="87.6" width="8" height="7.2" fill="#bdbdbd"/><path d="M1351 90 L1353.4 87.6 M1351 93 L1356.4 87.6 M1352.2 94.8 L1359 88 M1355.2 94.8 L1359 91 M1351 89.4 L1356.4 94.8 M1353 87.6 L1359 93.6" stroke="#6a6a6a" stroke-width="0.4"/><rect x="1357" y="93" width="7.4" height="7.8" fill="#d9aa80"/><path d="M1357 96 L1360 93 M1357 99 L1363 93 M1358.4 100.8 L1364.4 94.8 M1361.4 100.8 L1364.4 97.8 M1357 95 L1362.8 100.8 M1359.4 93 L1364.4 98" stroke="#7a5236" stroke-width="0.4"/>
<path d="M1391.3 49.3 A11 11 0 0 0 1391.3 71.3 Z" fill="url(#gS)"/><path d="M1391.8 49.3 A11 11 0 0 1 1391.8 71.3 Z" fill="#5a9af0"/><path d="M1392 56 Q1397 54.6 1401 56.6 M1392 61.4 L1402.6 61.4 M1392 66.6 Q1397 68 1400.6 66 M1395.6 50.4 Q1398.6 60.4 1395.6 70.4 M1399 52.6 Q1400.6 60.4 1399 68.4" stroke="#cfe2fb" stroke-width="0.5" fill="none"/>
<path d="M1391.3 78.7 A11 11 0 0 0 1391.3 100.7 Z" fill="url(#gS)"/><path d="M1391 84.4 Q1385.6 83.6 1382 86 M1391 89.8 L1380.4 89.8 M1391 95.4 Q1386 96.6 1382.4 94.6 M1387.4 79.6 Q1384.4 89.8 1387.4 99.8 M1383.8 82 Q1382 89.8 1383.8 97.6" stroke="#707070" stroke-width="0.6" fill="none"/><path d="M1391.8 78.7 A11 11 0 0 1 1391.8 100.7 Z" fill="url(#gB)"/>
<path d="M261.2 130 L264.6 130 L264.6 134.4 L265.6 134.4 L265.6 135.2 L263.3 135.2 L263.3 137 L262.6 137 L262.6 135.2 L260.1 135.2 L260.1 134.4 L261.2 134.4 Z" fill="#f4f4f4"/><rect x="262" y="130.6" width="1.2" height="3.8" fill="#7b7b7b"/>
<path d="M273.2 130.2 L279.2 136 M279.2 130.2 L273.2 136" stroke="#ffffff" stroke-width="1.2"/>
<path d="M439 131 L445 137 M445 131 L439 137" stroke="#f4f4f4" stroke-width="1.1"/>
<path d="M1546 131.2 L1553.4 131.2 L1549.7 136 Z" fill="#f0f0f0"/>
<rect x="2.8" y="142.3" width="17.8" height="17.4" fill="#4c6385" stroke="#6488bd" stroke-width="1"/>
<path d="M5.6 148 L11.6 148 M8.6 145 L8.6 151" stroke="#7db1f2" stroke-width="1.1"/>
<path d="M12.00 150.20 L12.00 156.39 L13.51 155.10 L14.59 157.40 L15.60 156.97 L14.52 154.74 L16.46 154.59 Z" fill="#ffffff" stroke="#444" stroke-width="0.4"/>
<path d="M27.00 146.00 L27.00 154.17 L29.00 152.46 L30.42 155.50 L31.75 154.93 L30.32 151.99 L32.89 151.79 Z" fill="#ffffff" stroke="#444" stroke-width="0.4"/>
<rect x="41.2" y="145" width="1" height="12" fill="#484848"/>
<rect x="47.4" y="145" width="11.6" height="11.2" fill="none" stroke="#e4e4e4" stroke-width="0.9" stroke-dasharray="1.6 1.2"/>
<path d="M54.60 149.80 L54.60 155.99 L56.11 154.70 L57.19 157.00 L58.20 156.57 L57.12 154.34 L59.06 154.19 Z" fill="#ffffff" stroke="#444" stroke-width="0.4"/>
<rect x="65.4" y="145" width="11.6" height="11.2" fill="none" stroke="#e4e4e4" stroke-width="0.9" stroke-dasharray="1.6 1.2"/><path d="M66 149 L72 149 M66 152.4 L70 152.4 M68.6 146 L68.6 156 M71.6 146 L71.6 150" stroke="#cfcfcf" stroke-width="0.8" stroke-dasharray="1.4 1"/>
<path d="M72.60 149.80 L72.60 155.99 L74.11 154.70 L75.19 157.00 L76.20 156.57 L75.12 154.34 L77.06 154.19 Z" fill="#ffffff" stroke="#444" stroke-width="0.4"/>
<path d="M83 150.4 L88.4 144.2 L88.4 150.4 Z M83 151.4 L88.4 157.4 L83 157.4 Z M89.6 144.2 L95 144.2 L95 150 Z" fill="#7db1f2"/>
<path d="M90.60 150.20 L90.60 156.39 L92.11 155.10 L93.19 157.40 L94.20 156.97 L93.12 154.74 L95.06 154.59 Z" fill="#ffffff" stroke="#444" stroke-width="0.4"/>
<path d="M101 144.6 L110.4 144.6 L106.6 148.8 L106.6 152.6 L104.8 152.6 L104.8 148.8 Z" fill="#6aa6f0"/><path d="M111.4 148 L109.6 151.4 L111 151.4 L109.8 154.8 L112.4 150.6 L111 150.6 L112.2 148 Z" fill="#f0a965"/>
<rect x="119.2" y="145" width="1" height="12" fill="#484848"/>
<rect x="125.2" y="145.4" width="9.6" height="8.6" fill="none" stroke="#9a9a9a" stroke-width="0.9" stroke-dasharray="1.6 1.2"/><path d="M130 153 L130 146.4 M127.8 147.6 L130 144.4 L132.2 147.6" stroke="#5e86bc" stroke-width="1.2" fill="none"/>
<path d="M132.20 150.00 L132.20 156.19 L133.71 154.90 L134.79 157.20 L135.80 156.77 L134.72 154.54 L136.66 154.39 Z" fill="#a8a8a8" stroke="#555" stroke-width="0.4"/>
<path d="M144.4 148.8 L147 151.6 L151.6 145.4" stroke="#5e86bc" stroke-width="1.6" fill="none"/>
<path d="M151.00 150.00 L151.00 156.19 L152.51 154.90 L153.59 157.20 L154.60 156.77 L153.52 154.54 L155.46 154.39 Z" fill="#a8a8a8" stroke="#555" stroke-width="0.4"/>
<rect x="161.8" y="145" width="1" height="12" fill="#484848"/>
<rect x="167" y="144.2" width="13.2" height="13.6" fill="#7db4fa"/>
<path d="M171.60 146.40 L171.60 154.57 L173.59 152.86 L175.02 155.90 L176.35 155.33 L174.92 152.38 L177.49 152.19 Z" fill="#ffffff" stroke="#3a5f96" stroke-width="0.4"/>
<path d="M186 145 L192 151 M192 145 L186 151" stroke="#f0a965" stroke-width="1"/>
<path d="M193.20 150.00 L193.20 156.19 L194.71 154.90 L195.79 157.20 L196.80 156.77 L195.72 154.54 L197.66 154.39 Z" fill="#ffffff" stroke="#444" stroke-width="0.4"/>
<circle cx="209.6" cy="151" r="5.4" fill="#c8c8c8"/>
<rect x="292" y="818.4" width="12.6" height="12" rx="1.5" fill="#444" stroke="#d0d0d0" stroke-width="0.8"/><rect x="293.2" y="821.4" width="10.2" height="1.6" fill="#6aa6f0"/><rect x="293.2" y="825.6" width="10.2" height="1.6" fill="#6aa6f0"/>
<g fill="none" stroke="#d4d4d4" stroke-width="0.9"><rect x="1091.4" y="865.6" width="4.6" height="4.4"/><path d="M1089.4 866 Q1089.4 862.8 1092 863"/><rect x="1097" y="862.4" width="4.6" height="4"/><path d="M1097.8 862.4 Q1098 859.6 1100 860 Q1101.4 860.2 1101.2 862.4"/></g>
<rect x="1108.4" y="860.8" width="9.8" height="8.4" fill="url(#gG)"/><path d="M1113 869 L1118.6 869 L1115.8 872.2 Z" fill="#ffffff" stroke="#444" stroke-width="0.4"/>
<circle cx="1201.4" cy="862.6" r="2.8" fill="#f6e9a8"/><rect x="1200.2" y="865" width="2.4" height="2.2" fill="#cfcfcf"/><path d="M1204.6 860.6 L1211 860.6 L1211 865 M1200.4 868 L1200.4 870.6 L1206.6 870.6" fill="none" stroke="#a8a8a8" stroke-width="0.8"/>
<path d="M1207.60 864.60 L1207.60 870.62 L1209.07 869.36 L1210.12 871.60 L1211.10 871.18 L1210.05 869.01 L1211.94 868.87 Z" fill="#ffffff" stroke="#444" stroke-width="0.4"/>
<path d="M1218.6 863.6 A4.3 4.3 0 1 1 1227.2 863.6 Q1227 866 1225 867.6 L1225 869 L1220.8 869 L1220.8 867.6 Q1218.8 866 1218.6 863.6 Z" fill="#dedede"/><rect x="1221" y="869.4" width="3.8" height="1.1" fill="#bdbdbd"/><rect x="1221.6" y="870.8" width="2.6" height="1" fill="#a8a8a8"/>
<circle cx="1246.8" cy="865.3" r="5.6" fill="none" stroke="#d8343a" stroke-width="1.4"/><path d="M1243 869.4 L1250.6 861.4" stroke="#d8343a" stroke-width="1.2"/>
<path d="M1245.20 861.40 L1245.20 867.42 L1246.67 866.16 L1247.72 868.40 L1248.70 867.98 L1247.65 865.81 L1249.54 865.67 Z" fill="#ffffff" stroke="#444" stroke-width="0.4"/>
<path d="M1263.80 860.00 L1263.80 867.31 L1265.59 865.78 L1266.86 868.50 L1268.05 867.99 L1266.77 865.36 L1269.07 865.18 Z" fill="#ffffff" stroke="#444" stroke-width="0.4"/>
<rect x="1270" y="866.4" width="6.2" height="5.4" fill="#4a4a4a" stroke="#f0f0f0" stroke-width="0.9"/><rect x="1270" y="866.4" width="6.2" height="1.6" fill="#f0f0f0"/>
<path d="M1289 860 L1289 871 L1300 871 M1287.4 862 L1289 859.6 L1290.6 862 M1298 869.4 L1300.4 871 L1298 872.6" fill="none" stroke="#cfe0f6" stroke-width="0.9"/><path d="M1296.6 860 L1294.4 864.6 L1296 864.6 L1294.6 868.4 L1298 863.4 L1296.4 863.4 L1297.8 860 Z" fill="#e6e6e6"/>
<path d="M1385.4 866 L1383.6 863.6 Q1384.4 862.4 1385.6 863.4 L1386.6 864.6 L1386.6 860.6 Q1387.4 859.8 1388.2 860.6 L1388.4 859.8 Q1389.4 859 1390.2 859.8 L1390.4 860 Q1391.4 859.4 1392.2 860.2 L1392.4 861 Q1393.4 860.6 1394 861.4 L1394.6 866 Q1394.6 870 1392.6 871.8 L1388 871.8 Q1386.4 869.6 1385.4 866 Z" fill="#f6f6f6" stroke="#4a4a4a" stroke-width="0.4"/>
<path d="M1415.3999999999999 867.1999999999999 L1418.8 870.8" stroke="#5e96e2" stroke-width="1.8"/>
<circle cx="1412.6" cy="864.4" r="4" fill="#e8f3ff" stroke="#ffffff" stroke-width="0.9"/>
<rect x="1430" y="858.4" width="14" height="14.2" fill="#6aa6f0"/>
<path d="M1438.72 866.92 L1442.1200000000001 870.52" stroke="#e8e8e8" stroke-width="1.8"/>
<circle cx="1436.2" cy="864.4" r="3.6" fill="#6aa6f0" stroke="#e8e8e8" stroke-width="0.9"/>
<path d="M1458 869 L1453.6 869 L1453.6 860.4 L1464.8 860.4 L1464.8 863" fill="none" stroke="#6aa6f0" stroke-width="1.1"/><rect x="1453.6" y="859.4" width="11.2" height="1.8" fill="#6aa6f0"/>
<path d="M1464.6999999999998 869.1 L1468.1 872.7" stroke="#d8d8d8" stroke-width="1.8"/>
<circle cx="1462.6" cy="867" r="3" fill="#555" stroke="#d8d8d8" stroke-width="0.9"/>
<ellipse cx="1484.6" cy="866.6" rx="6" ry="3" fill="none" stroke="#c8c8c8" stroke-width="0.9"/><path d="M1484.6 859 L1484.6 872.6" stroke="#c8c8c8" stroke-width="0.9"/><path d="M1488.4 870.6 L1490.8 868.2 L1491 871.2 Z" fill="#c8c8c8"/>
<path d="M1503.4 863.4 A5 5 0 0 1 1512.6 863" fill="none" stroke="#8fd45a" stroke-width="1.8"/><path d="M1514.4 860.6 L1514 865.4 L1510 863.6 Z" fill="#8fd45a"/><path d="M1512.8 867.6 A5 5 0 0 1 1503.6 868" fill="none" stroke="#8fd45a" stroke-width="1.8"/><path d="M1501.8 870.4 L1502.2 865.6 L1506.2 867.4 Z" fill="#8fd45a"/>
<rect x="1519.4" y="859.6" width="9" height="7.4" fill="#555" stroke="#e0e0e0" stroke-width="0.9"/><rect x="1519.4" y="859.6" width="9" height="1.8" fill="#e0e0e0"/><rect x="1525" y="866.4" width="6" height="4.8" fill="#e8e8e8"/><path d="M1526.4 866.4 Q1526.4 863.4 1528 863.4 Q1529.6 863.4 1529.6 866.4" fill="none" stroke="#e8e8e8" stroke-width="0.9"/>
<rect x="1545.2" y="862" width="9.2" height="7.4" fill="#12a0e2" stroke="#c4eaff" stroke-width="0.9"/><path d="M1543.4 862.6 L1543.4 859.4 L1546.6 859.4 M1553 859.4 L1556.2 859.4 L1556.2 862.6 M1556.2 868 L1556.2 871.2 L1553 871.2 M1546.6 871.2 L1543.4 871.2 L1543.4 868" fill="none" stroke="#e6e6e6" stroke-width="1"/>
</svg>
<span style="left:52.5px;top:107.4px;font-size:9.2px;color:#c9c9c9;font-weight:400;letter-spacing:0.150px;">Режимы моделирования</span>
<span style="left:363.5px;top:107.4px;font-size:9.2px;color:#c9c9c9;font-weight:400;letter-spacing:0.185px;">Прямое моделирование</span>
<span style="left:646.3px;top:107.4px;font-size:9.2px;color:#c9c9c9;font-weight:400;letter-spacing:-0.199px;">Элементы</span>
<span style="left:717.0px;top:107.4px;font-size:9.2px;color:#c9c9c9;font-weight:400;letter-spacing:0.023px;">Булевы операции</span>
<span style="left:854.0px;top:107.4px;font-size:9.2px;color:#c9c9c9;font-weight:400;letter-spacing:-0.112px;">Массивы</span>
<span style="left:963.7px;top:107.4px;font-size:9.2px;color:#c9c9c9;font-weight:400;letter-spacing:0.033px;">Вспомогательные</span>
<span style="left:1072.5px;top:107.4px;font-size:9.2px;color:#c9c9c9;font-weight:400;letter-spacing:-0.443px;">Вставка</span>
<span style="left:1128.7px;top:107.4px;font-size:9.2px;color:#c9c9c9;font-weight:400;letter-spacing:0.169px;">Манипуляции</span>
<span style="left:1203.7px;top:107.4px;font-size:9.2px;color:#c9c9c9;font-weight:400;letter-spacing:-0.047px;">Зависимости</span>
<span style="left:1270.8px;top:107.4px;font-size:9.2px;color:#c9c9c9;font-weight:400;letter-spacing:-0.294px;">Сервис</span>
<span style="left:1320.3px;top:107.4px;font-size:9.2px;color:#c9c9c9;font-weight:400;letter-spacing:-0.016px;">2D-виды</span>
<span style="left:1401.7px;top:107.4px;font-size:9.2px;color:#c9c9c9;font-weight:400;letter-spacing:0.138px;">Конвертация</span>
<span style="left:4.5px;top:126.2px;font-size:9.2px;color:#d4d4d4;font-weight:400;letter-spacing:-0.192px;">Свойства</span>
<span style="left:306.3px;top:127.2px;font-size:9.2px;color:#f0f0f0;font-weight:400;letter-spacing:0.059px;">Беседка в зоне костра.dwg*</span>
<span style="left:325.8px;top:817.5px;font-size:9.2px;color:#ffffff;font-weight:700;letter-spacing:-0.616px;">Модель</span>
<span style="left:368.3px;top:817.5px;font-size:9px;color:#a8a8a8;font-weight:400;letter-spacing:-1.316px;">A4</span>
<span style="left:389.0px;top:817.5px;font-size:9px;color:#a8a8a8;font-weight:400;letter-spacing:-1.316px;">A3</span>
<span style="left:410.0px;top:817.5px;font-size:9px;color:#a8a8a8;font-weight:400;letter-spacing:-1.016px;">A2</span>
<span style="left:431.3px;top:817.5px;font-size:9px;color:#a8a8a8;font-weight:400;letter-spacing:-1.516px;">A1</span>
<span style="left:12.0px;top:840.3px;font-size:9.2px;color:#f2f2f2;font-weight:400;letter-spacing:0.100px;">Выберите траекторию сдвига или [Выравнивание/Базовая точка/Масштаб/Угол закручивания]:</span>
<span style="left:4.0px;top:858.5px;font-size:9.2px;color:#f0f0f0;font-weight:400;letter-spacing:-0.243px;">1338.9497,5505.5778,0.0000</span>
<span style="left:141.5px;top:858.5px;font-size:9px;color:#f0f0f0;font-weight:400;letter-spacing:-1.062px;">ШАГ</span>
<span style="left:173.7px;top:858.5px;font-size:9px;color:#f0f0f0;font-weight:400;letter-spacing:-0.862px;">СЕТКА</span>
<span style="left:215.0px;top:858.5px;font-size:9px;color:#f0f0f0;font-weight:400;letter-spacing:-0.480px;">оПРИВЯЗКА</span>
<span style="left:278.5px;top:858.5px;font-size:9px;color:#f0f0f0;font-weight:400;letter-spacing:-0.259px;">3D оПРИВЯЗКА</span>
<span style="left:356.5px;top:858.5px;font-size:9px;color:#f0f0f0;font-weight:400;letter-spacing:-0.443px;">ОТС-ОБЪЕКТ</span>
<span style="left:425.5px;top:858.5px;font-size:9px;color:#f0f0f0;font-weight:400;letter-spacing:-0.285px;">ОТС-ПОЛЯР</span>
<span style="left:491.6px;top:858.5px;font-size:9px;color:#f0f0f0;font-weight:400;letter-spacing:-0.268px;">ОРТО</span>
<span style="left:529.4px;top:858.5px;font-size:9px;color:#f0f0f0;font-weight:400;letter-spacing:0.033px;">ДИН-ВВОД</span>
<span style="left:591.0px;top:858.5px;font-size:9px;color:#f0f0f0;font-weight:400;letter-spacing:-0.406px;">ИЗО</span>
<span style="left:627.5px;top:858.5px;font-size:9px;color:#f0f0f0;font-weight:400;letter-spacing:-1.508px;">ВЕС</span>
<span style="left:657.0px;top:858.5px;font-size:9px;color:#f0f0f0;font-weight:400;letter-spacing:-0.396px;">ШТРИХОВКА</span>
<span style="left:1049.7px;top:858.7px;font-size:9.2px;color:#f0f0f0;font-weight:400;letter-spacing:-0.403px;">МОДЕЛЬ</span>
<span style="left:1325.0px;top:858.7px;font-size:9.2px;color:#f0f0f0;font-weight:400;letter-spacing:-0.191px;">m1:100</span>
<span style="left:583.3px;top:8.3px;font-size:9.2px;color:#1e1e1e;font-weight:400;letter-spacing:0.221px;">Платформа nanoCAD x64 23 - не для коммерческого использования Беседка в зоне костра.dwg*</span>
<span style="left:48.0px;top:28.8px;font-size:9.2px;color:#e4e4e4;font-weight:400;letter-spacing:-0.161px;">Главная</span>
<span style="left:106.0px;top:28.8px;font-size:9.2px;color:#e4e4e4;font-weight:400;letter-spacing:0.203px;">Построение</span>
<span style="left:184.0px;top:28.8px;font-size:9.2px;color:#e4e4e4;font-weight:400;letter-spacing:-0.359px;">Вставка</span>
<span style="left:241.0px;top:28.8px;font-size:9.2px;color:#e4e4e4;font-weight:400;letter-spacing:-0.003px;">Оформление</span>
<span style="left:323.0px;top:28.8px;font-size:9.2px;color:#e4e4e4;font-weight:400;letter-spacing:0.023px;">Зависимости</span>
<span style="left:404.0px;top:28.8px;font-size:9.2px;color:#ffffff;font-weight:400;letter-spacing:0.106px;">3D-инструменты</span>
<span style="left:500.7px;top:28.8px;font-size:9.2px;color:#e4e4e4;font-weight:400;letter-spacing:-0.662px;">Вид</span>
<span style="left:539.0px;top:28.8px;font-size:9.2px;color:#e4e4e4;font-weight:400;letter-spacing:0.242px;">Настройки</span>
<span style="left:609.0px;top:28.8px;font-size:9.2px;color:#e4e4e4;font-weight:400;letter-spacing:-0.020px;">Вывод</span>
<span style="left:659.0px;top:28.8px;font-size:9.2px;color:#e4e4e4;font-weight:400;letter-spacing:-0.461px;">Растр</span>
<span style="left:706.7px;top:28.8px;font-size:9.2px;color:#e4e4e4;font-weight:400;letter-spacing:0.184px;">Облака точек</span>
<span style="left:790.0px;top:28.8px;font-size:9.2px;color:#e4e4e4;font-weight:400;letter-spacing:0.342px;">Топоплан</span>
<span style="left:41.5px;top:53.3px;font-size:9.2px;color:#ececec;font-weight:400;letter-spacing:0.116px;">Параметрика</span>
<span style="left:151.0px;top:53.3px;font-size:9.2px;color:#ececec;font-weight:400;letter-spacing:0.004px;">Листовое</span>
<span style="left:41.5px;top:82.6px;font-size:9.2px;color:#ffffff;font-weight:700;letter-spacing:-0.172px;">Прямое</span>
<span style="left:151.0px;top:82.6px;font-size:9.2px;color:#ececec;font-weight:400;letter-spacing:-0.260px;">Сети</span>
<span style="left:555.8px;top:79.9px;font-size:9.2px;color:#ececec;font-weight:400;letter-spacing:0.036px;">Редактировать</span>
<span style="left:577.0px;top:91.2px;font-size:9.2px;color:#ececec;font-weight:400;letter-spacing:-0.061px;">тело</span>
<span style="left:647.0px;top:49.1px;font-size:9.2px;color:#ececec;font-weight:400;letter-spacing:0.302px;">Сопряжение</span>
<span style="left:647.0px;top:67.8px;font-size:9.2px;color:#ececec;font-weight:400;letter-spacing:-0.508px;">Фаска</span>
<span style="left:647.0px;top:87.4px;font-size:9.2px;color:#ececec;font-weight:400;letter-spacing:-0.159px;">Резьба</span>
<span style="left:732.8px;top:49.1px;font-size:9.2px;color:#ececec;font-weight:400;letter-spacing:0.145px;">Объединение</span>
<span style="left:732.8px;top:67.8px;font-size:9.2px;color:#ececec;font-weight:400;letter-spacing:-0.036px;">Вычитание</span>
<span style="left:732.8px;top:87.4px;font-size:9.2px;color:#ececec;font-weight:400;letter-spacing:0.015px;">Пересечение</span>
<span style="left:822.5px;top:49.1px;font-size:9.2px;color:#ececec;font-weight:400;letter-spacing:0.119px;">3D-прямоугольный массив</span>
<span style="left:822.5px;top:67.8px;font-size:9.2px;color:#ececec;font-weight:400;letter-spacing:0.153px;">3D-круговой массив</span>
<span style="left:822.5px;top:87.4px;font-size:9.2px;color:#ececec;font-weight:400;letter-spacing:-0.027px;">3D-зеркало</span>
<span style="left:968.7px;top:49.1px;font-size:9.2px;color:#ececec;font-weight:400;letter-spacing:0.037px;">Рабочая плоскость</span>
<span style="left:968.7px;top:67.8px;font-size:9.2px;color:#ececec;font-weight:400;letter-spacing:-0.003px;">Рабочая ось</span>
<span style="left:968.7px;top:87.4px;font-size:9.2px;color:#ececec;font-weight:400;letter-spacing:0.137px;">Рабочая точка</span>
<span style="left:1067.0px;top:79.9px;font-size:9.2px;color:#ececec;font-weight:400;letter-spacing:0.270px;">Добавить</span>
<span style="left:1064.7px;top:91.2px;font-size:9.2px;color:#ececec;font-weight:400;letter-spacing:0.336px;">компонент</span>
<span style="left:1409.0px;top:53.3px;font-size:9.2px;color:#ececec;font-weight:400;letter-spacing:-0.195px;">Тела в сеть</span>
<span style="left:1409.0px;top:82.6px;font-size:9.2px;color:#ececec;font-weight:400;letter-spacing:-0.155px;">Сеть в 3D-тело</span>
<span style="left:304.0px;top:146.6px;font-size:8px;color:#707070;font-weight:400;letter-spacing:-0.172px;">+</span>
<span style="left:327.5px;top:146.5px;font-size:9.2px;color:#787878;font-weight:400;letter-spacing:-0.065px;">Пользовательский вид</span>
<span style="left:442.0px;top:146.5px;font-size:9.2px;color:#787878;font-weight:400;letter-spacing:-0.361px;">Реалистичный</span>
<span style="left:520.0px;top:146.5px;font-size:9.2px;color:#787878;font-weight:400;letter-spacing:-0.270px;">--- нет связанных видов ---</span>
<span style="left:1414.6px;top:8.8px;font-size:12px;color:#b0b0b0;font-weight:400;letter-spacing:-0.287px;">?</span>
<span style="left:207.2px;top:144.2px;font-size:8.5px;color:#2e2e2e;font-weight:700;letter-spacing:-0.403px;">?</span>
<span style="left:875.8px;top:419.2px;font-size:9.4px;color:#3c3c46;font-weight:400;letter-spacing:-0.287px;">Ближайшая</span>
</div></body></html>
